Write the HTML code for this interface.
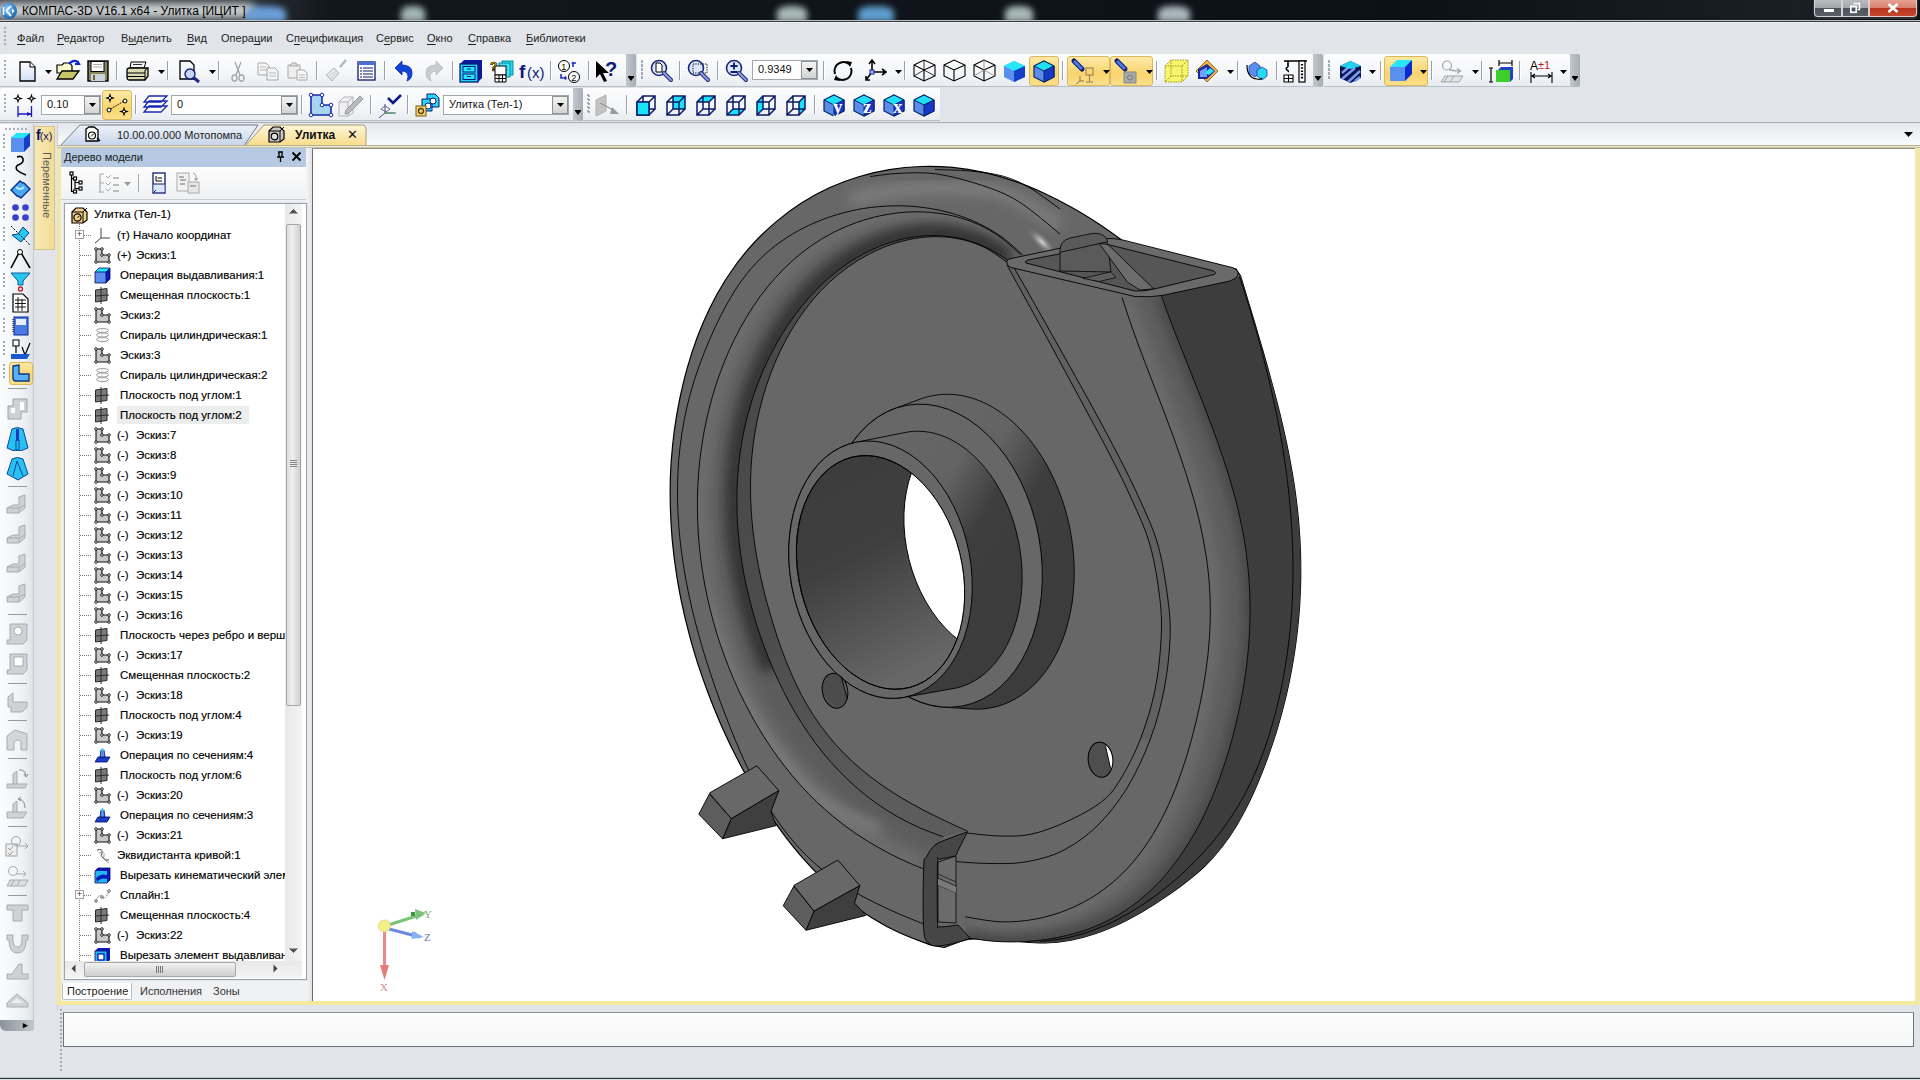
<!DOCTYPE html><html><head><meta charset="utf-8"><style>

*{box-sizing:border-box;margin:0;padding:0}
html,body{width:1920px;height:1080px;overflow:hidden;background:#e1e4e8;font-family:"Liberation Sans", sans-serif;font-size:11px;color:#000;position:relative}
.a{position:absolute}
.t{position:absolute;white-space:nowrap;line-height:1}
u{text-decoration:underline;text-underline-offset:2px;text-decoration-thickness:1px}
svg{position:absolute;overflow:visible}

</style></head><body>
<div class="a" style="left:0;top:0;width:1920px;height:22px;background:linear-gradient(90deg,#3a4046 0px,#2a3036 250px,#12171d 330px,#0c1117 1400px,#1a1f25 1800px,#0d1116 1920px)"></div>
<div class="a" style="left:0;top:0;width:330px;height:20px;overflow:hidden"><div class="a" style="left:-6px;top:3px;width:262px;height:15px;background:#cfd3d4;filter:blur(4px);border-radius:10px"></div></div>
<div class="a" style="left:0;top:0;width:1920px;height:20px;overflow:hidden">
<div class="a" style="left:246px;top:6px;width:40px;height:16px;background:#6a9fd8;filter:blur(3px);border-radius:40% 40% 0 0"></div>
<div class="a" style="left:401px;top:6px;width:24px;height:16px;background:#a2b4b2;filter:blur(3px);border-radius:40% 40% 0 0"></div>
<div class="a" style="left:777px;top:6px;width:30px;height:16px;background:#a8b8b6;filter:blur(3px);border-radius:40% 40% 0 0"></div>
<div class="a" style="left:858px;top:6px;width:36px;height:16px;background:#5f9ccc;filter:blur(3px);border-radius:40% 40% 0 0"></div>
<div class="a" style="left:1005px;top:6px;width:28px;height:16px;background:#a8b8b6;filter:blur(3px);border-radius:40% 40% 0 0"></div>
<div class="a" style="left:1158px;top:6px;width:32px;height:16px;background:#aab6bc;filter:blur(3px);border-radius:40% 40% 0 0"></div>
</div>
<div class="a" style="left:0;top:20px;width:1920px;height:1px;background:rgba(215,222,224,0.85)"></div>
<div class="a" style="left:0;top:21px;width:1920px;height:1px;background:#363b3f"></div><div class="a" style="left:0;top:22px;width:1920px;height:1px;background:#eef0f3"></div>
<svg style="left:0px;top:2px" width="18" height="18" viewBox="0 0 18 18"><defs><radialGradient id="kg" cx="0.4" cy="0.35" r="0.7"><stop offset="0" stop-color="#8cc8f0"/><stop offset="0.6" stop-color="#3a8ad0"/><stop offset="1" stop-color="#1d5a9a"/></radialGradient></defs><circle cx="9" cy="9" r="8" fill="url(#kg)"/><path d="M3.5 5v8" stroke="#fff" stroke-width="1.6"/><path d="M6 9 L11 4 M6.5 9 L11 14" stroke="#e8f4ff" stroke-width="2.2" fill="none"/><path d="M12 6.5 L14.5 9 L12 11.5 Z" fill="#fff"/></svg>
<div class="t" style="left:22px;top:5px;font-size:12px;color:#000">КОМПАС-3D V16.1 x64 - Улитка [ИЦИТ ]</div>
<div class="a" style="left:1813px;top:0;width:105px;height:19px;border:1px solid #2a2e33;border-top:none;border-radius:0 0 5px 5px;background:#2a2e33"></div>
<div class="a" style="left:1814px;top:0;width:28px;height:17px;border:1px solid #d0d4d8;border-top:none;border-radius:0 0 0 4px;background:linear-gradient(#b9bdbf,#a2a7aa 48%,#4d545c 50%,#5a6068)"></div>
<div class="a" style="left:1842px;top:0;width:27px;height:17px;border:1px solid #d0d4d8;border-top:none;background:linear-gradient(#b9bdbf,#a2a7aa 48%,#4d545c 50%,#5a6068)"></div>
<div class="a" style="left:1869px;top:0;width:48px;height:17px;border:1px solid #e8c8c0;border-top:none;border-radius:0 0 4px 0;background:linear-gradient(#e6a295,#d9806e 48%,#b8341c 50%,#c4482e)"></div>
<div class="a" style="left:1824px;top:9px;width:10px;height:3px;background:#fff"></div>
<svg style="left:1849px;top:2px" width="12" height="12"><path d="M4.5 1.5 H10.5 V7.5 H8.5" fill="none" stroke="#fff" stroke-width="1.3"/><rect x="1.8" y="4.3" width="5.4" height="6" fill="none" stroke="#fff" stroke-width="1.6"/></svg>
<svg style="left:1887px;top:3px" width="12" height="10"><path d="M1.5 1 L10.5 9 M10.5 1 L1.5 9" stroke="#fff" stroke-width="2.6"/></svg>
<div class="t" style="left:17px;top:33px;font-size:11px;color:#1e1e1e"><u>Ф</u>айл</div>
<div class="t" style="left:57px;top:33px;font-size:11px;color:#1e1e1e"><u>Р</u>едактор</div>
<div class="t" style="left:121px;top:33px;font-size:11px;color:#1e1e1e">В<u>ы</u>делить</div>
<div class="t" style="left:187px;top:33px;font-size:11px;color:#1e1e1e"><u>В</u>ид</div>
<div class="t" style="left:221px;top:33px;font-size:11px;color:#1e1e1e">Опера<u>ц</u>ии</div>
<div class="t" style="left:286px;top:33px;font-size:11px;color:#1e1e1e">С<u>п</u>ецификация</div>
<div class="t" style="left:376px;top:33px;font-size:11px;color:#1e1e1e">С<u>е</u>рвис</div>
<div class="t" style="left:427px;top:33px;font-size:11px;color:#1e1e1e"><u>О</u>кно</div>
<div class="t" style="left:468px;top:33px;font-size:11px;color:#1e1e1e"><u>С</u>правка</div>
<div class="t" style="left:526px;top:33px;font-size:11px;color:#1e1e1e"><u>Б</u>иблиотеки</div>
<svg style="left:4px;top:27px" width="2" height="21"><rect x="0" y="0" width="2" height="2" fill="#a3abb3"/><rect x="0" y="4" width="2" height="2" fill="#a3abb3"/><rect x="0" y="8" width="2" height="2" fill="#a3abb3"/><rect x="0" y="12" width="2" height="2" fill="#a3abb3"/><rect x="0" y="16" width="2" height="2" fill="#a3abb3"/></svg>
<div class="a" style="left:0px;top:54px;width:626px;height:33px;background:linear-gradient(#fdfdfe,#f4f6f8 60%,#e9ecf0);border-bottom:1px solid #b9bfc6;border-radius:2px 2px 0 0"></div>
<svg style="left:4px;top:60px" width="2" height="21"><rect x="0" y="0" width="2" height="2" fill="#a3abb3"/><rect x="0" y="4" width="2" height="2" fill="#a3abb3"/><rect x="0" y="8" width="2" height="2" fill="#a3abb3"/><rect x="0" y="12" width="2" height="2" fill="#a3abb3"/><rect x="0" y="16" width="2" height="2" fill="#a3abb3"/></svg>
<div class="a" style="left:626px;top:54px;width:10px;height:33px;background:linear-gradient(90deg,#c3c8ce,#a7adb4);border-radius:0 2px 2px 0"></div>
<div class="a" style="left:628px;top:76px;width:6px;height:1px;background:#000"></div>
<div class="t" style="left:628px;top:77px;width:0;height:0;border-left:3px solid transparent;border-right:3px solid transparent;border-top:4px solid #000"></div>
<div class="a" style="left:637px;top:54px;width:676px;height:33px;background:linear-gradient(#fdfdfe,#f4f6f8 60%,#e9ecf0);border-bottom:1px solid #b9bfc6;border-radius:2px 2px 0 0"></div>
<svg style="left:641px;top:60px" width="2" height="21"><rect x="0" y="0" width="2" height="2" fill="#a3abb3"/><rect x="0" y="4" width="2" height="2" fill="#a3abb3"/><rect x="0" y="8" width="2" height="2" fill="#a3abb3"/><rect x="0" y="12" width="2" height="2" fill="#a3abb3"/><rect x="0" y="16" width="2" height="2" fill="#a3abb3"/></svg>
<div class="a" style="left:1313px;top:54px;width:10px;height:33px;background:linear-gradient(90deg,#c3c8ce,#a7adb4);border-radius:0 2px 2px 0"></div>
<div class="a" style="left:1315px;top:76px;width:6px;height:1px;background:#000"></div>
<div class="t" style="left:1315px;top:77px;width:0;height:0;border-left:3px solid transparent;border-right:3px solid transparent;border-top:4px solid #000"></div>
<div class="a" style="left:1324px;top:54px;width:246px;height:33px;background:linear-gradient(#fdfdfe,#f4f6f8 60%,#e9ecf0);border-bottom:1px solid #b9bfc6;border-radius:2px 2px 0 0"></div>
<svg style="left:1328px;top:60px" width="2" height="21"><rect x="0" y="0" width="2" height="2" fill="#a3abb3"/><rect x="0" y="4" width="2" height="2" fill="#a3abb3"/><rect x="0" y="8" width="2" height="2" fill="#a3abb3"/><rect x="0" y="12" width="2" height="2" fill="#a3abb3"/><rect x="0" y="16" width="2" height="2" fill="#a3abb3"/></svg>
<div class="a" style="left:1570px;top:54px;width:10px;height:33px;background:linear-gradient(90deg,#c3c8ce,#a7adb4);border-radius:0 2px 2px 0"></div>
<div class="a" style="left:1572px;top:76px;width:6px;height:1px;background:#000"></div>
<div class="t" style="left:1572px;top:77px;width:0;height:0;border-left:3px solid transparent;border-right:3px solid transparent;border-top:4px solid #000"></div>
<div class="a" style="left:0px;top:88px;width:573px;height:33px;background:linear-gradient(#fdfdfe,#f4f6f8 60%,#e9ecf0);border-bottom:1px solid #b9bfc6;border-radius:2px 2px 0 0"></div>
<svg style="left:4px;top:94px" width="2" height="21"><rect x="0" y="0" width="2" height="2" fill="#a3abb3"/><rect x="0" y="4" width="2" height="2" fill="#a3abb3"/><rect x="0" y="8" width="2" height="2" fill="#a3abb3"/><rect x="0" y="12" width="2" height="2" fill="#a3abb3"/><rect x="0" y="16" width="2" height="2" fill="#a3abb3"/></svg>
<div class="a" style="left:573px;top:88px;width:10px;height:33px;background:linear-gradient(90deg,#c3c8ce,#a7adb4);border-radius:0 2px 2px 0"></div>
<div class="a" style="left:575px;top:110px;width:6px;height:1px;background:#000"></div>
<div class="t" style="left:575px;top:111px;width:0;height:0;border-left:3px solid transparent;border-right:3px solid transparent;border-top:4px solid #000"></div>
<div class="a" style="left:583px;top:88px;width:357px;height:33px;background:linear-gradient(#fdfdfe,#f4f6f8 60%,#e9ecf0);border-bottom:1px solid #b9bfc6;border-radius:2px 2px 0 0"></div>
<svg style="left:587px;top:94px" width="2" height="21"><rect x="0" y="0" width="2" height="2" fill="#a3abb3"/><rect x="0" y="4" width="2" height="2" fill="#a3abb3"/><rect x="0" y="8" width="2" height="2" fill="#a3abb3"/><rect x="0" y="12" width="2" height="2" fill="#a3abb3"/><rect x="0" y="16" width="2" height="2" fill="#a3abb3"/></svg>
<div class="a" style="left:0;top:122px;width:1920px;height:1px;background:#a8adb3"></div>
<svg style="left:19px;top:61px" width="17" height="21" viewBox="0 0 17 21"><path d="M1 1 H11 L16 6 V20 H1 Z" fill="url(#gdoc)" stroke="#000" stroke-width="1.3"/><path d="M11 1 V6 H16" fill="#fff" stroke="#000" stroke-width="1"/><defs><linearGradient id="gdoc" x1="0" y1="0" x2="0" y2="1"><stop offset="0" stop-color="#fff"/><stop offset="1" stop-color="#cfe0f4"/></linearGradient></defs></svg>
<svg style="left:45px;top:70px" width="7" height="4" viewBox="0 0 7 4"><path d="M0 0h7l-3.5 4z" fill="#000"/></svg>
<svg style="left:56px;top:59px" width="24" height="22" viewBox="0 0 24 22"><path d="M1 6 H6 L8 4 H14 L16 7 V14 H1 Z" fill="#fbf7c8" stroke="#000" stroke-width="1.2"/><path d="M1 20 L6 12 H23 L17 20 Z" fill="#c8c468" stroke="#000" stroke-width="1.3"/><path d="M13 5 Q17 0 22 3 L23 5 L19 5" fill="none" stroke="#0a2ad0" stroke-width="2.2"/></svg>
<svg style="left:87px;top:60px" width="22" height="23" viewBox="0 0 22 23"><rect x="1" y="1" width="20" height="20" fill="#8b8460" stroke="#000" stroke-width="1.4"/><rect x="4" y="1.5" width="13" height="10" fill="#fff" stroke="#000" stroke-width="1"/><path d="M6 4.5h9M6 7h9" stroke="#999" stroke-width="0.8"/><rect x="4" y="14" width="14" height="7" fill="#c9d3dc"/><rect x="6" y="15" width="2" height="5" fill="#6d6240"/></svg>
<div class="a" style="left:116px;top:61px;width:1px;height:19px;background:#9aa1a8;box-shadow:1px 0 0 #fff"></div>
<svg style="left:126px;top:61px" width="24" height="20" viewBox="0 0 24 20"><path d="M5 1 H20 L18 7 H4 Z" fill="#f3f3f3" stroke="#000" stroke-width="1"/><path d="M7 3.5h9" stroke="#333"/><path d="M1 9 Q1 7 4 7 H22 V15 L19 19 H3 Q1 19 1 16 Z" fill="#ddd8b0" stroke="#000" stroke-width="1.3"/><path d="M1 12 H19 M1 15.5 H19 M19 9 L22 7 M19 19 V9" stroke="#000" stroke-width="1"/></svg>
<svg style="left:158px;top:70px" width="7" height="4" viewBox="0 0 7 4"><path d="M0 0h7l-3.5 4z" fill="#000"/></svg>
<div class="a" style="left:167px;top:61px;width:1px;height:19px;background:#9aa1a8;box-shadow:1px 0 0 #fff"></div>
<svg style="left:179px;top:60px" width="22" height="23" viewBox="0 0 22 23"><path d="M1 1 H11 L15 5 V19 H1 Z" fill="#f4f6fb" stroke="#000" stroke-width="1.3"/><circle cx="11" cy="14" r="5" fill="#c7d4f2" stroke="#14207a" stroke-width="1.4"/><path d="M14.5 17.5 L20 22" stroke="#1d2a7a" stroke-width="3"/></svg>
<svg style="left:209px;top:70px" width="7" height="4" viewBox="0 0 7 4"><path d="M0 0h7l-3.5 4z" fill="#000"/></svg>
<div class="a" style="left:218px;top:61px;width:1px;height:19px;background:#9aa1a8;box-shadow:1px 0 0 #fff"></div>
<svg style="left:231px;top:61px" width="14" height="21" viewBox="0 0 14 21"><path d="M4 1 L9 14 M10 1 L5 14" stroke="#9aa0a5" stroke-width="1.2" fill="none"/><ellipse cx="3.5" cy="17" rx="2.5" ry="3.2" fill="none" stroke="#9aa0a5" stroke-width="1.2"/><ellipse cx="10.5" cy="17" rx="2.5" ry="3.2" fill="none" stroke="#9aa0a5" stroke-width="1.2"/></svg>
<svg style="left:257px;top:62px" width="22" height="19" viewBox="0 0 22 19"><path d="M1 1 H9 L12 4 V13 H1 Z" fill="#f4f4f4" stroke="#a5a9ad"/><path d="M10 6 H18 L21 9 V18 H10 Z" fill="#f4f4f4" stroke="#a5a9ad"/><path d="M3 5h6M3 8h6M12 11h7M12 14h7" stroke="#b5b9bd"/></svg>
<svg style="left:287px;top:62px" width="22" height="19" viewBox="0 0 22 19"><path d="M1 3 H13 V16 H1 Z" fill="#eeeeee" stroke="#a5a9ad"/><path d="M5 1 H9 L11 4 H3 Z" fill="#ddd" stroke="#a5a9ad"/><path d="M10 8 H17 L20 11 V18 H10 Z" fill="#f6f6f6" stroke="#a5a9ad"/><path d="M12 13h6M12 15.5h6" stroke="#b5b9bd"/></svg>
<div class="a" style="left:316px;top:61px;width:1px;height:19px;background:#9aa1a8;box-shadow:1px 0 0 #fff"></div>
<svg style="left:324px;top:59px" width="24" height="23" viewBox="0 0 24 23"><path d="M16 8 L22 1" stroke="#b2b6ba" stroke-width="2.5"/><path d="M10 9 L15 14 L8 22 L2 16 Z" fill="#e8e8e8" stroke="#b2b6ba"/><path d="M4 18 L12 12 M6 20 L13 14" stroke="#c6c9cc"/></svg>
<svg style="left:357px;top:61px" width="19" height="20" viewBox="0 0 19 20"><rect x="1" y="1" width="17" height="18" fill="#fff" stroke="#0b1a6a" stroke-width="1.3"/><rect x="1" y="1" width="17" height="3" fill="#4c6fd6"/><path d="M3 7h2M6 7h10M3 10h2M6 10h10M3 13h2M6 13h10M3 16h2M6 16h10" stroke="#0b1a6a" stroke-width="1.2"/></svg>
<div class="a" style="left:384px;top:61px;width:1px;height:19px;background:#9aa1a8;box-shadow:1px 0 0 #fff"></div>
<svg style="left:394px;top:60px" width="21" height="22" viewBox="0 0 21 22"><path d="M1 8 L8 1 V5 Q18 5 18 13 Q18 19 13 21 Q15 16 13 13 Q11 11 8 11 V15 Z" fill="#1046d8" stroke="#0a2a9a" stroke-width="0.8"/></svg>
<svg style="left:423px;top:60px" width="21" height="21" viewBox="0 0 21 21"><path d="M20 8 L13 1 V5 Q3 5 3 13 Q3 19 8 21 Q6 16 8 13 Q10 11 13 11 V15 Z" fill="#c9ccd0" stroke="#b8bbbf" stroke-width="0.8"/></svg>
<div class="a" style="left:452px;top:61px;width:1px;height:19px;background:#9aa1a8;box-shadow:1px 0 0 #fff"></div>
<svg style="left:459px;top:59px" width="25" height="24" viewBox="0 0 25 24"><path d="M1 5 L5 1 H23 V19 L19 23 H1 Z" fill="#0b1a9a"/><rect x="1" y="5" width="18" height="18" fill="#22d4f0" stroke="#0b1a7a" stroke-width="1.3"/><rect x="4" y="7.5" width="12" height="5.5" fill="#27e6ff" stroke="#0b1a7a"/><rect x="4" y="15" width="12" height="5.5" fill="#27e6ff" stroke="#0b1a7a"/><path d="M8 10h4M8 17.5h4" stroke="#0b1a7a"/></svg>
<svg style="left:490px;top:60px" width="25" height="23" viewBox="0 0 25 23"><rect x="12" y="1" width="11" height="14" fill="#27d8f0" stroke="#0a8c9a"/><rect x="9" y="3" width="11" height="14" fill="#3ee3f5" stroke="#0a8c9a"/><rect x="5" y="6" width="11" height="9" fill="#fff" stroke="#000"/><path d="M5 15 H16 V22 H5 Z M5 18.5 H16 M9 15 V22 M12.5 15 V22" fill="#fff" stroke="#000"/><text x="0" y="11" font-family="Liberation Sans" font-weight="bold" font-size="12" fill="#f5e900" stroke="#000" stroke-width="0.7">?</text></svg>
<svg style="left:519px;top:61px" width="26" height="20" viewBox="0 0 26 20"><text x="0" y="17" font-family="Liberation Sans" font-weight="bold" font-size="19" fill="#101a7a">f</text><text x="8" y="17" font-family="Liberation Sans" font-size="15" fill="#101a7a">(x)</text></svg>
<div class="a" style="left:550px;top:61px;width:1px;height:19px;background:#9aa1a8;box-shadow:1px 0 0 #fff"></div>
<svg style="left:557px;top:59px" width="26" height="25" viewBox="0 0 26 25"><circle cx="7" cy="7" r="5.5" fill="#fff" stroke="#000"/><text x="4.3" y="10.5" font-size="9" font-family="Liberation Sans">1</text><circle cx="17" cy="18" r="5.5" fill="#fff" stroke="#000"/><text x="14.3" y="21.5" font-size="9" font-family="Liberation Sans">2</text><path d="M16 8 V4 H19 M15 5 L16.5 3" stroke="#1a30c0" stroke-width="1.6" fill="none"/><path d="M4 15 V19 H9 M8 17.5 L9 19 L8 20.5" stroke="#1a30c0" stroke-width="1.6" fill="none"/></svg>
<div class="a" style="left:588px;top:61px;width:1px;height:19px;background:#9aa1a8;box-shadow:1px 0 0 #fff"></div>
<svg style="left:595px;top:60px" width="25" height="23" viewBox="0 0 25 23"><path d="M1 1 L1 18 L5 14 L9 22 L12 21 L8 13 L14 13 Z" fill="#000"/><text x="10" y="16" font-family="Liberation Sans" font-weight="bold" font-size="20" fill="#101a7a">?</text></svg>
<svg style="left:641px;top:61px" width="2" height="21"><rect x="0" y="0" width="2" height="2" fill="#a3abb3"/><rect x="0" y="4" width="2" height="2" fill="#a3abb3"/><rect x="0" y="8" width="2" height="2" fill="#a3abb3"/><rect x="0" y="12" width="2" height="2" fill="#a3abb3"/><rect x="0" y="16" width="2" height="2" fill="#a3abb3"/></svg>
<svg style="left:650px;top:59px" width="23" height="23" viewBox="0 0 23 23"><circle cx="9" cy="9" r="7.5" fill="#dce8fb" stroke="#1c2a7a" stroke-width="1.6"/><path d="M6 4 H10 L12 6 V13 H6 Z" fill="#fff" stroke="#000" stroke-width="1"/><path d="M14 14 L21 21" stroke="#1c2a7a" stroke-width="4" stroke-linecap="round"/><path d="M14 14 L21 21" stroke="#8fa0e0" stroke-width="2" stroke-linecap="round"/></svg>
<div class="a" style="left:679px;top:61px;width:1px;height:19px;background:#9aa1a8;box-shadow:1px 0 0 #fff"></div>
<svg style="left:687px;top:59px" width="23" height="23" viewBox="0 0 23 23"><circle cx="9" cy="9" r="7.5" fill="#dce8fb" stroke="#1c2a7a" stroke-width="1.6"/><rect x="6" y="5" width="14" height="9" fill="none" stroke="#000" stroke-dasharray="1.2 1.2" stroke-width="1"/><path d="M14 14 L21 21" stroke="#1c2a7a" stroke-width="4" stroke-linecap="round"/><path d="M14 14 L21 21" stroke="#8fa0e0" stroke-width="2" stroke-linecap="round"/></svg>
<div class="a" style="left:717px;top:61px;width:1px;height:19px;background:#9aa1a8;box-shadow:1px 0 0 #fff"></div>
<svg style="left:725px;top:59px" width="23" height="23" viewBox="0 0 23 23"><circle cx="9" cy="9" r="7.5" fill="#dce8fb" stroke="#1c2a7a" stroke-width="1.6"/><path d="M5.5 7 H12.5 M9 3.5 V10.5 M5.5 13 H12.5" stroke="#0b1a6a" stroke-width="1.8"/><path d="M14 14 L21 21" stroke="#1c2a7a" stroke-width="4" stroke-linecap="round"/><path d="M14 14 L21 21" stroke="#8fa0e0" stroke-width="2" stroke-linecap="round"/></svg>
<div class="a" style="left:752px;top:60px;width:66px;height:20px;background:#fff;border:1px solid #a2a7ad"></div><div class="t" style="left:758px;top:64px;font-size:11px;color:#111">0.9349</div><div class="a" style="left:801px;top:61px;width:16px;height:18px;background:linear-gradient(#f3f3f3,#d4d4d4);border:1px solid #8d9297"></div><svg style="left:806px;top:68px" width="7" height="4" viewBox="0 0 7 4"><path d="M0 0h7l-3.5 4z" fill="#000"/></svg>
<div class="a" style="left:823px;top:61px;width:1px;height:19px;background:#9aa1a8;box-shadow:1px 0 0 #fff"></div>
<svg style="left:832px;top:60px" width="22" height="22" viewBox="0 0 22 22"><path d="M17 4 A9 9 0 0 0 3 8" fill="none" stroke="#000" stroke-width="2"/><path d="M5 18 A9 9 0 0 0 19 14" fill="none" stroke="#000" stroke-width="2"/><path d="M3 14 A9 9 0 0 1 3 8" fill="none" stroke="#000" stroke-width="2"/><path d="M19 8 A9 9 0 0 1 19 14" fill="none" stroke="#000" stroke-width="2"/><path d="M14 1 L20 2 L18 7 Z M8 21 L2 20 L4 15 Z" fill="#000"/></svg>
<svg style="left:864px;top:59px" width="23" height="24" viewBox="0 0 23 24"><path d="M8 13 V2 M5 5 L8 1 L11 5 M8 13 H21 M18 10 L22 13 L18 16 M8 13 L2 21 M2 17 V21 H6" fill="none" stroke="#000" stroke-width="1.6"/><rect x="6" y="11" width="4" height="4" fill="#9db1f0" stroke="#1a2a9a"/></svg>
<svg style="left:895px;top:70px" width="7" height="4" viewBox="0 0 7 4"><path d="M0 0h7l-3.5 4z" fill="#000"/></svg>
<div class="a" style="left:904px;top:61px;width:1px;height:19px;background:#9aa1a8;box-shadow:1px 0 0 #fff"></div>
<svg style="left:913px;top:59px" width="23" height="23" viewBox="0 0 23 23"><path d="M1 6 L11 1 L22 6 V17 L11 22 L1 17 Z M1 6 L11 11 L22 6 M11 11 V22" fill="none" stroke="#000" stroke-width="1.1"/><path d="M11 1 V11 L1 17 M11 11 L22 17" fill="none" stroke="#000" stroke-width="0.8"/></svg>
<svg style="left:943px;top:59px" width="23" height="23" viewBox="0 0 23 23"><path d="M1 6 L11 1 L22 6 V17 L11 22 L1 17 Z M1 6 L11 11 L22 6 M11 11 V22" fill="none" stroke="#000" stroke-width="1.1"/></svg>
<svg style="left:973px;top:59px" width="23" height="23" viewBox="0 0 23 23"><path d="M1 6 L11 1 L22 6 V17 L11 22 L1 17 Z M1 6 L11 11 L22 6 M11 11 V22" fill="none" stroke="#000" stroke-width="1.1"/><path d="M11 1 V11 L1 17 M11 11 L22 17" fill="none" stroke="#888" stroke-width="0.8"/></svg>
<svg style="left:1003px;top:60px" width="23" height="23" viewBox="0 0 23 23"><path d="M1 6 L11 1 L22 6 V17 L11 22 L1 17 Z" fill="#5a8ff0"/><path d="M1 6 L11 1 L22 6 L11 11 Z" fill="#25e6fa"/><path d="M11 11 L22 6 V17 L11 22 Z" fill="#1440c8"/></svg>
<div class="a" style="left:1029px;top:56px;width:30px;height:30px;background:linear-gradient(#fde9a6,#f9d46e 60%,#fbe08d);border:1px solid #d9b95c;border-radius:3px"></div>
<svg style="left:1033px;top:60px" width="23" height="23" viewBox="0 0 23 23"><path d="M11 1 L21 6 L21 17 L11 22 L1 17 L1 6 Z" fill="#5b8de8" stroke="#08246e" stroke-width="1.2"/><path d="M1 6 L11 1 L21 6 L11 11 Z" fill="#1fe0f5" stroke="#08246e" stroke-width="1"/><path d="M11 11 L21 6 L21 17 L11 22 Z" fill="#1637c4" stroke="#08246e" stroke-width="1"/></svg>
<div class="a" style="left:1062px;top:61px;width:1px;height:19px;background:#9aa1a8;box-shadow:1px 0 0 #fff"></div>
<div class="a" style="left:1067px;top:56px;width:43px;height:30px;background:linear-gradient(#fde9a6,#f9d46e 60%,#fbe08d);border:1px solid #d9b95c;border-radius:3px"></div>
<div class="a" style="left:1110px;top:56px;width:43px;height:30px;background:linear-gradient(#fde9a6,#f9d46e 60%,#fbe08d);border:1px solid #d9b95c;border-radius:3px"></div>
<svg style="left:1071px;top:58px" width="30" height="26" viewBox="0 0 30 26"><path d="M3 3 L11 11" stroke="#0b1a6a" stroke-width="5" stroke-linecap="round"/><path d="M3 3 L11 11" stroke="#4a7ae8" stroke-width="3"/><rect x="15" y="10" width="7" height="7" fill="none" stroke="#8a7a50"/><path d="M18.5 17 V23 M15 24 H22 M9 18 V23 L5 26 M9 23 H13" stroke="#8a7a50" fill="none"/></svg>
<svg style="left:1103px;top:70px" width="7" height="4" viewBox="0 0 7 4"><path d="M0 0h7l-3.5 4z" fill="#000"/></svg>
<svg style="left:1114px;top:58px" width="30" height="26" viewBox="0 0 30 26"><path d="M3 3 L11 11" stroke="#0b1a6a" stroke-width="5" stroke-linecap="round"/><path d="M3 3 L11 11" stroke="#4a7ae8" stroke-width="3"/><path d="M10 14 H22 V25 H10 Z" fill="#a8a8a8" stroke="#888"/><circle cx="16" cy="19.5" r="2.5" fill="none" stroke="#777"/></svg>
<svg style="left:1146px;top:70px" width="7" height="4" viewBox="0 0 7 4"><path d="M0 0h7l-3.5 4z" fill="#000"/></svg>
<div class="a" style="left:1156px;top:61px;width:1px;height:19px;background:#9aa1a8;box-shadow:1px 0 0 #fff"></div>
<svg style="left:1164px;top:59px" width="25" height="24" viewBox="0 0 25 24"><path d="M1 7 L7 1 H24 V17 L18 23 H1 Z" fill="#f8f56a" stroke="#9a9a20" stroke-dasharray="1.5 1" stroke-width="1"/><path d="M1 7 H18 V23 M18 7 L24 1 M7 1 V17 H24 M7 17 L1 23" fill="none" stroke="#9a9a20" stroke-dasharray="1.5 1"/></svg>
<svg style="left:1195px;top:59px" width="25" height="24" viewBox="0 0 25 24"><path d="M12 1 L23 12 L12 23 L1 12 Z" fill="#f2b04a" stroke="#9a6a20"/><path d="M3 10 L12 5 L20 12 L12 20 H3 Z" fill="#1b2a9a"/><path d="M5 12 L12 8 V18 H5 Z" fill="#6fa0ff"/><path d="M10 14 L15 9 L19 12 L14 16 Z" fill="#25e6fa"/></svg>
<svg style="left:1227px;top:70px" width="7" height="4" viewBox="0 0 7 4"><path d="M0 0h7l-3.5 4z" fill="#000"/></svg>
<div class="a" style="left:1237px;top:61px;width:1px;height:19px;background:#9aa1a8;box-shadow:1px 0 0 #fff"></div>
<svg style="left:1245px;top:60px" width="24" height="22" viewBox="0 0 24 22"><path d="M4 6 L10 2 L15 6 V13 L10 17 L4 13 Z" fill="#5a8ff0" stroke="#22409a" stroke-width="0.8"/><path d="M12 10 L17 7 L22 10 V16 L17 20 L12 16 Z" fill="#27d8f5" stroke="#22409a" stroke-width="0.8"/><path d="M2 5 Q2 18 12 19 Q16 20 17 18" fill="none" stroke="#000" stroke-width="1.2"/></svg>
<div class="a" style="left:1276px;top:61px;width:1px;height:19px;background:#9aa1a8;box-shadow:1px 0 0 #fff"></div>
<svg style="left:1282px;top:59px" width="26" height="24" viewBox="0 0 26 24"><path d="M2 2 H25 M6 2 V8 M6 8 Q3 9 5 11 Q7 12 6 13" fill="none" stroke="#000" stroke-width="1.6"/><rect x="17" y="2" width="6" height="21" fill="#fff" stroke="#000" stroke-width="1.2"/><path d="M20 5 V21" stroke="#000" stroke-dasharray="1.6 1.6" stroke-width="2.2"/><path d="M2 16 H11 V23 H2 Z M2 19.5 H11 M6.5 16 V23" fill="#fff" stroke="#000" stroke-width="1.1"/></svg>
<svg style="left:1328px;top:61px" width="2" height="21"><rect x="0" y="0" width="2" height="2" fill="#a3abb3"/><rect x="0" y="4" width="2" height="2" fill="#a3abb3"/><rect x="0" y="8" width="2" height="2" fill="#a3abb3"/><rect x="0" y="12" width="2" height="2" fill="#a3abb3"/><rect x="0" y="16" width="2" height="2" fill="#a3abb3"/></svg>
<svg style="left:1339px;top:60px" width="23" height="24" viewBox="0 0 23 24"><path d="M11.5 1 L22 6 V18 L11.5 23 L1 18 V6 Z" fill="#0b1450"/><path d="M3 13 L11 6 M3 19 L16 8 M9 22 L21 11 M16 21 L21 17" stroke="#7b9cf0" stroke-width="2.5"/><path d="M1 6 L11.5 1 L22 6 L11.5 9 Z" fill="#25e6fa" opacity="0.9"/></svg>
<svg style="left:1369px;top:70px" width="7" height="4" viewBox="0 0 7 4"><path d="M0 0h7l-3.5 4z" fill="#000"/></svg>
<div class="a" style="left:1380px;top:61px;width:1px;height:19px;background:#9aa1a8;box-shadow:1px 0 0 #fff"></div>
<div class="a" style="left:1384px;top:56px;width:44px;height:30px;background:linear-gradient(#fde9a6,#f9d46e 60%,#fbe08d);border:1px solid #d9b95c;border-radius:3px"></div>
<svg style="left:1389px;top:59px" width="24" height="23" viewBox="0 0 24 23"><path d="M1 8 L8 1 H23 L16 8 Z" fill="#25e6fa"/><path d="M16 8 L23 1 V15 L16 22 Z" fill="#0b2ad0"/><rect x="1" y="8" width="15" height="14" fill="#5a8ff0"/></svg>
<svg style="left:1420px;top:70px" width="7" height="4" viewBox="0 0 7 4"><path d="M0 0h7l-3.5 4z" fill="#000"/></svg>
<div class="a" style="left:1431px;top:61px;width:1px;height:19px;background:#9aa1a8;box-shadow:1px 0 0 #fff"></div>
<svg style="left:1440px;top:60px" width="25" height="23" viewBox="0 0 25 23"><circle cx="7" cy="5.5" r="4.5" fill="none" stroke="#a0a4a8" stroke-width="1.2"/><path d="M9 9 Q11 11 20 11 M17 8.5 L20.5 11 L17 13.5" fill="none" stroke="#a0a4a8" stroke-width="1.2"/><path d="M5 16 H23 L19 22 H1 Z M8 16 L4 22 M14 16 L10 22" fill="#e4e4e4" stroke="#a0a4a8"/></svg>
<svg style="left:1472px;top:70px" width="7" height="4" viewBox="0 0 7 4"><path d="M0 0h7l-3.5 4z" fill="#000"/></svg>
<div class="a" style="left:1481px;top:61px;width:1px;height:19px;background:#9aa1a8;box-shadow:1px 0 0 #fff"></div>
<svg style="left:1489px;top:59px" width="26" height="24" viewBox="0 0 26 24"><path d="M10 4 H23 M10 1 V7 M23 1 V7 M2 9 V23 M0 9 H4 M0 23 H4" stroke="#000" stroke-width="1.2" fill="none"/><path d="M9 11 L12 8 H24 V20 L21 23 H9 Z" fill="#2040c8"/><rect x="7" y="11" width="14" height="12" fill="#3ccf2a"/></svg>
<div class="a" style="left:1519px;top:61px;width:1px;height:19px;background:#9aa1a8;box-shadow:1px 0 0 #fff"></div>
<svg style="left:1530px;top:59px" width="24" height="24" viewBox="0 0 24 24"><text x="0" y="11" font-family="Liberation Sans" font-size="12" fill="#000">A</text><text x="8" y="10" font-family="Liberation Sans" font-size="11" fill="#b02020">±1</text><path d="M1 13 V24 M22 13 V24 M2 17 H21 M5 15 L2 17 L5 19 M18 15 L21 17 L18 19" fill="none" stroke="#000" stroke-width="1.1"/></svg>
<svg style="left:1560px;top:70px" width="7" height="4" viewBox="0 0 7 4"><path d="M0 0h7l-3.5 4z" fill="#000"/></svg>
<svg style="left:12px;top:92px" width="26" height="26" viewBox="0 0 26 26"><path d="M6 1.5 L7.2 5.3 L11 6.5 L7.2 7.7 L6 11.5 L4.8 7.7 L1 6.5 L4.8 5.3 Z" fill="#000"/><circle cx="6" cy="6.5" r="1" fill="#fff"/><path d="M19.5 1.5 L20.7 5.3 L24.5 6.5 L20.7 7.7 L19.5 11.5 L18.3 7.7 L14.5 6.5 L18.3 5.3 Z" fill="#000"/><circle cx="19.5" cy="6.5" r="1" fill="#fff"/><path d="M6 14 V25 M19.5 14 V25 M6 22 H19" stroke="#1a1ac0" stroke-width="1.3"/><path d="M15 20 L19.5 22 L15 24 Z" fill="#1a1ac0"/></svg>
<div class="a" style="left:41px;top:95px;width:60px;height:20px;background:#fff;border:1px solid #a2a7ad"></div><div class="t" style="left:47px;top:99px;font-size:11px;color:#111">0.10</div><div class="a" style="left:84px;top:96px;width:16px;height:18px;background:linear-gradient(#f3f3f3,#d4d4d4);border:1px solid #8d9297"></div><svg style="left:89px;top:103px" width="7" height="4" viewBox="0 0 7 4"><path d="M0 0h7l-3.5 4z" fill="#000"/></svg>
<div class="a" style="left:102px;top:90px;width:30px;height:30px;background:linear-gradient(#fde9a6,#f9d46e 60%,#fbe08d);border:1px solid #d9b95c;border-radius:3px"></div>
<svg style="left:104px;top:92px" width="26" height="26" viewBox="0 0 26 26"><path d="M6 1 L7.2 4.8 L11 6 L7.2 7.2 L6 11 L4.8 7.2 L1 6 L4.8 4.8 Z" fill="#000"/><circle cx="6" cy="6" r="1" fill="#fff"/><path d="M20 14.5 L21.2 18.3 L25 19.5 L21.2 20.7 L20 24.5 L18.8 20.7 L15 19.5 L18.8 18.3 Z" fill="#000"/><circle cx="20" cy="19.5" r="1" fill="#fff"/><path d="M5 18 L20 9" stroke="#000" stroke-width="1" stroke-dasharray="1.5 1"/><circle cx="5" cy="18" r="2" fill="#fff" stroke="#000"/><circle cx="21" cy="9" r="2" fill="#fff" stroke="#000"/></svg>
<div class="a" style="left:135px;top:95px;width:1px;height:19px;background:#9aa1a8;box-shadow:1px 0 0 #fff"></div>
<svg style="left:143px;top:95px" width="25" height="20" viewBox="0 0 25 20"><path d="M6 1 H24 L18 7 H1 Z M6 6 H24 L18 12 H1 Z M6 11 H24 L18 17 H1 Z" fill="#fff" stroke="#1a2ab0" stroke-width="1.3"/></svg>
<div class="a" style="left:171px;top:95px;width:127px;height:20px;background:#fff;border:1px solid #a2a7ad"></div><div class="t" style="left:177px;top:99px;font-size:11px;color:#111">0</div><div class="a" style="left:281px;top:96px;width:16px;height:18px;background:linear-gradient(#f3f3f3,#d4d4d4);border:1px solid #8d9297"></div><svg style="left:286px;top:103px" width="7" height="4" viewBox="0 0 7 4"><path d="M0 0h7l-3.5 4z" fill="#000"/></svg>
<div class="a" style="left:301px;top:95px;width:1px;height:19px;background:#9aa1a8;box-shadow:1px 0 0 #fff"></div>
<svg style="left:309px;top:93px" width="25" height="24" viewBox="0 0 25 24"><path d="M2 2 H13 V12 H22 V22 H2 Z" fill="#a8d4f0" stroke="#1a2ab0" stroke-width="1.6" stroke-linejoin="round"/><circle cx="2" cy="2" r="1.8" fill="#fff" stroke="#1a2ab0"/><circle cx="13" cy="2" r="1.8" fill="#fff" stroke="#1a2ab0"/><circle cx="13" cy="12" r="1.8" fill="#fff" stroke="#1a2ab0"/><circle cx="22" cy="12" r="1.8" fill="#fff" stroke="#1a2ab0"/><circle cx="22" cy="22" r="1.8" fill="#fff" stroke="#1a2ab0"/><circle cx="2" cy="22" r="1.8" fill="#fff" stroke="#1a2ab0"/></svg>
<svg style="left:338px;top:93px" width="26" height="24" viewBox="0 0 26 24"><path d="M1 9 L6 4 H15 V20 L10 23 H1 Z" fill="#f0f0f0" stroke="#b0b3b6"/><path d="M1 9 H10 V23 M10 9 L15 4" fill="none" stroke="#b0b3b6"/><path d="M8 17 L22 3 L25 6 L11 20 L7 21 Z" fill="#b8bbbe" stroke="#999"/></svg>
<div class="a" style="left:370px;top:95px;width:1px;height:19px;background:#9aa1a8;box-shadow:1px 0 0 #fff"></div>
<svg style="left:378px;top:94px" width="24" height="24" viewBox="0 0 24 24"><path d="M10 4 L15 9 L23 1" fill="none" stroke="#0b1a8a" stroke-width="2.6"/><path d="M7 10 V19 H18 M7 19 L1 24" fill="none" stroke="#4a4a8a" stroke-width="1"/><path d="M3 15 L7 12 L12 15 L8 18 Z" fill="none" stroke="#4a4a8a" stroke-width="0.8"/><path d="M7 19 H16" stroke="#3aa83a"/></svg>
<div class="a" style="left:407px;top:95px;width:1px;height:19px;background:#9aa1a8;box-shadow:1px 0 0 #fff"></div>
<svg style="left:415px;top:93px" width="25" height="24" viewBox="0 0 25 24"><path d="M12 1 H20 L24 5 V14 H12 Z" fill="#27d8f5" stroke="#0a1a7a"/><path d="M7 6 H17 V18 H7 Z" fill="#27d8f5" stroke="#0a1a7a"/><circle cx="18" cy="8" r="3" fill="#fff" stroke="#0a1a7a"/><circle cx="13" cy="13" r="3" fill="#fff" stroke="#0a1a7a"/><rect x="1" y="13" width="10" height="10" fill="#f2d27a" stroke="#7a5a10"/><circle cx="6" cy="18" r="2.5" fill="none" stroke="#5a3a00" stroke-width="1.3"/></svg>
<div class="a" style="left:443px;top:95px;width:126px;height:20px;background:#fff;border:1px solid #a2a7ad"></div><div class="t" style="left:449px;top:99px;font-size:11px;color:#111">Улитка (Тел-1)</div><div class="a" style="left:552px;top:96px;width:16px;height:18px;background:linear-gradient(#f3f3f3,#d4d4d4);border:1px solid #8d9297"></div><svg style="left:557px;top:103px" width="7" height="4" viewBox="0 0 7 4"><path d="M0 0h7l-3.5 4z" fill="#000"/></svg>
<svg style="left:588px;top:95px" width="2" height="21"><rect x="0" y="0" width="2" height="2" fill="#a3abb3"/><rect x="0" y="4" width="2" height="2" fill="#a3abb3"/><rect x="0" y="8" width="2" height="2" fill="#a3abb3"/><rect x="0" y="12" width="2" height="2" fill="#a3abb3"/><rect x="0" y="16" width="2" height="2" fill="#a3abb3"/></svg>
<svg style="left:595px;top:94px" width="26" height="23" viewBox="0 0 26 23"><path d="M1 6 L11 1 V17 L1 22 Z" fill="#c4c4c4" stroke="#b0b0b0"/><path d="M5 9 L20 17" stroke="#999" stroke-width="1.3"/><path d="M17 13 L24 20 L15 20 Z" fill="#9a9a9a"/></svg>
<div class="a" style="left:626px;top:95px;width:1px;height:19px;background:#9aa1a8;box-shadow:1px 0 0 #fff"></div>
<svg style="left:634px;top:94px" width="23" height="23" viewBox="0 0 23 23"><path d="M3 8 L15 8 L15 21 L3 21 Z M9 2 L21 2 L21 15 L9 15 Z M3 8 L9 2 M15 8 L21 2 M15 21 L21 15 M3 21 L9 15" fill="none" stroke="#0b1a6a" stroke-width="1.5"/><path d="M3 8 L15 8 L15 21 L3 21 Z" fill="#19e3f7" stroke="#0b1a6a" stroke-width="1.5"/></svg>
<svg style="left:664px;top:94px" width="23" height="23" viewBox="0 0 23 23"><path d="M9 2 L21 2 L21 15 L9 15 Z" fill="#19e3f7"/><path d="M3 8 L15 8 L15 21 L3 21 Z M9 2 L21 2 L21 15 L9 15 Z M3 8 L9 2 M15 8 L21 2 M15 21 L21 15 M3 21 L9 15" fill="none" stroke="#0b1a6a" stroke-width="1.5"/></svg>
<svg style="left:694px;top:94px" width="23" height="23" viewBox="0 0 23 23"><path d="M3 8 L9 2 L21 2 L15 8 Z" fill="#19e3f7"/><path d="M3 8 L15 8 L15 21 L3 21 Z M9 2 L21 2 L21 15 L9 15 Z M3 8 L9 2 M15 8 L21 2 M15 21 L21 15 M3 21 L9 15" fill="none" stroke="#0b1a6a" stroke-width="1.5"/></svg>
<svg style="left:724px;top:94px" width="23" height="23" viewBox="0 0 23 23"><path d="M3 21 L9 15 L21 15 L15 21 Z" fill="#19e3f7"/><path d="M3 8 L15 8 L15 21 L3 21 Z M9 2 L21 2 L21 15 L9 15 Z M3 8 L9 2 M15 8 L21 2 M15 21 L21 15 M3 21 L9 15" fill="none" stroke="#0b1a6a" stroke-width="1.5"/></svg>
<svg style="left:754px;top:94px" width="23" height="23" viewBox="0 0 23 23"><path d="M3 8 L9 2 L9 15 L3 21 Z" fill="#19e3f7"/><path d="M3 8 L15 8 L15 21 L3 21 Z M9 2 L21 2 L21 15 L9 15 Z M3 8 L9 2 M15 8 L21 2 M15 21 L21 15 M3 21 L9 15" fill="none" stroke="#0b1a6a" stroke-width="1.5"/></svg>
<svg style="left:784px;top:94px" width="23" height="23" viewBox="0 0 23 23"><path d="M15 8 L21 2 L21 15 L15 21 Z" fill="#19e3f7"/><path d="M3 8 L15 8 L15 21 L3 21 Z M9 2 L21 2 L21 15 L9 15 Z M3 8 L9 2 M15 8 L21 2 M15 21 L21 15 M3 21 L9 15" fill="none" stroke="#0b1a6a" stroke-width="1.5"/></svg>
<div class="a" style="left:814px;top:95px;width:1px;height:19px;background:#9aa1a8;box-shadow:1px 0 0 #fff"></div>
<svg style="left:823px;top:94px" width="23" height="23" viewBox="0 0 23 23"><path d="M11 1 L21 6 L21 17 L11 22 L1 17 L1 6 Z" fill="#5b8de8" stroke="#08246e" stroke-width="1.2"/><path d="M1 6 L11 1 L21 6 L11 11 Z" fill="#1fe0f5" stroke="#08246e" stroke-width="1"/><path d="M11 11 L21 6 L21 17 L11 22 Z" fill="#1637c4" stroke="#08246e" stroke-width="1"/><text x="10" y="19" font-family="Liberation Serif" font-weight="bold" font-size="19" fill="#fff">y</text></svg>
<svg style="left:853px;top:94px" width="23" height="23" viewBox="0 0 23 23"><path d="M11 1 L21 6 L21 17 L11 22 L1 17 L1 6 Z" fill="#5b8de8" stroke="#08246e" stroke-width="1.2"/><path d="M1 6 L11 1 L21 6 L11 11 Z" fill="#1fe0f5" stroke="#08246e" stroke-width="1"/><path d="M11 11 L21 6 L21 17 L11 22 Z" fill="#1637c4" stroke="#08246e" stroke-width="1"/><text x="10" y="19" font-family="Liberation Serif" font-weight="bold" font-size="19" fill="#fff">z</text></svg>
<svg style="left:883px;top:94px" width="23" height="23" viewBox="0 0 23 23"><path d="M11 1 L21 6 L21 17 L11 22 L1 17 L1 6 Z" fill="#5b8de8" stroke="#08246e" stroke-width="1.2"/><path d="M1 6 L11 1 L21 6 L11 11 Z" fill="#1fe0f5" stroke="#08246e" stroke-width="1"/><path d="M11 11 L21 6 L21 17 L11 22 Z" fill="#1637c4" stroke="#08246e" stroke-width="1"/><text x="10" y="19" font-family="Liberation Serif" font-weight="bold" font-size="19" fill="#fff">x</text></svg>
<svg style="left:913px;top:94px" width="23" height="23" viewBox="0 0 23 23"><path d="M11 1 L21 6 L21 17 L11 22 L1 17 L1 6 Z" fill="#5b8de8" stroke="#08246e" stroke-width="1.2"/><path d="M1 6 L11 1 L21 6 L11 11 Z" fill="#1fe0f5" stroke="#08246e" stroke-width="1"/><path d="M11 11 L21 6 L21 17 L11 22 Z" fill="#1637c4" stroke="#08246e" stroke-width="1"/></svg>
<div class="a" style="left:0;top:124px;width:34px;height:897px;background:linear-gradient(90deg,#fbfcfd,#eef1f4 70%,#dfe3e8);border-right:1px solid #c4c9cf"></div>
<div class="a" style="left:0;top:1020px;width:34px;height:11px;background:linear-gradient(90deg,#8c939a,#c1c6cc);border-radius:0 0 3px 6px"></div>
<div class="t" style="left:23px;top:1021px;font-size:9px;font-weight:bold">▸</div>
<div class="a" style="left:5px;top:128px;width:22px;height:2px;background:repeating-linear-gradient(90deg,#a9b1b9 0 2px,transparent 2px 4px)"></div>
<svg style="left:3px;top:134px" width="2" height="17"><rect x="0" y="0" width="2" height="2" fill="#a3abb3"/><rect x="0" y="4" width="2" height="2" fill="#a3abb3"/><rect x="0" y="8" width="2" height="2" fill="#a3abb3"/><rect x="0" y="12" width="2" height="2" fill="#a3abb3"/></svg>
<svg style="left:3px;top:157px" width="2" height="17"><rect x="0" y="0" width="2" height="2" fill="#a3abb3"/><rect x="0" y="4" width="2" height="2" fill="#a3abb3"/><rect x="0" y="8" width="2" height="2" fill="#a3abb3"/><rect x="0" y="12" width="2" height="2" fill="#a3abb3"/></svg>
<svg style="left:3px;top:180px" width="2" height="17"><rect x="0" y="0" width="2" height="2" fill="#a3abb3"/><rect x="0" y="4" width="2" height="2" fill="#a3abb3"/><rect x="0" y="8" width="2" height="2" fill="#a3abb3"/><rect x="0" y="12" width="2" height="2" fill="#a3abb3"/></svg>
<svg style="left:3px;top:204px" width="2" height="17"><rect x="0" y="0" width="2" height="2" fill="#a3abb3"/><rect x="0" y="4" width="2" height="2" fill="#a3abb3"/><rect x="0" y="8" width="2" height="2" fill="#a3abb3"/><rect x="0" y="12" width="2" height="2" fill="#a3abb3"/></svg>
<svg style="left:3px;top:227px" width="2" height="17"><rect x="0" y="0" width="2" height="2" fill="#a3abb3"/><rect x="0" y="4" width="2" height="2" fill="#a3abb3"/><rect x="0" y="8" width="2" height="2" fill="#a3abb3"/><rect x="0" y="12" width="2" height="2" fill="#a3abb3"/></svg>
<svg style="left:3px;top:250px" width="2" height="17"><rect x="0" y="0" width="2" height="2" fill="#a3abb3"/><rect x="0" y="4" width="2" height="2" fill="#a3abb3"/><rect x="0" y="8" width="2" height="2" fill="#a3abb3"/><rect x="0" y="12" width="2" height="2" fill="#a3abb3"/></svg>
<svg style="left:3px;top:273px" width="2" height="17"><rect x="0" y="0" width="2" height="2" fill="#a3abb3"/><rect x="0" y="4" width="2" height="2" fill="#a3abb3"/><rect x="0" y="8" width="2" height="2" fill="#a3abb3"/><rect x="0" y="12" width="2" height="2" fill="#a3abb3"/></svg>
<svg style="left:3px;top:295px" width="2" height="17"><rect x="0" y="0" width="2" height="2" fill="#a3abb3"/><rect x="0" y="4" width="2" height="2" fill="#a3abb3"/><rect x="0" y="8" width="2" height="2" fill="#a3abb3"/><rect x="0" y="12" width="2" height="2" fill="#a3abb3"/></svg>
<svg style="left:3px;top:318px" width="2" height="17"><rect x="0" y="0" width="2" height="2" fill="#a3abb3"/><rect x="0" y="4" width="2" height="2" fill="#a3abb3"/><rect x="0" y="8" width="2" height="2" fill="#a3abb3"/><rect x="0" y="12" width="2" height="2" fill="#a3abb3"/></svg>
<svg style="left:3px;top:341px" width="2" height="17"><rect x="0" y="0" width="2" height="2" fill="#a3abb3"/><rect x="0" y="4" width="2" height="2" fill="#a3abb3"/><rect x="0" y="8" width="2" height="2" fill="#a3abb3"/><rect x="0" y="12" width="2" height="2" fill="#a3abb3"/></svg>
<svg style="left:3px;top:364px" width="2" height="17"><rect x="0" y="0" width="2" height="2" fill="#a3abb3"/><rect x="0" y="4" width="2" height="2" fill="#a3abb3"/><rect x="0" y="8" width="2" height="2" fill="#a3abb3"/><rect x="0" y="12" width="2" height="2" fill="#a3abb3"/></svg>
<div class="a" style="left:34px;top:126px;width:21px;height:124px;background:linear-gradient(90deg,#f6e9b8,#f3dc93);border:1px solid #d7c68c"></div>
<div class="t" style="left:36px;top:128px;font-size:14px;font-weight:bold;color:#10105a;font-family:Liberation Sans;letter-spacing:-1px">f<span style="font-size:11px;font-weight:normal;letter-spacing:0">(x)</span></div>
<div class="t" style="left:38px;top:152px;font-size:11px;color:#5a5a5a;transform:rotate(90deg);transform-origin:0 0;left:52px">Переменные</div>
<div class="a" style="left:57px;top:124px;width:1px;height:886px;background:#c9ced4"></div>
<div class="a" style="left:58px;top:123px;width:1862px;height:23px;background:linear-gradient(#e3e7ec,#f2f4f6 60%,#fcfcfd)"></div>
<svg style="left:0;top:0" width="1920" height="160"><path d="M60 146 L80 125 L258 125 L244 146 Z" fill="url(#tg1)" stroke="#6e7a86" stroke-width="1"/><defs><linearGradient id="tg1" x1="0" y1="0" x2="0" y2="1"><stop offset="0" stop-color="#eef2f8"/><stop offset="1" stop-color="#c6d5ea"/></linearGradient><linearGradient id="tg2" x1="0" y1="0" x2="0" y2="1"><stop offset="0" stop-color="#fdf6da"/><stop offset="1" stop-color="#f8da84"/></linearGradient></defs><path d="M244 147 L264 125 L364 125 L366 128 L366 147 Z" fill="url(#tg2)" stroke="#a49a72" stroke-width="1"/><path d="M1904 132 h9 l-4.5 5 z" fill="#000"/></svg>
<div class="t" style="left:117px;top:130px;font-size:11px;color:#222">10.00.00.000 Мотопомпа</div>
<svg style="left:84px;top:126px" width="17" height="17" viewBox="0 0 17 17"><path d="M2 3 L5 1 H10 L14 4 V15 H2 Z" fill="#fff" stroke="#000" stroke-width="1.3"/><circle cx="8" cy="9.5" r="3.5" fill="none" stroke="#000" stroke-width="1.2"/><path d="M7 10.5 L10 7.5" stroke="#000"/><path d="M13 12 L16 15" stroke="#000" stroke-width="1.5"/></svg>
<svg style="left:268px;top:126px" width="17" height="17" viewBox="0 0 17 17"><path d="M1 5 L5 1 H12 L16 5 V13 L12 16 H1 Z" fill="#c8c8c8" stroke="#000" stroke-width="1.2"/><path d="M1 5 H12 L16 1 M12 5 V16" fill="none" stroke="#000"/><circle cx="6.5" cy="10.5" r="3.3" fill="#ddd" stroke="#000" stroke-width="1.2"/></svg>
<div class="t" style="left:295px;top:129px;font-size:12px;font-weight:bold;color:#111">Улитка</div>
<div class="t" style="left:347px;top:128px;font-size:13px;color:#111">✕</div>
<div class="a" style="left:57px;top:145px;width:1863px;height:4px;background:linear-gradient(#9b9679,#f4efd2 40%,#7d7a66)"></div>
<div class="a" style="left:57px;top:148px;width:4px;height:857px;background:#f1e7a8"></div>
<div class="a" style="left:57px;top:1001px;width:1863px;height:4px;background:#f3ea9f"></div>
<div class="a" style="left:1915px;top:148px;width:5px;height:857px;background:#f1e9a9"></div>
<div class="a" style="left:61px;top:148px;width:251px;height:853px;background:#f0f1f3"></div>
<div class="a" style="left:61px;top:148px;width:245px;height:19px;background:#b5c9e2"></div>
<div class="t" style="left:64px;top:152px;font-size:11px;color:#1a1a1a">Дерево модели</div>
<div class="a" style="left:61px;top:167px;width:245px;height:35px;background:linear-gradient(#fdfdfd,#eef0f3)"></div>
<div class="a" style="left:306px;top:148px;width:6px;height:853px;background:linear-gradient(90deg,#f5f6f7,#dfe2e6)"></div>
<div class="a" style="left:64px;top:203px;width:243px;height:777px;background:#fff;border:1px solid #9ca3aa;outline:1px solid #e0e3e7"></div>
<div class="a" style="left:312px;top:149px;width:1603px;height:852px;background:#fff;border-left:1px solid #6d6d6d"></div>
<div class="a" style="left:62px;top:983px;width:70px;height:17px;background:#fff;border:1px solid #b8bec5;border-top:none;border-radius:0 0 2px 2px"></div>
<div class="t" style="left:67px;top:986px;font-size:11px;color:#222">Построение</div>
<div class="t" style="left:140px;top:986px;font-size:11px;color:#333">Исполнения</div>
<div class="t" style="left:213px;top:986px;font-size:11px;color:#333">Зоны</div>
<svg style="left:60px;top:1009px" width="2" height="66"><rect x="0" y="0" width="2" height="2" fill="#a3abb3"/><rect x="0" y="4" width="2" height="2" fill="#a3abb3"/><rect x="0" y="8" width="2" height="2" fill="#a3abb3"/><rect x="0" y="12" width="2" height="2" fill="#a3abb3"/><rect x="0" y="16" width="2" height="2" fill="#a3abb3"/><rect x="0" y="20" width="2" height="2" fill="#a3abb3"/><rect x="0" y="24" width="2" height="2" fill="#a3abb3"/><rect x="0" y="28" width="2" height="2" fill="#a3abb3"/><rect x="0" y="32" width="2" height="2" fill="#a3abb3"/><rect x="0" y="36" width="2" height="2" fill="#a3abb3"/><rect x="0" y="40" width="2" height="2" fill="#a3abb3"/><rect x="0" y="44" width="2" height="2" fill="#a3abb3"/><rect x="0" y="48" width="2" height="2" fill="#a3abb3"/><rect x="0" y="52" width="2" height="2" fill="#a3abb3"/><rect x="0" y="56" width="2" height="2" fill="#a3abb3"/><rect x="0" y="60" width="2" height="2" fill="#a3abb3"/></svg>
<div class="a" style="left:63px;top:1012px;width:1851px;height:35px;background:linear-gradient(#fdfdfd,#f6f7f8);border:1px solid #6f747a;border-top-color:#8a9096"></div>
<div class="a" style="left:0;top:1077px;width:1920px;height:1px;background:#b9c0c6"></div><div class="a" style="left:0;top:1078px;width:1920px;height:1px;background:#2f3b47"></div><div class="a" style="left:0;top:1079px;width:1920px;height:1px;background:#d9dde1"></div>
<svg style="left:10px;top:132px" width="21" height="22" viewBox="0 0 21 22"><path d="M1 6 L7 1 H20 V14 L14 20 H1 Z" fill="#1440c8"/><path d="M1 6 L7 1 H20 L14 6 Z" fill="#25e6fa"/><rect x="1" y="6" width="13" height="14" fill="#5a8ff0"/></svg>
<svg style="left:14px;top:155px" width="14" height="21" viewBox="0 0 14 21"><path d="M3 2 Q8 0 9 4 Q10 8 4 10 Q1 12 3 15 Q6 18 12 20" fill="none" stroke="#000" stroke-width="1.6"/></svg>
<svg style="left:10px;top:179px" width="21" height="21" viewBox="0 0 21 21"><path d="M1 11 L10 2 Q12 4 14 4 L20 10 L11 19 Q9 17 7 17 Z" fill="#4aa8ef" stroke="#0b2a8a" stroke-width="1.3"/><path d="M6 8 Q10 12 14 8" fill="none" stroke="#b8ecff" stroke-width="2"/></svg>
<svg style="left:11px;top:203px" width="19" height="19" viewBox="0 0 19 19"><circle cx="4.5" cy="4.5" r="3.3" fill="#3a40c8"/><circle cx="14.5" cy="4.5" r="3.3" fill="#3a40c8"/><circle cx="4.5" cy="14.5" r="3.3" fill="#3a40c8"/><circle cx="14.5" cy="14.5" r="3.3" fill="#3a40c8"/></svg>
<svg style="left:10px;top:225px" width="21" height="21" viewBox="0 0 21 21"><path d="M2 10 L11 17 L19 8 L13 2 L8 9 Z" fill="#27c8f0" stroke="#0a3a8a"/><path d="M1 1 L20 20" stroke="#000" stroke-dasharray="2 1.5"/></svg>
<svg style="left:10px;top:248px" width="21" height="21" viewBox="0 0 21 21"><path d="M1 20 L10 3 L20 20" fill="none" stroke="#000" stroke-width="1.6"/><circle cx="10" cy="4" r="2.5" fill="#fff" stroke="#000"/></svg>
<svg style="left:10px;top:271px" width="21" height="21" viewBox="0 0 21 21"><path d="M1 2 H20 L13 10 V14 H8 V10 Z" fill="#27c8f0" stroke="#0a5a9a"/><circle cx="10.5" cy="18" r="2" fill="none" stroke="#c02020" stroke-width="1.3"/></svg>
<svg style="left:12px;top:293px" width="17" height="20" viewBox="0 0 17 20"><path d="M1 1 H11 L16 6 V19 H1 Z" fill="#fff" stroke="#000" stroke-width="1.2"/><path d="M3 7 H14 M3 10.5 H14 M3 14 H14 M6 4 V18 M10 6 V18" stroke="#000" stroke-width="0.9"/></svg>
<svg style="left:12px;top:316px" width="17" height="20" viewBox="0 0 17 20"><rect x="2" y="1" width="14" height="18" fill="#4a7ae0" stroke="#0a2a8a"/><rect x="4" y="3" width="10" height="6" fill="#e8f0ff"/><path d="M1 3v14" stroke="#000" stroke-dasharray="1 1"/></svg>
<svg style="left:10px;top:339px" width="21" height="21" viewBox="0 0 21 21"><rect x="3" y="1" width="6" height="6" fill="#fff" stroke="#000"/><path d="M6 7 V14 M12 8 L15 16 L20 4" fill="none" stroke="#000" stroke-width="1.2"/><path d="M1 15 H20 L17 20 H1 Z" fill="#1a5ad0"/></svg>
<div class="a" style="left:9px;top:362px;width:24px;height:23px;background:linear-gradient(#fde9a6,#f9d46e 60%,#fbe08d);border:1px solid #d9b95c;border-radius:3px"></div>
<svg style="left:11px;top:364px" width="20" height="19" viewBox="0 0 20 19"><path d="M2 2 L8 1 V10 L18 10 L18 17 L5 17 Q2 17 2 14 Z" fill="#5ab0f5" stroke="#0a3a8a" stroke-width="1.4"/></svg>
<div class="a" style="left:8px;top:388px;width:19px;height:1px;background:#999"></div>
<svg style="left:5px;top:396px" width="25" height="24" viewBox="0 0 25 24"><path d="M8 3 H22 V16 H16 V23 H3 V10 H8 Z" fill="#cfd1d3" stroke="#a0a3a6"/><rect x="6" y="12" width="4" height="5" fill="#fff"/><rect x="15" y="6" width="4" height="8" fill="#fff"/></svg>
<svg style="left:5px;top:426px" width="25" height="26" viewBox="0 0 25 26"><path d="M7 3 Q12 0 18 3 L23 22 Q16 26 11 24 L11 14 L14 14 L14 24 Q8 26 2 22 Z" fill="#27c0f0" stroke="#0a4a9a"/><rect x="11" y="3" width="3" height="12" fill="#1a3ab8"/></svg>
<svg style="left:5px;top:456px" width="25" height="25" viewBox="0 0 25 25"><path d="M7 3 Q12 0 18 3 L23 18 L13 24 L2 18 Z" fill="#27c0f0" stroke="#0a4a9a"/><path d="M12 5 L8 20 M12 5 L18 20" stroke="#0a4a9a"/></svg>
<div class="a" style="left:8px;top:486px;width:19px;height:1px;background:#999"></div>
<svg style="left:5px;top:494px" width="25" height="23" viewBox="0 0 25 23"><path d="M2 14 L8 11 H14 V3 L20 1 V14 L14 19 H2 Z" fill="#cfd1d3" stroke="#a9acaf"/><path d="M2 14 H14 V19 M14 14 L20 11" fill="none" stroke="#a9acaf"/></svg>
<svg style="left:5px;top:524px" width="25" height="23" viewBox="0 0 25 23"><path d="M2 14 L8 11 H14 V3 L20 1 V14 L14 19 H2 Z" fill="#cfd1d3" stroke="#a9acaf"/><path d="M2 14 H14 V19 M14 14 L20 11" fill="none" stroke="#a9acaf"/></svg>
<svg style="left:5px;top:553px" width="25" height="23" viewBox="0 0 25 23"><path d="M2 14 L8 11 H14 V3 L20 1 V14 L14 19 H2 Z" fill="#cfd1d3" stroke="#a9acaf"/><path d="M2 14 H14 V19 M14 14 L20 11" fill="none" stroke="#a9acaf"/></svg>
<svg style="left:5px;top:583px" width="25" height="23" viewBox="0 0 25 23"><path d="M2 14 L8 11 H14 V3 L20 1 V14 L14 19 H2 Z" fill="#cfd1d3" stroke="#a9acaf"/><path d="M2 14 H14 V19 M14 14 L20 11" fill="none" stroke="#a9acaf"/></svg>
<div class="a" style="left:8px;top:614px;width:19px;height:1px;background:#999"></div>
<svg style="left:5px;top:622px" width="25" height="24" viewBox="0 0 25 24"><path d="M5 2 H22 V18 L18 22 H2 V18 H5 Z" fill="#cfd1d3" stroke="#a9acaf"/><circle cx="13" cy="9" r="4" fill="#fff" stroke="#a9acaf"/></svg>
<svg style="left:5px;top:652px" width="25" height="24" viewBox="0 0 25 24"><path d="M5 2 H22 V18 L18 22 H2 V18 H5 Z" fill="#cfd1d3" stroke="#a9acaf"/><rect x="9" y="5" width="9" height="9" fill="#fff" stroke="#a9acaf"/></svg>
<div class="a" style="left:8px;top:683px;width:19px;height:1px;background:#999"></div>
<svg style="left:5px;top:690px" width="25" height="24" viewBox="0 0 25 24"><path d="M3 7 L8 3 V12 H22 V17 L17 22 H6 V17 H3 Z" fill="#cfd1d3" stroke="#a9acaf"/></svg>
<div class="a" style="left:8px;top:720px;width:19px;height:1px;background:#999"></div>
<svg style="left:5px;top:728px" width="25" height="25" viewBox="0 0 25 25"><path d="M2 8 L10 2 L22 6 V22 H16 V14 Q13 10 9 14 V22 H2 Z" fill="#d4d6d8" stroke="#a9acaf"/></svg>
<div class="a" style="left:8px;top:758px;width:19px;height:1px;background:#999"></div>
<svg style="left:5px;top:766px" width="25" height="25" viewBox="0 0 25 25"><path d="M2 18 H22 L20 22 H2 Z M8 18 V8 L12 5 V18" fill="#cfd1d3" stroke="#a9acaf"/><path d="M14 4 Q20 3 21 10 M19 8 L21 11 L23 8" fill="none" stroke="#888"/></svg>
<svg style="left:5px;top:796px" width="25" height="25" viewBox="0 0 25 25"><path d="M2 16 H22 L18 22 H2 Z M8 16 V8 L12 5 V16" fill="#cfd1d3" stroke="#a9acaf"/><path d="M20 12 Q20 4 14 3 M16 1 L13 3 L16 5" fill="none" stroke="#888"/></svg>
<div class="a" style="left:8px;top:826px;width:19px;height:1px;background:#999"></div>
<svg style="left:5px;top:834px" width="25" height="24" viewBox="0 0 25 24"><rect x="1" y="10" width="11" height="12" fill="#eee" stroke="#a0a3a6"/><path d="M3 14 L5 16 L8 12 M3 19 L5 21 L8 17" fill="none" stroke="#a0a3a6"/><circle cx="11" cy="7" r="4.5" fill="none" stroke="#a0a3a6"/><path d="M12 12 H23 M20 9 L23 12 L20 15" fill="none" stroke="#a0a3a6"/></svg>
<svg style="left:5px;top:865px" width="25" height="24" viewBox="0 0 25 24"><circle cx="8" cy="6" r="4.5" fill="none" stroke="#a9acaf"/><path d="M11 9 H21 M18 6 L21 9 L18 12" fill="none" stroke="#a9acaf"/><path d="M5 15 H23 L20 21 H2 Z M9 15 L6 21 M15 15 L12 21" fill="#ddd" stroke="#a9acaf"/></svg>
<div class="a" style="left:8px;top:895px;width:19px;height:1px;background:#999"></div>
<svg style="left:5px;top:903px" width="25" height="20" viewBox="0 0 25 20"><path d="M2 2 H23 V7 H17 V18 H8 V7 H2 Z" fill="#cfd1d3" stroke="#a9acaf"/></svg>
<svg style="left:5px;top:933px" width="25" height="21" viewBox="0 0 25 21"><path d="M2 2 H8 V7 Q8 14 12.5 14 Q17 14 17 7 V2 H23 V7 H21 Q21 20 12.5 20 Q4 20 4 7 H2 Z" fill="#cfd1d3" stroke="#a9acaf"/></svg>
<svg style="left:5px;top:962px" width="25" height="19" viewBox="0 0 25 19"><path d="M2 12 H7 L14 2 H17 V12 H23 V17 H2 Z" fill="#cfd1d3" stroke="#a9acaf"/></svg>
<svg style="left:5px;top:992px" width="25" height="17" viewBox="0 0 25 17"><path d="M2 11 L12 2 L23 11 V15 H2 Z" fill="#cfd1d3" stroke="#a9acaf"/><path d="M6 11 L12 6 L19 11 Z" fill="#eee"/></svg>
<svg style="left:69px;top:171px" width="16" height="23" viewBox="0 0 16 23"><g fill="#fff" stroke="#000" stroke-width="1.2"><rect x="1" y="1" width="3" height="3"/><rect x="4.5" y="6" width="3" height="3"/><rect x="10" y="10" width="3" height="3"/><rect x="10" y="16" width="3" height="3"/><rect x="4.5" y="19" width="3" height="3"/></g><path d="M2.5 4 V20.5 H4.5 M2.5 7.5 H4.5 M6 9 V17.5 H10 M6 11.5 H10" fill="none" stroke="#000" stroke-width="1.2"/></svg>
<svg style="left:99px;top:173px" width="21" height="21" viewBox="0 0 21 21"><path d="M1 1 V20 M1 1 H5 M1 10 H5 M1 19 H5" fill="none" stroke="#aaa" stroke-width="1.2"/><path d="M7 3 L9 5 L12 2 M7 10 L9 12 L12 9 M7 16 L9 18 L12 15" fill="none" stroke="#aaa"/><path d="M14 5 H20 M14 12 H20 M14 18 H20" stroke="#aaa" stroke-width="1.6"/></svg>
<svg style="left:124px;top:182px" width="7" height="4" viewBox="0 0 7 4"><path d="M0 0h7l-3.5 4z" fill="#9a9a9a"/></svg>
<div class="a" style="left:138px;top:174px;width:1px;height:18px;background:#aaa"></div>
<svg style="left:152px;top:172px" width="14" height="23" viewBox="0 0 14 23"><rect x="1" y="1" width="12" height="20" fill="#fff" stroke="#0b1a6a" stroke-width="1.3"/><rect x="1.5" y="12" width="11" height="8" fill="#dce4ff"/><path d="M1 12 H13" stroke="#0b1a6a"/><path d="M4 4 V9 H10 M5.5 6 H10" fill="none" stroke="#000"/><path d="M1 21 L4 18" stroke="#0b1a6a"/></svg>
<svg style="left:176px;top:172px" width="24" height="22" viewBox="0 0 24 22"><rect x="1" y="1" width="12" height="18" fill="#f2f2f2" stroke="#aaa"/><rect x="12" y="10" width="11" height="11" fill="#e6e6e6" stroke="#aaa"/><path d="M3 5 H8 M4 8 H10 M4 12 H9 M14 14 H20" stroke="#999" stroke-width="1.5"/><path d="M17 1 Q21 2 20 8 M18.5 6 L20 8.5 L22 6" fill="none" stroke="#999"/></svg>
<svg style="left:276px;top:151px" width="9" height="12" viewBox="0 0 9 12"><path d="M2 1 H7 M3 1 V6 H6 V1 M1 6 H8 M4.5 6 V11" fill="none" stroke="#000" stroke-width="1.3"/></svg>
<svg style="left:291px;top:151px" width="11" height="11" viewBox="0 0 11 11"><path d="M1.5 1.5 L9.5 9.5 M9.5 1.5 L1.5 9.5" stroke="#000" stroke-width="1.8"/></svg>
<div class="a" style="left:61px;top:199px;width:245px;height:1px;background:#c9cdd2"></div>
<div class="a" style="left:65px;top:204px;width:220px;height:757px;overflow:hidden">
<svg style="left:6px;top:3px" width="17" height="17" viewBox="0 0 17 17"><path d="M1 5 L5 1 H12 L16 5 V13 L12 16 H1 Z" fill="#f5cf8a" stroke="#000" stroke-width="1.2"/><path d="M1 5 H12 L16 1" fill="none" stroke="#000"/><path d="M12 5 V16" stroke="#000"/><circle cx="6.5" cy="10.5" r="3.6" fill="#f5cf8a" stroke="#000" stroke-width="1.2"/><path d="M6.5 10.5 L8.5 9" stroke="#000"/></svg>
<div class="t" style="left:29px;top:5px;font-size:11.5px;color:#000;-webkit-text-stroke:0.15px #000">Улитка (Тел-1)</div>
<div class="a" style="left:14px;top:20px;width:1px;height:740px;background:repeating-linear-gradient(#808080 0 1px,transparent 1px 2px)"></div>
<div class="a" style="left:15px;top:31px;width:12px;height:1px;background:repeating-linear-gradient(90deg,#808080 0 1px,transparent 1px 2px)"></div>
<div class="a" style="left:10px;top:26px;width:9px;height:9px;background:#fff;border:1px solid #a0a0a0;font-size:9px;line-height:7px;text-align:center;color:#333">+</div>
<svg style="left:29px;top:23px" width="17" height="17" viewBox="0 0 17 17"><path d="M7 1 V11 H16 M7 11 L1 16" fill="none" stroke="#444" stroke-width="1"/></svg>
<div class="t" style="left:52px;top:26px;font-size:11.5px;color:#000;-webkit-text-stroke:0.15px #000">(т) Начало координат</div>
<div class="a" style="left:15px;top:51px;width:12px;height:1px;background:repeating-linear-gradient(90deg,#808080 0 1px,transparent 1px 2px)"></div>
<svg style="left:29px;top:43px" width="17" height="17" viewBox="0 0 17 17"><path d="M2 2 H8 V8 H15 V15 H2 Z" fill="#c8c8c8" stroke="#111" stroke-width="1.1"/><circle cx="2" cy="2" r="1.3" fill="#fff" stroke="#111" stroke-width="0.9"/><circle cx="8" cy="2" r="1.3" fill="#fff" stroke="#111" stroke-width="0.9"/><circle cx="8" cy="8" r="1.3" fill="#fff" stroke="#111" stroke-width="0.9"/><circle cx="15" cy="8" r="1.3" fill="#fff" stroke="#111" stroke-width="0.9"/><circle cx="15" cy="15" r="1.3" fill="#fff" stroke="#111" stroke-width="0.9"/><circle cx="2" cy="15" r="1.3" fill="#fff" stroke="#111" stroke-width="0.9"/></svg>
<div class="t" style="left:52px;top:46px;font-size:11.5px;color:#000;-webkit-text-stroke:0.15px #000">(+)</div>
<div class="t" style="left:71px;top:46px;font-size:11.5px;color:#000;-webkit-text-stroke:0.15px #000">Эскиз:1</div>
<div class="a" style="left:15px;top:71px;width:12px;height:1px;background:repeating-linear-gradient(90deg,#808080 0 1px,transparent 1px 2px)"></div>
<svg style="left:29px;top:63px" width="17" height="17" viewBox="0 0 17 17"><path d="M1 5 L5 1 H16 V12 L12 16 H1 Z" fill="#0b1ab8"/><path d="M1 5 L5 1 H16 L12 5 Z" fill="#25e6fa"/><rect x="1" y="5" width="11" height="11" fill="#5a8ff0"/><path d="M1 5 L5 1 H16 V12 L12 16 H1 Z M1 5 H12 V16 M12 5 L16 1" fill="none" stroke="#000b6a" stroke-width="0.8"/></svg>
<div class="t" style="left:55px;top:66px;font-size:11.5px;color:#000;-webkit-text-stroke:0.15px #000">Операция выдавливания:1</div>
<div class="a" style="left:15px;top:91px;width:12px;height:1px;background:repeating-linear-gradient(90deg,#808080 0 1px,transparent 1px 2px)"></div>
<svg style="left:29px;top:83px" width="17" height="17" viewBox="0 0 17 17"><path d="M1.5 3 L13 1.5 V13.5 L1.5 15 Z" fill="#7a7a7a" stroke="#2a2a2a" stroke-width="1"/><path d="M7 0 V17 M1 9 L15 8" stroke="#2a2a2a" stroke-width="1"/></svg>
<div class="t" style="left:55px;top:86px;font-size:11.5px;color:#000;-webkit-text-stroke:0.15px #000">Смещенная плоскость:1</div>
<div class="a" style="left:15px;top:111px;width:12px;height:1px;background:repeating-linear-gradient(90deg,#808080 0 1px,transparent 1px 2px)"></div>
<svg style="left:29px;top:103px" width="17" height="17" viewBox="0 0 17 17"><path d="M2 2 H8 V8 H15 V15 H2 Z" fill="#c8c8c8" stroke="#111" stroke-width="1.1"/><circle cx="2" cy="2" r="1.3" fill="#fff" stroke="#111" stroke-width="0.9"/><circle cx="8" cy="2" r="1.3" fill="#fff" stroke="#111" stroke-width="0.9"/><circle cx="8" cy="8" r="1.3" fill="#fff" stroke="#111" stroke-width="0.9"/><circle cx="15" cy="8" r="1.3" fill="#fff" stroke="#111" stroke-width="0.9"/><circle cx="15" cy="15" r="1.3" fill="#fff" stroke="#111" stroke-width="0.9"/><circle cx="2" cy="15" r="1.3" fill="#fff" stroke="#111" stroke-width="0.9"/></svg>
<div class="t" style="left:55px;top:106px;font-size:11.5px;color:#000;-webkit-text-stroke:0.15px #000">Эскиз:2</div>
<div class="a" style="left:15px;top:131px;width:12px;height:1px;background:repeating-linear-gradient(90deg,#808080 0 1px,transparent 1px 2px)"></div>
<svg style="left:29px;top:123px" width="17" height="17" viewBox="0 0 17 17"><g fill="none" stroke="#9a9a9a" stroke-width="1"><ellipse cx="8.5" cy="3.5" rx="6" ry="2"/><ellipse cx="8.5" cy="8" rx="6" ry="2"/><ellipse cx="8.5" cy="12.5" rx="6" ry="2"/></g><path d="M8 1 V16" stroke="#bbb" stroke-width="0.7"/></svg>
<div class="t" style="left:55px;top:126px;font-size:11.5px;color:#000;-webkit-text-stroke:0.15px #000">Спираль цилиндрическая:1</div>
<div class="a" style="left:15px;top:151px;width:12px;height:1px;background:repeating-linear-gradient(90deg,#808080 0 1px,transparent 1px 2px)"></div>
<svg style="left:29px;top:143px" width="17" height="17" viewBox="0 0 17 17"><path d="M2 2 H8 V8 H15 V15 H2 Z" fill="#c8c8c8" stroke="#111" stroke-width="1.1"/><circle cx="2" cy="2" r="1.3" fill="#fff" stroke="#111" stroke-width="0.9"/><circle cx="8" cy="2" r="1.3" fill="#fff" stroke="#111" stroke-width="0.9"/><circle cx="8" cy="8" r="1.3" fill="#fff" stroke="#111" stroke-width="0.9"/><circle cx="15" cy="8" r="1.3" fill="#fff" stroke="#111" stroke-width="0.9"/><circle cx="15" cy="15" r="1.3" fill="#fff" stroke="#111" stroke-width="0.9"/><circle cx="2" cy="15" r="1.3" fill="#fff" stroke="#111" stroke-width="0.9"/></svg>
<div class="t" style="left:55px;top:146px;font-size:11.5px;color:#000;-webkit-text-stroke:0.15px #000">Эскиз:3</div>
<div class="a" style="left:15px;top:171px;width:12px;height:1px;background:repeating-linear-gradient(90deg,#808080 0 1px,transparent 1px 2px)"></div>
<svg style="left:29px;top:163px" width="17" height="17" viewBox="0 0 17 17"><g fill="none" stroke="#9a9a9a" stroke-width="1"><ellipse cx="8.5" cy="3.5" rx="6" ry="2"/><ellipse cx="8.5" cy="8" rx="6" ry="2"/><ellipse cx="8.5" cy="12.5" rx="6" ry="2"/></g><path d="M8 1 V16" stroke="#bbb" stroke-width="0.7"/></svg>
<div class="t" style="left:55px;top:166px;font-size:11.5px;color:#000;-webkit-text-stroke:0.15px #000">Спираль цилиндрическая:2</div>
<div class="a" style="left:15px;top:191px;width:12px;height:1px;background:repeating-linear-gradient(90deg,#808080 0 1px,transparent 1px 2px)"></div>
<svg style="left:29px;top:183px" width="17" height="17" viewBox="0 0 17 17"><path d="M1.5 3 L13 1.5 V13.5 L1.5 15 Z" fill="#7a7a7a" stroke="#2a2a2a" stroke-width="1"/><path d="M7 0 V17 M1 9 L15 8" stroke="#2a2a2a" stroke-width="1"/></svg>
<div class="t" style="left:55px;top:186px;font-size:11.5px;color:#000;-webkit-text-stroke:0.15px #000">Плоскость под углом:1</div>
<div class="a" style="left:15px;top:211px;width:12px;height:1px;background:repeating-linear-gradient(90deg,#808080 0 1px,transparent 1px 2px)"></div>
<div class="a" style="left:52px;top:202px;width:132px;height:18px;background:#eceded"></div>
<svg style="left:29px;top:203px" width="17" height="17" viewBox="0 0 17 17"><path d="M1.5 3 L13 1.5 V13.5 L1.5 15 Z" fill="#7a7a7a" stroke="#2a2a2a" stroke-width="1"/><path d="M7 0 V17 M1 9 L15 8" stroke="#2a2a2a" stroke-width="1"/></svg>
<div class="t" style="left:55px;top:206px;font-size:11.5px;color:#000;-webkit-text-stroke:0.15px #000">Плоскость под углом:2</div>
<div class="a" style="left:15px;top:231px;width:12px;height:1px;background:repeating-linear-gradient(90deg,#808080 0 1px,transparent 1px 2px)"></div>
<svg style="left:29px;top:223px" width="17" height="17" viewBox="0 0 17 17"><path d="M2 2 H8 V8 H15 V15 H2 Z" fill="#c8c8c8" stroke="#111" stroke-width="1.1"/><circle cx="2" cy="2" r="1.3" fill="#fff" stroke="#111" stroke-width="0.9"/><circle cx="8" cy="2" r="1.3" fill="#fff" stroke="#111" stroke-width="0.9"/><circle cx="8" cy="8" r="1.3" fill="#fff" stroke="#111" stroke-width="0.9"/><circle cx="15" cy="8" r="1.3" fill="#fff" stroke="#111" stroke-width="0.9"/><circle cx="15" cy="15" r="1.3" fill="#fff" stroke="#111" stroke-width="0.9"/><circle cx="2" cy="15" r="1.3" fill="#fff" stroke="#111" stroke-width="0.9"/></svg>
<div class="t" style="left:52px;top:226px;font-size:11.5px;color:#000;-webkit-text-stroke:0.15px #000">(-)</div>
<div class="t" style="left:71px;top:226px;font-size:11.5px;color:#000;-webkit-text-stroke:0.15px #000">Эскиз:7</div>
<div class="a" style="left:15px;top:251px;width:12px;height:1px;background:repeating-linear-gradient(90deg,#808080 0 1px,transparent 1px 2px)"></div>
<svg style="left:29px;top:243px" width="17" height="17" viewBox="0 0 17 17"><path d="M2 2 H8 V8 H15 V15 H2 Z" fill="#c8c8c8" stroke="#111" stroke-width="1.1"/><circle cx="2" cy="2" r="1.3" fill="#fff" stroke="#111" stroke-width="0.9"/><circle cx="8" cy="2" r="1.3" fill="#fff" stroke="#111" stroke-width="0.9"/><circle cx="8" cy="8" r="1.3" fill="#fff" stroke="#111" stroke-width="0.9"/><circle cx="15" cy="8" r="1.3" fill="#fff" stroke="#111" stroke-width="0.9"/><circle cx="15" cy="15" r="1.3" fill="#fff" stroke="#111" stroke-width="0.9"/><circle cx="2" cy="15" r="1.3" fill="#fff" stroke="#111" stroke-width="0.9"/></svg>
<div class="t" style="left:52px;top:246px;font-size:11.5px;color:#000;-webkit-text-stroke:0.15px #000">(-)</div>
<div class="t" style="left:71px;top:246px;font-size:11.5px;color:#000;-webkit-text-stroke:0.15px #000">Эскиз:8</div>
<div class="a" style="left:15px;top:271px;width:12px;height:1px;background:repeating-linear-gradient(90deg,#808080 0 1px,transparent 1px 2px)"></div>
<svg style="left:29px;top:263px" width="17" height="17" viewBox="0 0 17 17"><path d="M2 2 H8 V8 H15 V15 H2 Z" fill="#c8c8c8" stroke="#111" stroke-width="1.1"/><circle cx="2" cy="2" r="1.3" fill="#fff" stroke="#111" stroke-width="0.9"/><circle cx="8" cy="2" r="1.3" fill="#fff" stroke="#111" stroke-width="0.9"/><circle cx="8" cy="8" r="1.3" fill="#fff" stroke="#111" stroke-width="0.9"/><circle cx="15" cy="8" r="1.3" fill="#fff" stroke="#111" stroke-width="0.9"/><circle cx="15" cy="15" r="1.3" fill="#fff" stroke="#111" stroke-width="0.9"/><circle cx="2" cy="15" r="1.3" fill="#fff" stroke="#111" stroke-width="0.9"/></svg>
<div class="t" style="left:52px;top:266px;font-size:11.5px;color:#000;-webkit-text-stroke:0.15px #000">(-)</div>
<div class="t" style="left:71px;top:266px;font-size:11.5px;color:#000;-webkit-text-stroke:0.15px #000">Эскиз:9</div>
<div class="a" style="left:15px;top:291px;width:12px;height:1px;background:repeating-linear-gradient(90deg,#808080 0 1px,transparent 1px 2px)"></div>
<svg style="left:29px;top:283px" width="17" height="17" viewBox="0 0 17 17"><path d="M2 2 H8 V8 H15 V15 H2 Z" fill="#c8c8c8" stroke="#111" stroke-width="1.1"/><circle cx="2" cy="2" r="1.3" fill="#fff" stroke="#111" stroke-width="0.9"/><circle cx="8" cy="2" r="1.3" fill="#fff" stroke="#111" stroke-width="0.9"/><circle cx="8" cy="8" r="1.3" fill="#fff" stroke="#111" stroke-width="0.9"/><circle cx="15" cy="8" r="1.3" fill="#fff" stroke="#111" stroke-width="0.9"/><circle cx="15" cy="15" r="1.3" fill="#fff" stroke="#111" stroke-width="0.9"/><circle cx="2" cy="15" r="1.3" fill="#fff" stroke="#111" stroke-width="0.9"/></svg>
<div class="t" style="left:52px;top:286px;font-size:11.5px;color:#000;-webkit-text-stroke:0.15px #000">(-)</div>
<div class="t" style="left:71px;top:286px;font-size:11.5px;color:#000;-webkit-text-stroke:0.15px #000">Эскиз:10</div>
<div class="a" style="left:15px;top:311px;width:12px;height:1px;background:repeating-linear-gradient(90deg,#808080 0 1px,transparent 1px 2px)"></div>
<svg style="left:29px;top:303px" width="17" height="17" viewBox="0 0 17 17"><path d="M2 2 H8 V8 H15 V15 H2 Z" fill="#c8c8c8" stroke="#111" stroke-width="1.1"/><circle cx="2" cy="2" r="1.3" fill="#fff" stroke="#111" stroke-width="0.9"/><circle cx="8" cy="2" r="1.3" fill="#fff" stroke="#111" stroke-width="0.9"/><circle cx="8" cy="8" r="1.3" fill="#fff" stroke="#111" stroke-width="0.9"/><circle cx="15" cy="8" r="1.3" fill="#fff" stroke="#111" stroke-width="0.9"/><circle cx="15" cy="15" r="1.3" fill="#fff" stroke="#111" stroke-width="0.9"/><circle cx="2" cy="15" r="1.3" fill="#fff" stroke="#111" stroke-width="0.9"/></svg>
<div class="t" style="left:52px;top:306px;font-size:11.5px;color:#000;-webkit-text-stroke:0.15px #000">(-)</div>
<div class="t" style="left:71px;top:306px;font-size:11.5px;color:#000;-webkit-text-stroke:0.15px #000">Эскиз:11</div>
<div class="a" style="left:15px;top:331px;width:12px;height:1px;background:repeating-linear-gradient(90deg,#808080 0 1px,transparent 1px 2px)"></div>
<svg style="left:29px;top:323px" width="17" height="17" viewBox="0 0 17 17"><path d="M2 2 H8 V8 H15 V15 H2 Z" fill="#c8c8c8" stroke="#111" stroke-width="1.1"/><circle cx="2" cy="2" r="1.3" fill="#fff" stroke="#111" stroke-width="0.9"/><circle cx="8" cy="2" r="1.3" fill="#fff" stroke="#111" stroke-width="0.9"/><circle cx="8" cy="8" r="1.3" fill="#fff" stroke="#111" stroke-width="0.9"/><circle cx="15" cy="8" r="1.3" fill="#fff" stroke="#111" stroke-width="0.9"/><circle cx="15" cy="15" r="1.3" fill="#fff" stroke="#111" stroke-width="0.9"/><circle cx="2" cy="15" r="1.3" fill="#fff" stroke="#111" stroke-width="0.9"/></svg>
<div class="t" style="left:52px;top:326px;font-size:11.5px;color:#000;-webkit-text-stroke:0.15px #000">(-)</div>
<div class="t" style="left:71px;top:326px;font-size:11.5px;color:#000;-webkit-text-stroke:0.15px #000">Эскиз:12</div>
<div class="a" style="left:15px;top:351px;width:12px;height:1px;background:repeating-linear-gradient(90deg,#808080 0 1px,transparent 1px 2px)"></div>
<svg style="left:29px;top:343px" width="17" height="17" viewBox="0 0 17 17"><path d="M2 2 H8 V8 H15 V15 H2 Z" fill="#c8c8c8" stroke="#111" stroke-width="1.1"/><circle cx="2" cy="2" r="1.3" fill="#fff" stroke="#111" stroke-width="0.9"/><circle cx="8" cy="2" r="1.3" fill="#fff" stroke="#111" stroke-width="0.9"/><circle cx="8" cy="8" r="1.3" fill="#fff" stroke="#111" stroke-width="0.9"/><circle cx="15" cy="8" r="1.3" fill="#fff" stroke="#111" stroke-width="0.9"/><circle cx="15" cy="15" r="1.3" fill="#fff" stroke="#111" stroke-width="0.9"/><circle cx="2" cy="15" r="1.3" fill="#fff" stroke="#111" stroke-width="0.9"/></svg>
<div class="t" style="left:52px;top:346px;font-size:11.5px;color:#000;-webkit-text-stroke:0.15px #000">(-)</div>
<div class="t" style="left:71px;top:346px;font-size:11.5px;color:#000;-webkit-text-stroke:0.15px #000">Эскиз:13</div>
<div class="a" style="left:15px;top:371px;width:12px;height:1px;background:repeating-linear-gradient(90deg,#808080 0 1px,transparent 1px 2px)"></div>
<svg style="left:29px;top:363px" width="17" height="17" viewBox="0 0 17 17"><path d="M2 2 H8 V8 H15 V15 H2 Z" fill="#c8c8c8" stroke="#111" stroke-width="1.1"/><circle cx="2" cy="2" r="1.3" fill="#fff" stroke="#111" stroke-width="0.9"/><circle cx="8" cy="2" r="1.3" fill="#fff" stroke="#111" stroke-width="0.9"/><circle cx="8" cy="8" r="1.3" fill="#fff" stroke="#111" stroke-width="0.9"/><circle cx="15" cy="8" r="1.3" fill="#fff" stroke="#111" stroke-width="0.9"/><circle cx="15" cy="15" r="1.3" fill="#fff" stroke="#111" stroke-width="0.9"/><circle cx="2" cy="15" r="1.3" fill="#fff" stroke="#111" stroke-width="0.9"/></svg>
<div class="t" style="left:52px;top:366px;font-size:11.5px;color:#000;-webkit-text-stroke:0.15px #000">(-)</div>
<div class="t" style="left:71px;top:366px;font-size:11.5px;color:#000;-webkit-text-stroke:0.15px #000">Эскиз:14</div>
<div class="a" style="left:15px;top:391px;width:12px;height:1px;background:repeating-linear-gradient(90deg,#808080 0 1px,transparent 1px 2px)"></div>
<svg style="left:29px;top:383px" width="17" height="17" viewBox="0 0 17 17"><path d="M2 2 H8 V8 H15 V15 H2 Z" fill="#c8c8c8" stroke="#111" stroke-width="1.1"/><circle cx="2" cy="2" r="1.3" fill="#fff" stroke="#111" stroke-width="0.9"/><circle cx="8" cy="2" r="1.3" fill="#fff" stroke="#111" stroke-width="0.9"/><circle cx="8" cy="8" r="1.3" fill="#fff" stroke="#111" stroke-width="0.9"/><circle cx="15" cy="8" r="1.3" fill="#fff" stroke="#111" stroke-width="0.9"/><circle cx="15" cy="15" r="1.3" fill="#fff" stroke="#111" stroke-width="0.9"/><circle cx="2" cy="15" r="1.3" fill="#fff" stroke="#111" stroke-width="0.9"/></svg>
<div class="t" style="left:52px;top:386px;font-size:11.5px;color:#000;-webkit-text-stroke:0.15px #000">(-)</div>
<div class="t" style="left:71px;top:386px;font-size:11.5px;color:#000;-webkit-text-stroke:0.15px #000">Эскиз:15</div>
<div class="a" style="left:15px;top:411px;width:12px;height:1px;background:repeating-linear-gradient(90deg,#808080 0 1px,transparent 1px 2px)"></div>
<svg style="left:29px;top:403px" width="17" height="17" viewBox="0 0 17 17"><path d="M2 2 H8 V8 H15 V15 H2 Z" fill="#c8c8c8" stroke="#111" stroke-width="1.1"/><circle cx="2" cy="2" r="1.3" fill="#fff" stroke="#111" stroke-width="0.9"/><circle cx="8" cy="2" r="1.3" fill="#fff" stroke="#111" stroke-width="0.9"/><circle cx="8" cy="8" r="1.3" fill="#fff" stroke="#111" stroke-width="0.9"/><circle cx="15" cy="8" r="1.3" fill="#fff" stroke="#111" stroke-width="0.9"/><circle cx="15" cy="15" r="1.3" fill="#fff" stroke="#111" stroke-width="0.9"/><circle cx="2" cy="15" r="1.3" fill="#fff" stroke="#111" stroke-width="0.9"/></svg>
<div class="t" style="left:52px;top:406px;font-size:11.5px;color:#000;-webkit-text-stroke:0.15px #000">(-)</div>
<div class="t" style="left:71px;top:406px;font-size:11.5px;color:#000;-webkit-text-stroke:0.15px #000">Эскиз:16</div>
<div class="a" style="left:15px;top:431px;width:12px;height:1px;background:repeating-linear-gradient(90deg,#808080 0 1px,transparent 1px 2px)"></div>
<svg style="left:29px;top:423px" width="17" height="17" viewBox="0 0 17 17"><path d="M1.5 3 L13 1.5 V13.5 L1.5 15 Z" fill="#7a7a7a" stroke="#2a2a2a" stroke-width="1"/><path d="M7 0 V17 M1 9 L15 8" stroke="#2a2a2a" stroke-width="1"/></svg>
<div class="t" style="left:55px;top:426px;font-size:11.5px;color:#000;-webkit-text-stroke:0.15px #000">Плоскость через ребро и вершину</div>
<div class="a" style="left:15px;top:451px;width:12px;height:1px;background:repeating-linear-gradient(90deg,#808080 0 1px,transparent 1px 2px)"></div>
<svg style="left:29px;top:443px" width="17" height="17" viewBox="0 0 17 17"><path d="M2 2 H8 V8 H15 V15 H2 Z" fill="#c8c8c8" stroke="#111" stroke-width="1.1"/><circle cx="2" cy="2" r="1.3" fill="#fff" stroke="#111" stroke-width="0.9"/><circle cx="8" cy="2" r="1.3" fill="#fff" stroke="#111" stroke-width="0.9"/><circle cx="8" cy="8" r="1.3" fill="#fff" stroke="#111" stroke-width="0.9"/><circle cx="15" cy="8" r="1.3" fill="#fff" stroke="#111" stroke-width="0.9"/><circle cx="15" cy="15" r="1.3" fill="#fff" stroke="#111" stroke-width="0.9"/><circle cx="2" cy="15" r="1.3" fill="#fff" stroke="#111" stroke-width="0.9"/></svg>
<div class="t" style="left:52px;top:446px;font-size:11.5px;color:#000;-webkit-text-stroke:0.15px #000">(-)</div>
<div class="t" style="left:71px;top:446px;font-size:11.5px;color:#000;-webkit-text-stroke:0.15px #000">Эскиз:17</div>
<div class="a" style="left:15px;top:471px;width:12px;height:1px;background:repeating-linear-gradient(90deg,#808080 0 1px,transparent 1px 2px)"></div>
<svg style="left:29px;top:463px" width="17" height="17" viewBox="0 0 17 17"><path d="M1.5 3 L13 1.5 V13.5 L1.5 15 Z" fill="#7a7a7a" stroke="#2a2a2a" stroke-width="1"/><path d="M7 0 V17 M1 9 L15 8" stroke="#2a2a2a" stroke-width="1"/></svg>
<div class="t" style="left:55px;top:466px;font-size:11.5px;color:#000;-webkit-text-stroke:0.15px #000">Смещенная плоскость:2</div>
<div class="a" style="left:15px;top:491px;width:12px;height:1px;background:repeating-linear-gradient(90deg,#808080 0 1px,transparent 1px 2px)"></div>
<svg style="left:29px;top:483px" width="17" height="17" viewBox="0 0 17 17"><path d="M2 2 H8 V8 H15 V15 H2 Z" fill="#c8c8c8" stroke="#111" stroke-width="1.1"/><circle cx="2" cy="2" r="1.3" fill="#fff" stroke="#111" stroke-width="0.9"/><circle cx="8" cy="2" r="1.3" fill="#fff" stroke="#111" stroke-width="0.9"/><circle cx="8" cy="8" r="1.3" fill="#fff" stroke="#111" stroke-width="0.9"/><circle cx="15" cy="8" r="1.3" fill="#fff" stroke="#111" stroke-width="0.9"/><circle cx="15" cy="15" r="1.3" fill="#fff" stroke="#111" stroke-width="0.9"/><circle cx="2" cy="15" r="1.3" fill="#fff" stroke="#111" stroke-width="0.9"/></svg>
<div class="t" style="left:52px;top:486px;font-size:11.5px;color:#000;-webkit-text-stroke:0.15px #000">(-)</div>
<div class="t" style="left:71px;top:486px;font-size:11.5px;color:#000;-webkit-text-stroke:0.15px #000">Эскиз:18</div>
<div class="a" style="left:15px;top:511px;width:12px;height:1px;background:repeating-linear-gradient(90deg,#808080 0 1px,transparent 1px 2px)"></div>
<svg style="left:29px;top:503px" width="17" height="17" viewBox="0 0 17 17"><path d="M1.5 3 L13 1.5 V13.5 L1.5 15 Z" fill="#7a7a7a" stroke="#2a2a2a" stroke-width="1"/><path d="M7 0 V17 M1 9 L15 8" stroke="#2a2a2a" stroke-width="1"/></svg>
<div class="t" style="left:55px;top:506px;font-size:11.5px;color:#000;-webkit-text-stroke:0.15px #000">Плоскость под углом:4</div>
<div class="a" style="left:15px;top:531px;width:12px;height:1px;background:repeating-linear-gradient(90deg,#808080 0 1px,transparent 1px 2px)"></div>
<svg style="left:29px;top:523px" width="17" height="17" viewBox="0 0 17 17"><path d="M2 2 H8 V8 H15 V15 H2 Z" fill="#c8c8c8" stroke="#111" stroke-width="1.1"/><circle cx="2" cy="2" r="1.3" fill="#fff" stroke="#111" stroke-width="0.9"/><circle cx="8" cy="2" r="1.3" fill="#fff" stroke="#111" stroke-width="0.9"/><circle cx="8" cy="8" r="1.3" fill="#fff" stroke="#111" stroke-width="0.9"/><circle cx="15" cy="8" r="1.3" fill="#fff" stroke="#111" stroke-width="0.9"/><circle cx="15" cy="15" r="1.3" fill="#fff" stroke="#111" stroke-width="0.9"/><circle cx="2" cy="15" r="1.3" fill="#fff" stroke="#111" stroke-width="0.9"/></svg>
<div class="t" style="left:52px;top:526px;font-size:11.5px;color:#000;-webkit-text-stroke:0.15px #000">(-)</div>
<div class="t" style="left:71px;top:526px;font-size:11.5px;color:#000;-webkit-text-stroke:0.15px #000">Эскиз:19</div>
<div class="a" style="left:15px;top:551px;width:12px;height:1px;background:repeating-linear-gradient(90deg,#808080 0 1px,transparent 1px 2px)"></div>
<svg style="left:29px;top:543px" width="17" height="17" viewBox="0 0 17 17"><path d="M1 15 L4 10 H16 L13 15 Z" fill="#1a40c8" stroke="#000a6a" stroke-width="0.8"/><path d="M6 10 L7 3 Q8.5 1 10 3 L11 10 Z" fill="#5a8ff0" stroke="#000a6a" stroke-width="0.8"/><ellipse cx="8.5" cy="3" rx="1.8" ry="1" fill="#25e6fa"/></svg>
<div class="t" style="left:55px;top:546px;font-size:11.5px;color:#000;-webkit-text-stroke:0.15px #000">Операция по сечениям:4</div>
<div class="a" style="left:15px;top:571px;width:12px;height:1px;background:repeating-linear-gradient(90deg,#808080 0 1px,transparent 1px 2px)"></div>
<svg style="left:29px;top:563px" width="17" height="17" viewBox="0 0 17 17"><path d="M1.5 3 L13 1.5 V13.5 L1.5 15 Z" fill="#7a7a7a" stroke="#2a2a2a" stroke-width="1"/><path d="M7 0 V17 M1 9 L15 8" stroke="#2a2a2a" stroke-width="1"/></svg>
<div class="t" style="left:55px;top:566px;font-size:11.5px;color:#000;-webkit-text-stroke:0.15px #000">Плоскость под углом:6</div>
<div class="a" style="left:15px;top:591px;width:12px;height:1px;background:repeating-linear-gradient(90deg,#808080 0 1px,transparent 1px 2px)"></div>
<svg style="left:29px;top:583px" width="17" height="17" viewBox="0 0 17 17"><path d="M2 2 H8 V8 H15 V15 H2 Z" fill="#c8c8c8" stroke="#111" stroke-width="1.1"/><circle cx="2" cy="2" r="1.3" fill="#fff" stroke="#111" stroke-width="0.9"/><circle cx="8" cy="2" r="1.3" fill="#fff" stroke="#111" stroke-width="0.9"/><circle cx="8" cy="8" r="1.3" fill="#fff" stroke="#111" stroke-width="0.9"/><circle cx="15" cy="8" r="1.3" fill="#fff" stroke="#111" stroke-width="0.9"/><circle cx="15" cy="15" r="1.3" fill="#fff" stroke="#111" stroke-width="0.9"/><circle cx="2" cy="15" r="1.3" fill="#fff" stroke="#111" stroke-width="0.9"/></svg>
<div class="t" style="left:52px;top:586px;font-size:11.5px;color:#000;-webkit-text-stroke:0.15px #000">(-)</div>
<div class="t" style="left:71px;top:586px;font-size:11.5px;color:#000;-webkit-text-stroke:0.15px #000">Эскиз:20</div>
<div class="a" style="left:15px;top:611px;width:12px;height:1px;background:repeating-linear-gradient(90deg,#808080 0 1px,transparent 1px 2px)"></div>
<svg style="left:29px;top:603px" width="17" height="17" viewBox="0 0 17 17"><path d="M1 15 L4 10 H16 L13 15 Z" fill="#1a40c8" stroke="#000a6a" stroke-width="0.8"/><path d="M6 10 L7 3 Q8.5 1 10 3 L11 10 Z" fill="#5a8ff0" stroke="#000a6a" stroke-width="0.8"/><ellipse cx="8.5" cy="3" rx="1.8" ry="1" fill="#25e6fa"/></svg>
<div class="t" style="left:55px;top:606px;font-size:11.5px;color:#000;-webkit-text-stroke:0.15px #000">Операция по сечениям:3</div>
<div class="a" style="left:15px;top:631px;width:12px;height:1px;background:repeating-linear-gradient(90deg,#808080 0 1px,transparent 1px 2px)"></div>
<svg style="left:29px;top:623px" width="17" height="17" viewBox="0 0 17 17"><path d="M2 2 H8 V8 H15 V15 H2 Z" fill="#c8c8c8" stroke="#111" stroke-width="1.1"/><circle cx="2" cy="2" r="1.3" fill="#fff" stroke="#111" stroke-width="0.9"/><circle cx="8" cy="2" r="1.3" fill="#fff" stroke="#111" stroke-width="0.9"/><circle cx="8" cy="8" r="1.3" fill="#fff" stroke="#111" stroke-width="0.9"/><circle cx="15" cy="8" r="1.3" fill="#fff" stroke="#111" stroke-width="0.9"/><circle cx="15" cy="15" r="1.3" fill="#fff" stroke="#111" stroke-width="0.9"/><circle cx="2" cy="15" r="1.3" fill="#fff" stroke="#111" stroke-width="0.9"/></svg>
<div class="t" style="left:52px;top:626px;font-size:11.5px;color:#000;-webkit-text-stroke:0.15px #000">(-)</div>
<div class="t" style="left:71px;top:626px;font-size:11.5px;color:#000;-webkit-text-stroke:0.15px #000">Эскиз:21</div>
<div class="a" style="left:15px;top:651px;width:12px;height:1px;background:repeating-linear-gradient(90deg,#808080 0 1px,transparent 1px 2px)"></div>
<svg style="left:29px;top:643px" width="17" height="17" viewBox="0 0 17 17"><path d="M3 3 Q9 1 8 6 Q6 9 9 11 Q12 14 15 13" fill="none" stroke="#444" stroke-width="1"/><path d="M5 6 Q11 4 10 8 Q9 11 11 13 Q13 15 15 16" fill="none" stroke="#999" stroke-width="1"/></svg>
<div class="t" style="left:52px;top:646px;font-size:11.5px;color:#000;-webkit-text-stroke:0.15px #000">Эквидистанта кривой:1</div>
<div class="a" style="left:15px;top:671px;width:12px;height:1px;background:repeating-linear-gradient(90deg,#808080 0 1px,transparent 1px 2px)"></div>
<svg style="left:29px;top:663px" width="17" height="17" viewBox="0 0 17 17"><path d="M1 4 L4 1 H16 V13 L13 16 H1 Z" fill="#0b1ab8"/><rect x="1" y="4" width="12" height="12" fill="#25b8f0"/><path d="M2 11 Q7 6 13 8 L13 12 Q7 10 3 15 Z" fill="#0b1ab8"/><path d="M1 4 L4 1 H16 V13 L13 16 H1 Z" fill="none" stroke="#000a6a" stroke-width="0.8"/></svg>
<div class="t" style="left:55px;top:666px;font-size:11.5px;color:#000;-webkit-text-stroke:0.15px #000">Вырезать кинематический элемент</div>
<div class="a" style="left:15px;top:691px;width:12px;height:1px;background:repeating-linear-gradient(90deg,#808080 0 1px,transparent 1px 2px)"></div>
<div class="a" style="left:10px;top:686px;width:9px;height:9px;background:#fff;border:1px solid #a0a0a0;font-size:9px;line-height:7px;text-align:center;color:#333">+</div>
<svg style="left:29px;top:683px" width="17" height="17" viewBox="0 0 17 17"><path d="M2 14 Q5 6 8 10 Q11 14 15 4" fill="none" stroke="#666" stroke-width="1" stroke-dasharray="1.5 1"/><circle cx="2" cy="14" r="1.3" fill="#fff" stroke="#444" stroke-width="0.8"/><circle cx="8" cy="10" r="1.3" fill="#fff" stroke="#444" stroke-width="0.8"/><circle cx="15" cy="4" r="1.3" fill="#fff" stroke="#444" stroke-width="0.8"/></svg>
<div class="t" style="left:55px;top:686px;font-size:11.5px;color:#000;-webkit-text-stroke:0.15px #000">Сплайн:1</div>
<div class="a" style="left:15px;top:711px;width:12px;height:1px;background:repeating-linear-gradient(90deg,#808080 0 1px,transparent 1px 2px)"></div>
<svg style="left:29px;top:703px" width="17" height="17" viewBox="0 0 17 17"><path d="M1.5 3 L13 1.5 V13.5 L1.5 15 Z" fill="#7a7a7a" stroke="#2a2a2a" stroke-width="1"/><path d="M7 0 V17 M1 9 L15 8" stroke="#2a2a2a" stroke-width="1"/></svg>
<div class="t" style="left:55px;top:706px;font-size:11.5px;color:#000;-webkit-text-stroke:0.15px #000">Смещенная плоскость:4</div>
<div class="a" style="left:15px;top:731px;width:12px;height:1px;background:repeating-linear-gradient(90deg,#808080 0 1px,transparent 1px 2px)"></div>
<svg style="left:29px;top:723px" width="17" height="17" viewBox="0 0 17 17"><path d="M2 2 H8 V8 H15 V15 H2 Z" fill="#c8c8c8" stroke="#111" stroke-width="1.1"/><circle cx="2" cy="2" r="1.3" fill="#fff" stroke="#111" stroke-width="0.9"/><circle cx="8" cy="2" r="1.3" fill="#fff" stroke="#111" stroke-width="0.9"/><circle cx="8" cy="8" r="1.3" fill="#fff" stroke="#111" stroke-width="0.9"/><circle cx="15" cy="8" r="1.3" fill="#fff" stroke="#111" stroke-width="0.9"/><circle cx="15" cy="15" r="1.3" fill="#fff" stroke="#111" stroke-width="0.9"/><circle cx="2" cy="15" r="1.3" fill="#fff" stroke="#111" stroke-width="0.9"/></svg>
<div class="t" style="left:52px;top:726px;font-size:11.5px;color:#000;-webkit-text-stroke:0.15px #000">(-)</div>
<div class="t" style="left:71px;top:726px;font-size:11.5px;color:#000;-webkit-text-stroke:0.15px #000">Эскиз:22</div>
<div class="a" style="left:15px;top:751px;width:12px;height:1px;background:repeating-linear-gradient(90deg,#808080 0 1px,transparent 1px 2px)"></div>
<svg style="left:29px;top:743px" width="17" height="17" viewBox="0 0 17 17"><path d="M1 4 L4 1 H16 V13 L13 16 H1 Z" fill="#0b1ab8"/><rect x="1" y="4" width="12" height="12" fill="#25b8f0" stroke="#000a6a" stroke-width="0.8"/><rect x="4" y="7" width="6" height="6" fill="#fff" stroke="#0b1ab8" stroke-width="1.3"/></svg>
<div class="t" style="left:55px;top:746px;font-size:11.5px;color:#000;-webkit-text-stroke:0.15px #000">Вырезать элемент выдавливания</div>
</div>
<div class="a" style="left:285px;top:204px;width:17px;height:757px;background:linear-gradient(90deg,#e8e8e8,#f4f4f4)"></div>
<svg style="left:289px;top:209px" width="9" height="5" viewBox="0 0 9 5"><path d="M0.5 4.5 L4.5 0.5 L8.5 4.5" fill="#555" stroke="#555"/></svg>
<div class="a" style="left:286px;top:224px;width:15px;height:482px;background:linear-gradient(90deg,#dcdcdc,#f0f0f0 40%,#cfcfcf);border:1px solid #a8a8a8;border-radius:2px"></div>
<div class="a" style="left:290px;top:460px;width:7px;height:7px;background:repeating-linear-gradient(#888 0 1px,transparent 1px 2px)"></div>
<svg style="left:289px;top:948px" width="9" height="5" viewBox="0 0 9 5"><path d="M0.5 0.5 L4.5 4.5 L8.5 0.5" fill="#555" stroke="#555"/></svg>
<div class="a" style="left:65px;top:961px;width:237px;height:17px;background:linear-gradient(#e8e8e8,#f4f4f4)"></div>
<svg style="left:71px;top:964px" width="5" height="9" viewBox="0 0 5 9"><path d="M4.5 0.5 L0.5 4.5 L4.5 8.5Z" fill="#444"/></svg>
<svg style="left:273px;top:964px" width="5" height="9" viewBox="0 0 5 9"><path d="M0.5 0.5 L4.5 4.5 L0.5 8.5Z" fill="#444"/></svg>
<div class="a" style="left:84px;top:962px;width:152px;height:15px;background:linear-gradient(#f2f2f2,#dcdcdc 60%,#cfcfcf);border:1px solid #a8a8a8;border-radius:2px"></div>
<div class="a" style="left:156px;top:966px;width:7px;height:7px;background:repeating-linear-gradient(90deg,#777 0 1px,transparent 1px 2px)"></div>
<svg style="left:0;top:0" width="1920" height="1080" viewBox="0 0 1920 1080">
<defs>
<linearGradient id="gBore" x1="0" y1="0" x2="0.15" y2="1"><stop offset="0" stop-color="#3c3c3c"/><stop offset="0.45" stop-color="#3f3f3f"/><stop offset="0.82" stop-color="#5a5a5a"/><stop offset="1" stop-color="#676767"/></linearGradient>
<linearGradient id="gCyl" x1="0.3" y1="0" x2="1" y2="0.5"><stop offset="0" stop-color="#686868"/><stop offset="0.48" stop-color="#636363"/><stop offset="0.72" stop-color="#3e3e3e"/><stop offset="1" stop-color="#3c3c3c"/></linearGradient>
<linearGradient id="gBand" x1="0" y1="0" x2="0.4" y2="1"><stop offset="0" stop-color="#474747"/><stop offset="0.6" stop-color="#4c4c4c"/><stop offset="1" stop-color="#5c5c5c"/></linearGradient>
<filter id="bl6" x="-20%" y="-20%" width="140%" height="140%"><feGaussianBlur stdDeviation="6"/></filter>
<filter id="bl9" x="-20%" y="-20%" width="140%" height="140%"><feGaussianBlur stdDeviation="9"/></filter>
<filter id="bl3" x="-20%" y="-20%" width="140%" height="140%"><feGaussianBlur stdDeviation="3"/></filter>
<radialGradient id="gHi" cx="0.5" cy="0.5" r="0.5"><stop offset="0" stop-color="#d8d8d8"/><stop offset="0.4" stop-color="#9a9a9a" stop-opacity="0.8"/><stop offset="1" stop-color="#6b6b6b" stop-opacity="0"/></radialGradient>

<clipPath id="cpGroove"><path d="M1020.6 254.8 C1017.3 251.9 1007.7 242.4 1000.7 237.4 C993.7 232.3 986.2 228.1 978.6 224.6 C971.0 221.2 963.1 218.5 955.1 216.4 C947.1 214.4 938.8 213.1 930.5 212.4 C922.3 211.7 913.8 211.7 905.5 212.2 C897.2 212.8 888.9 214.0 880.7 215.7 C872.5 217.4 864.4 219.7 856.5 222.5 C848.7 225.3 841.0 228.6 833.6 232.3 C826.3 236.1 819.2 240.3 812.5 244.9 C805.7 249.6 799.3 254.6 793.2 260.0 C787.1 265.4 781.3 271.2 775.8 277.3 C770.3 283.3 765.1 289.8 760.2 296.4 C755.3 303.0 750.7 310.0 746.5 317.1 C742.2 324.3 738.2 331.6 734.5 339.2 C730.7 346.7 727.3 354.4 724.2 362.2 C721.1 370.0 718.2 377.9 715.6 385.9 C713.1 393.9 710.8 402.0 708.8 410.1 C706.8 418.3 705.0 426.5 703.5 434.7 C702.1 443.0 700.9 451.3 699.9 459.6 C699.0 467.9 698.3 476.3 697.9 484.7 C697.5 493.1 697.3 501.5 697.4 509.8 C697.5 518.2 697.8 526.6 698.4 535.0 C699.0 543.4 699.8 551.8 700.9 560.1 C702.0 568.4 703.3 576.7 704.8 585.0 C706.4 593.2 708.2 601.4 710.2 609.6 C712.2 617.7 714.4 625.8 716.9 633.8 C719.4 641.8 722.0 649.7 725.0 657.5 C727.9 665.4 731.0 673.1 734.3 680.7 C737.7 688.4 741.2 695.9 745.0 703.3 C748.8 710.7 752.7 718.0 756.9 725.1 C761.1 732.2 765.4 739.2 770.0 746.0 C774.6 752.8 779.4 759.5 784.5 766.0 C789.5 772.5 794.7 778.8 800.2 784.9 C805.7 790.9 811.4 796.8 817.4 802.5 C823.3 808.2 829.5 813.6 836.0 818.8 C842.4 824.0 849.1 829.0 856.0 833.7 C863.0 838.4 870.1 842.8 877.5 847.0 C884.9 851.2 892.5 855.2 900.2 858.9 C908.0 862.6 920.2 867.5 924.1 869.2 L943.3 836.8 C939.3 835.3 927.0 831.0 919.2 827.6 C911.5 824.2 904.0 820.4 896.8 816.3 C889.6 812.2 882.7 807.8 876.1 803.1 C869.5 798.3 863.1 793.3 857.0 788.0 C850.8 782.7 845.0 777.1 839.4 771.3 C833.8 765.5 828.4 759.4 823.3 753.2 C818.2 746.9 813.3 740.4 808.7 733.7 C804.1 727.0 799.7 720.2 795.5 713.1 C791.3 706.1 787.4 698.9 783.7 691.6 C780.0 684.2 776.5 676.8 773.2 669.2 C769.9 661.6 766.9 653.9 764.0 646.2 C761.1 638.4 758.5 630.6 756.0 622.7 C753.6 614.8 751.4 606.8 749.4 598.8 C747.3 590.7 745.6 582.7 744.0 574.6 C742.5 566.5 741.2 558.3 740.1 550.2 C739.1 542.0 738.2 533.8 737.7 525.7 C737.2 517.5 736.9 509.3 736.9 501.1 C736.9 492.9 737.1 484.8 737.7 476.6 C738.2 468.5 739.1 460.3 740.2 452.3 C741.3 444.2 742.8 436.1 744.5 428.1 C746.3 420.1 748.3 412.2 750.7 404.3 C753.1 396.5 755.7 388.6 758.8 380.9 C761.8 373.2 765.2 365.5 768.9 358.0 C772.6 350.6 776.6 343.2 780.9 336.0 C785.2 328.9 789.9 321.9 794.8 315.2 C799.7 308.6 805.0 302.1 810.5 296.0 C816.0 290.0 821.8 284.2 827.9 278.8 C834.0 273.4 840.4 268.4 847.0 263.9 C853.7 259.4 860.6 255.2 867.7 251.7 C874.9 248.1 882.3 245.0 889.8 242.6 C897.4 240.2 905.2 238.2 913.0 237.1 C920.8 235.9 928.9 235.4 936.9 235.6 C944.9 235.9 953.0 236.9 961.0 238.7 C969.1 240.6 977.2 243.3 985.1 246.9 C993.1 250.5 1004.8 258.3 1008.8 260.5 Z"/></clipPath>
<clipPath id="cpRB"><path d="M1122.1 297.6 C1123.8 302.9 1129.0 318.6 1132.7 329.2 C1136.4 339.7 1140.4 350.3 1144.4 360.9 C1148.4 371.5 1152.6 382.1 1156.7 392.8 C1160.8 403.4 1165.0 414.1 1168.9 424.8 C1172.9 435.6 1176.9 446.3 1180.5 457.1 C1184.2 467.9 1187.8 478.7 1191.0 489.6 C1194.2 500.5 1197.2 511.4 1199.7 522.4 C1202.2 533.3 1204.4 544.3 1206.1 555.4 C1207.7 566.4 1209.0 577.5 1209.6 588.5 C1210.3 599.6 1210.4 610.8 1210.2 621.9 C1209.9 633.0 1209.1 644.2 1207.9 655.4 C1206.7 666.5 1205.0 677.7 1203.0 688.9 C1201.0 700.1 1198.6 711.2 1195.9 722.4 C1193.2 733.5 1190.2 744.8 1186.8 755.8 C1183.3 766.8 1179.6 777.9 1175.4 788.6 C1171.1 799.2 1166.5 809.8 1161.2 819.7 C1155.9 829.7 1150.2 839.4 1143.7 848.4 C1137.3 857.3 1130.2 865.9 1122.4 873.5 C1114.6 881.2 1106.0 888.2 1096.8 894.3 C1087.6 900.3 1077.6 905.6 1067.3 909.8 C1057.0 913.9 1046.0 917.2 1034.9 919.2 C1023.7 921.2 1012.1 922.2 1000.5 921.8 C988.9 921.4 971.1 917.6 965.2 916.8 L965.5 937.4 C970.2 938.1 984.5 940.6 994.2 941.3 C1003.9 942.0 1013.9 942.1 1023.7 941.6 C1033.5 941.1 1043.4 940.0 1053.0 938.3 C1062.6 936.6 1072.2 934.3 1081.3 931.4 C1090.5 928.5 1099.4 924.9 1107.7 920.7 C1116.1 916.5 1124.0 911.7 1131.5 906.3 C1139.0 900.9 1146.0 894.9 1152.7 888.5 C1159.3 882.2 1165.5 875.2 1171.3 867.9 C1177.2 860.6 1182.6 852.9 1187.6 844.8 C1192.7 836.8 1197.4 828.4 1201.8 819.8 C1206.1 811.2 1210.1 802.2 1213.9 793.2 C1217.6 784.2 1220.9 774.9 1224.0 765.6 C1227.2 756.3 1230.0 746.8 1232.5 737.3 C1235.0 727.9 1237.3 718.4 1239.3 708.9 C1241.3 699.4 1243.1 689.9 1244.6 680.4 C1246.0 670.9 1247.2 661.4 1248.1 651.9 C1249.0 642.4 1249.6 632.9 1249.8 623.4 C1250.1 613.9 1250.1 604.5 1249.8 595.0 C1249.5 585.6 1248.9 576.1 1247.9 566.8 C1247.0 557.4 1245.7 548.0 1244.1 538.7 C1242.5 529.4 1240.5 520.1 1238.4 510.8 C1236.2 501.6 1233.7 492.4 1231.0 483.2 C1228.3 474.0 1225.4 464.9 1222.3 455.8 C1219.3 446.6 1216.0 437.6 1212.7 428.5 C1209.3 419.5 1205.8 410.4 1202.3 401.4 C1198.8 392.4 1195.2 383.5 1191.7 374.5 C1188.1 365.6 1184.5 356.6 1181.0 347.7 C1177.5 338.8 1174.0 330.0 1170.6 321.1 C1167.3 312.2 1162.5 299.0 1160.9 294.6 Z"/></clipPath>
<clipPath id="cpOR"><path d="M1124.4 242.0 C1120.2 239.0 1107.6 229.7 1098.9 224.0 C1090.1 218.2 1081.1 212.6 1071.9 207.5 C1062.7 202.3 1053.2 197.4 1043.6 193.0 C1034.0 188.6 1024.2 184.5 1014.2 181.1 C1004.3 177.6 994.1 174.7 983.8 172.4 C973.5 170.1 963.1 168.4 952.6 167.4 C942.1 166.5 931.4 166.1 920.9 166.5 C910.4 166.9 899.8 167.9 889.4 169.6 C879.0 171.3 868.7 173.6 858.7 176.7 C848.7 179.7 838.8 183.4 829.3 187.8 C819.9 192.1 810.6 197.2 801.8 202.8 C793.1 208.4 784.6 214.7 776.6 221.4 C768.5 228.1 760.9 235.4 753.8 243.0 C746.7 250.7 740.0 258.9 733.9 267.5 C727.7 276.0 722.1 285.0 717.0 294.2 C711.9 303.4 707.3 313.0 703.1 322.8 C698.9 332.5 695.2 342.5 691.9 352.6 C688.6 362.7 685.7 373.0 683.2 383.3 C680.7 393.5 678.6 403.9 676.8 414.3 C675.0 424.6 673.6 435.1 672.6 445.5 C671.5 455.9 670.8 466.4 670.4 476.8 C670.1 487.3 670.1 497.8 670.4 508.3 C670.7 518.7 671.3 529.2 672.2 539.6 C673.2 550.1 674.4 560.5 676.0 570.9 C677.5 581.3 679.4 591.6 681.5 601.9 C683.6 612.2 686.1 622.5 688.8 632.7 C691.4 642.9 694.4 653.0 697.6 663.1 C700.9 673.1 704.4 683.1 708.1 693.0 C711.8 702.9 715.8 712.7 720.0 722.4 C724.2 732.0 728.7 741.6 733.3 751.1 C738.0 760.5 743.0 769.9 748.1 779.1 C753.3 788.2 758.7 797.3 764.3 806.1 C770.0 815.0 775.8 823.7 782.0 832.1 C788.2 840.5 794.7 848.8 801.5 856.6 C808.4 864.5 815.5 872.1 823.0 879.4 C830.4 886.6 838.3 893.5 846.4 899.9 C854.6 906.3 863.2 912.4 872.1 917.9 C881.0 923.4 890.3 928.5 900.0 933.0 C909.8 937.5 925.3 942.9 930.4 944.9 L924.1 869.2 C920.2 867.5 908.0 862.6 900.2 858.9 C892.5 855.2 884.9 851.2 877.5 847.0 C870.1 842.8 863.0 838.4 856.0 833.7 C849.1 829.0 842.4 824.0 836.0 818.8 C829.5 813.6 823.3 808.2 817.4 802.5 C811.4 796.8 805.7 790.9 800.2 784.9 C794.7 778.8 789.5 772.5 784.5 766.0 C779.4 759.5 774.6 752.8 770.0 746.0 C765.4 739.2 761.1 732.2 756.9 725.1 C752.7 718.0 748.8 710.7 745.0 703.3 C741.2 695.9 737.7 688.4 734.3 680.7 C731.0 673.1 727.9 665.4 725.0 657.5 C722.0 649.7 719.4 641.8 716.9 633.8 C714.4 625.8 712.2 617.7 710.2 609.6 C708.2 601.4 706.4 593.2 704.8 585.0 C703.3 576.7 702.0 568.4 700.9 560.1 C699.8 551.8 699.0 543.4 698.4 535.0 C697.8 526.6 697.5 518.2 697.4 509.8 C697.3 501.5 697.5 493.1 697.9 484.7 C698.3 476.3 699.0 467.9 699.9 459.6 C700.9 451.3 702.1 443.0 703.5 434.7 C705.0 426.5 706.8 418.3 708.8 410.1 C710.8 402.0 713.1 393.9 715.6 385.9 C718.2 377.9 721.1 370.0 724.2 362.2 C727.3 354.4 730.7 346.7 734.5 339.2 C738.2 331.6 742.2 324.3 746.5 317.1 C750.7 310.0 755.3 303.0 760.2 296.4 C765.1 289.8 770.3 283.3 775.8 277.3 C781.3 271.2 787.1 265.4 793.2 260.0 C799.3 254.6 805.7 249.6 812.5 244.9 C819.2 240.3 826.3 236.1 833.6 232.3 C841.0 228.6 848.7 225.3 856.5 222.5 C864.4 219.7 872.5 217.4 880.7 215.7 C888.9 214.0 897.2 212.8 905.5 212.2 C913.8 211.7 922.3 211.7 930.5 212.4 C938.8 213.1 947.1 214.4 955.1 216.4 C963.1 218.5 971.0 221.2 978.6 224.6 C986.2 228.1 993.7 232.3 1000.7 237.4 C1007.7 242.4 1017.3 251.9 1020.6 254.8 Z"/></clipPath>
<clipPath id="cpBore"><ellipse cx="880.5" cy="572.4" rx="81.5" ry="118.7" transform="rotate(-14 880.5 572.4)" /></clipPath>
</defs>
<path d="M1124.4 242.0 C1120.2 239.0 1107.6 229.7 1098.9 224.0 C1090.1 218.2 1081.1 212.6 1071.9 207.5 C1062.7 202.3 1053.2 197.4 1043.6 193.0 C1034.0 188.6 1024.2 184.5 1014.2 181.1 C1004.3 177.6 994.1 174.7 983.8 172.4 C973.5 170.1 963.1 168.4 952.6 167.4 C942.1 166.5 931.4 166.1 920.9 166.5 C910.4 166.9 899.8 167.9 889.4 169.6 C879.0 171.3 868.7 173.6 858.7 176.7 C848.7 179.7 838.8 183.4 829.3 187.8 C819.9 192.1 810.6 197.2 801.8 202.8 C793.1 208.4 784.6 214.7 776.6 221.4 C768.5 228.1 760.9 235.4 753.8 243.0 C746.7 250.7 740.0 258.9 733.9 267.5 C727.7 276.0 722.1 285.0 717.0 294.2 C711.9 303.4 707.3 313.0 703.1 322.8 C698.9 332.5 695.2 342.5 691.9 352.6 C688.6 362.7 685.7 373.0 683.2 383.3 C680.7 393.5 678.6 403.9 676.8 414.3 C675.0 424.6 673.6 435.1 672.6 445.5 C671.5 455.9 670.8 466.4 670.4 476.8 C670.1 487.3 670.1 497.8 670.4 508.3 C670.7 518.7 671.3 529.2 672.2 539.6 C673.2 550.1 674.4 560.5 676.0 570.9 C677.5 581.3 679.4 591.6 681.5 601.9 C683.6 612.2 686.1 622.5 688.8 632.7 C691.4 642.9 694.4 653.0 697.6 663.1 C700.9 673.1 704.4 683.1 708.1 693.0 C711.8 702.9 715.8 712.7 720.0 722.4 C724.2 732.0 728.7 741.6 733.3 751.1 C738.0 760.5 743.0 769.9 748.1 779.1 C753.3 788.2 758.7 797.3 764.3 806.1 C770.0 815.0 775.8 823.7 782.0 832.1 C788.2 840.5 794.7 848.8 801.5 856.6 C808.4 864.5 815.5 872.1 823.0 879.4 C830.4 886.6 838.3 893.5 846.4 899.9 C854.6 906.3 863.2 912.4 872.1 917.9 C881.0 923.4 890.3 928.5 900.0 933.0 C909.8 937.5 925.3 942.9 930.4 944.9 L944.0 947.5 C948.0 946.2 959.8 940.9 968.1 939.4 C976.3 938.0 984.8 938.6 993.4 938.9 C1001.9 939.2 1010.6 940.8 1019.3 941.5 C1028.0 942.2 1036.7 943.1 1045.3 942.9 C1053.9 942.7 1062.5 941.7 1070.9 940.2 C1079.4 938.6 1087.7 936.3 1095.9 933.5 C1104.0 930.8 1112.0 927.4 1119.8 923.8 C1127.7 920.1 1135.2 915.9 1142.7 911.6 C1150.1 907.2 1157.4 902.5 1164.5 897.6 C1171.6 892.8 1178.7 887.8 1185.5 882.5 C1192.2 877.2 1198.9 871.9 1205.0 866.0 C1211.0 860.0 1216.7 853.7 1221.9 847.0 C1227.1 840.3 1231.9 833.2 1236.3 825.9 C1240.8 818.5 1244.8 810.9 1248.7 803.1 C1252.5 795.4 1256.0 787.3 1259.3 779.3 C1262.6 771.3 1265.7 763.2 1268.6 755.0 C1271.5 746.8 1274.3 738.6 1276.8 730.4 C1279.3 722.1 1281.6 713.8 1283.7 705.4 C1285.9 697.1 1287.8 688.7 1289.5 680.3 C1291.3 671.9 1292.8 663.4 1294.1 655.0 C1295.4 646.5 1296.6 638.0 1297.5 629.5 C1298.4 620.9 1299.2 612.4 1299.7 603.9 C1300.2 595.3 1300.6 586.8 1300.7 578.2 C1300.8 569.6 1300.7 561.1 1300.5 552.5 C1300.2 544.0 1299.7 535.4 1299.0 526.8 C1298.4 518.3 1297.5 509.8 1296.4 501.2 C1295.4 492.7 1294.1 484.2 1292.7 475.7 C1291.3 467.2 1289.7 458.7 1288.0 450.2 C1286.3 441.8 1284.4 433.3 1282.5 424.9 C1280.6 416.5 1278.5 408.1 1276.3 399.7 C1274.2 391.3 1271.9 383.0 1269.6 374.6 C1267.4 366.3 1265.0 358.0 1262.6 349.7 C1260.2 341.4 1257.7 333.2 1255.3 324.9 C1252.8 316.7 1250.4 308.5 1247.9 300.4 C1245.5 292.2 1241.8 280.1 1240.6 276.0 L1236 269 Z" fill="#676767" stroke="#000" stroke-width="1.2"/>
<g clip-path="url(#cpOR)"><path d="M1060.0 225.0 C1051.7 220.2 1026.7 202.2 1010.0 196.0 C993.3 189.8 978.3 189.0 960.0 188.0 C941.7 187.0 918.3 188.0 900.0 190.0 C881.7 192.0 858.3 198.3 850.0 200.0" stroke="#7c7c7c" stroke-width="14" fill="none" filter="url(#bl6)"/></g>
<path d="M1160.9 294.6 C1162.5 299.0 1167.3 312.2 1170.6 321.1 C1174.0 330.0 1177.5 338.8 1181.0 347.7 C1184.5 356.6 1188.1 365.6 1191.7 374.5 C1195.2 383.5 1198.8 392.4 1202.3 401.4 C1205.8 410.4 1209.3 419.5 1212.7 428.5 C1216.0 437.6 1219.3 446.6 1222.3 455.8 C1225.4 464.9 1228.3 474.0 1231.0 483.2 C1233.7 492.4 1236.2 501.6 1238.4 510.8 C1240.5 520.1 1242.5 529.4 1244.1 538.7 C1245.7 548.0 1247.0 557.4 1247.9 566.8 C1248.9 576.1 1249.5 585.6 1249.8 595.0 C1250.1 604.5 1250.1 613.9 1249.8 623.4 C1249.6 632.9 1249.0 642.4 1248.1 651.9 C1247.2 661.4 1246.0 670.9 1244.6 680.4 C1243.1 689.9 1241.3 699.4 1239.3 708.9 C1237.3 718.4 1235.0 727.9 1232.5 737.3 C1230.0 746.8 1227.2 756.3 1224.0 765.6 C1220.9 774.9 1217.6 784.2 1213.9 793.2 C1210.1 802.2 1206.1 811.2 1201.8 819.8 C1197.4 828.4 1192.7 836.8 1187.6 844.8 C1182.6 852.9 1177.2 860.6 1171.3 867.9 C1165.5 875.2 1159.3 882.2 1152.7 888.5 C1146.0 894.9 1139.0 900.9 1131.5 906.3 C1124.0 911.7 1116.1 916.5 1107.7 920.7 C1099.4 924.9 1090.5 928.5 1081.3 931.4 C1072.2 934.3 1062.6 936.6 1053.0 938.3 C1043.4 940.0 1033.5 941.1 1023.7 941.6 C1013.9 942.1 1003.9 942.0 994.2 941.3 C984.5 940.6 970.2 938.1 965.5 937.4 L944.0 947.5 C948.0 946.2 959.8 940.9 968.1 939.4 C976.3 938.0 984.8 938.6 993.4 938.9 C1001.9 939.2 1010.6 940.8 1019.3 941.5 C1028.0 942.2 1036.7 943.1 1045.3 942.9 C1053.9 942.7 1062.5 941.7 1070.9 940.2 C1079.4 938.6 1087.7 936.3 1095.9 933.5 C1104.0 930.8 1112.0 927.4 1119.8 923.8 C1127.7 920.1 1135.2 915.9 1142.7 911.6 C1150.1 907.2 1157.4 902.5 1164.5 897.6 C1171.6 892.8 1178.7 887.8 1185.5 882.5 C1192.2 877.2 1198.9 871.9 1205.0 866.0 C1211.0 860.0 1216.7 853.7 1221.9 847.0 C1227.1 840.3 1231.9 833.2 1236.3 825.9 C1240.8 818.5 1244.8 810.9 1248.7 803.1 C1252.5 795.4 1256.0 787.3 1259.3 779.3 C1262.6 771.3 1265.7 763.2 1268.6 755.0 C1271.5 746.8 1274.3 738.6 1276.8 730.4 C1279.3 722.1 1281.6 713.8 1283.7 705.4 C1285.9 697.1 1287.8 688.7 1289.5 680.3 C1291.3 671.9 1292.8 663.4 1294.1 655.0 C1295.4 646.5 1296.6 638.0 1297.5 629.5 C1298.4 620.9 1299.2 612.4 1299.7 603.9 C1300.2 595.3 1300.6 586.8 1300.7 578.2 C1300.8 569.6 1300.7 561.1 1300.5 552.5 C1300.2 544.0 1299.7 535.4 1299.0 526.8 C1298.4 518.3 1297.5 509.8 1296.4 501.2 C1295.4 492.7 1294.1 484.2 1292.7 475.7 C1291.3 467.2 1289.7 458.7 1288.0 450.2 C1286.3 441.8 1284.4 433.3 1282.5 424.9 C1280.6 416.5 1278.5 408.1 1276.3 399.7 C1274.2 391.3 1271.9 383.0 1269.6 374.6 C1267.4 366.3 1265.0 358.0 1262.6 349.7 C1260.2 341.4 1257.7 333.2 1255.3 324.9 C1252.8 316.7 1250.4 308.5 1247.9 300.4 C1245.5 292.2 1241.8 280.1 1240.6 276.0 Z" fill="#3d3d3d"/>
<path d="M1122.1 297.6 C1123.8 302.9 1129.0 318.6 1132.7 329.2 C1136.4 339.7 1140.4 350.3 1144.4 360.9 C1148.4 371.5 1152.6 382.1 1156.7 392.8 C1160.8 403.4 1165.0 414.1 1168.9 424.8 C1172.9 435.6 1176.9 446.3 1180.5 457.1 C1184.2 467.9 1187.8 478.7 1191.0 489.6 C1194.2 500.5 1197.2 511.4 1199.7 522.4 C1202.2 533.3 1204.4 544.3 1206.1 555.4 C1207.7 566.4 1209.0 577.5 1209.6 588.5 C1210.3 599.6 1210.4 610.8 1210.2 621.9 C1209.9 633.0 1209.1 644.2 1207.9 655.4 C1206.7 666.5 1205.0 677.7 1203.0 688.9 C1201.0 700.1 1198.6 711.2 1195.9 722.4 C1193.2 733.5 1190.2 744.8 1186.8 755.8 C1183.3 766.8 1179.6 777.9 1175.4 788.6 C1171.1 799.2 1166.5 809.8 1161.2 819.7 C1155.9 829.7 1150.2 839.4 1143.7 848.4 C1137.3 857.3 1130.2 865.9 1122.4 873.5 C1114.6 881.2 1106.0 888.2 1096.8 894.3 C1087.6 900.3 1077.6 905.6 1067.3 909.8 C1057.0 913.9 1046.0 917.2 1034.9 919.2 C1023.7 921.2 1012.1 922.2 1000.5 921.8 C988.9 921.4 971.1 917.6 965.2 916.8 L965.5 937.4 C970.2 938.1 984.5 940.6 994.2 941.3 C1003.9 942.0 1013.9 942.1 1023.7 941.6 C1033.5 941.1 1043.4 940.0 1053.0 938.3 C1062.6 936.6 1072.2 934.3 1081.3 931.4 C1090.5 928.5 1099.4 924.9 1107.7 920.7 C1116.1 916.5 1124.0 911.7 1131.5 906.3 C1139.0 900.9 1146.0 894.9 1152.7 888.5 C1159.3 882.2 1165.5 875.2 1171.3 867.9 C1177.2 860.6 1182.6 852.9 1187.6 844.8 C1192.7 836.8 1197.4 828.4 1201.8 819.8 C1206.1 811.2 1210.1 802.2 1213.9 793.2 C1217.6 784.2 1220.9 774.9 1224.0 765.6 C1227.2 756.3 1230.0 746.8 1232.5 737.3 C1235.0 727.9 1237.3 718.4 1239.3 708.9 C1241.3 699.4 1243.1 689.9 1244.6 680.4 C1246.0 670.9 1247.2 661.4 1248.1 651.9 C1249.0 642.4 1249.6 632.9 1249.8 623.4 C1250.1 613.9 1250.1 604.5 1249.8 595.0 C1249.5 585.6 1248.9 576.1 1247.9 566.8 C1247.0 557.4 1245.7 548.0 1244.1 538.7 C1242.5 529.4 1240.5 520.1 1238.4 510.8 C1236.2 501.6 1233.7 492.4 1231.0 483.2 C1228.3 474.0 1225.4 464.9 1222.3 455.8 C1219.3 446.6 1216.0 437.6 1212.7 428.5 C1209.3 419.5 1205.8 410.4 1202.3 401.4 C1198.8 392.4 1195.2 383.5 1191.7 374.5 C1188.1 365.6 1184.5 356.6 1181.0 347.7 C1177.5 338.8 1174.0 330.0 1170.6 321.1 C1167.3 312.2 1162.5 299.0 1160.9 294.6 Z" fill="#5e5e5e"/>
<g clip-path="url(#cpRB)"><path d="M1122.1 297.6 C1123.8 302.9 1129.0 318.6 1132.7 329.2 C1136.4 339.7 1140.4 350.3 1144.4 360.9 C1148.4 371.5 1152.6 382.1 1156.7 392.8 C1160.8 403.4 1165.0 414.1 1168.9 424.8 C1172.9 435.6 1176.9 446.3 1180.5 457.1 C1184.2 467.9 1187.8 478.7 1191.0 489.6 C1194.2 500.5 1197.2 511.4 1199.7 522.4 C1202.2 533.3 1204.4 544.3 1206.1 555.4 C1207.7 566.4 1209.0 577.5 1209.6 588.5 C1210.3 599.6 1210.4 610.8 1210.2 621.9 C1209.9 633.0 1209.1 644.2 1207.9 655.4 C1206.7 666.5 1205.0 677.7 1203.0 688.9 C1201.0 700.1 1198.6 711.2 1195.9 722.4 C1193.2 733.5 1190.2 744.8 1186.8 755.8 C1183.3 766.8 1179.6 777.9 1175.4 788.6 C1171.1 799.2 1166.5 809.8 1161.2 819.7 C1155.9 829.7 1150.2 839.4 1143.7 848.4 C1137.3 857.3 1130.2 865.9 1122.4 873.5 C1114.6 881.2 1106.0 888.2 1096.8 894.3 C1087.6 900.3 1077.6 905.6 1067.3 909.8 C1057.0 913.9 1046.0 917.2 1034.9 919.2 C1023.7 921.2 1012.1 922.2 1000.5 921.8 C988.9 921.4 971.1 917.6 965.2 916.8" stroke="#6a6a6a" stroke-width="22" fill="none" filter="url(#bl6)"/><path d="M1160.9 294.6 C1162.5 299.0 1167.3 312.2 1170.6 321.1 C1174.0 330.0 1177.5 338.8 1181.0 347.7 C1184.5 356.6 1188.1 365.6 1191.7 374.5 C1195.2 383.5 1198.8 392.4 1202.3 401.4 C1205.8 410.4 1209.3 419.5 1212.7 428.5 C1216.0 437.6 1219.3 446.6 1222.3 455.8 C1225.4 464.9 1228.3 474.0 1231.0 483.2 C1233.7 492.4 1236.2 501.6 1238.4 510.8 C1240.5 520.1 1242.5 529.4 1244.1 538.7 C1245.7 548.0 1247.0 557.4 1247.9 566.8 C1248.9 576.1 1249.5 585.6 1249.8 595.0 C1250.1 604.5 1250.1 613.9 1249.8 623.4 C1249.6 632.9 1249.0 642.4 1248.1 651.9 C1247.2 661.4 1246.0 670.9 1244.6 680.4 C1243.1 689.9 1241.3 699.4 1239.3 708.9 C1237.3 718.4 1235.0 727.9 1232.5 737.3 C1230.0 746.8 1227.2 756.3 1224.0 765.6 C1220.9 774.9 1217.6 784.2 1213.9 793.2 C1210.1 802.2 1206.1 811.2 1201.8 819.8 C1197.4 828.4 1192.7 836.8 1187.6 844.8 C1182.6 852.9 1177.2 860.6 1171.3 867.9 C1165.5 875.2 1159.3 882.2 1152.7 888.5 C1146.0 894.9 1139.0 900.9 1131.5 906.3 C1124.0 911.7 1116.1 916.5 1107.7 920.7 C1099.4 924.9 1090.5 928.5 1081.3 931.4 C1072.2 934.3 1062.6 936.6 1053.0 938.3 C1043.4 940.0 1033.5 941.1 1023.7 941.6 C1013.9 942.1 1003.9 942.0 994.2 941.3 C984.5 940.6 970.2 938.1 965.5 937.4" stroke="#474747" stroke-width="14" fill="none" filter="url(#bl6)"/></g>
<path d="M1020.6 254.8 C1017.3 251.9 1007.7 242.4 1000.7 237.4 C993.7 232.3 986.2 228.1 978.6 224.6 C971.0 221.2 963.1 218.5 955.1 216.4 C947.1 214.4 938.8 213.1 930.5 212.4 C922.3 211.7 913.8 211.7 905.5 212.2 C897.2 212.8 888.9 214.0 880.7 215.7 C872.5 217.4 864.4 219.7 856.5 222.5 C848.7 225.3 841.0 228.6 833.6 232.3 C826.3 236.1 819.2 240.3 812.5 244.9 C805.7 249.6 799.3 254.6 793.2 260.0 C787.1 265.4 781.3 271.2 775.8 277.3 C770.3 283.3 765.1 289.8 760.2 296.4 C755.3 303.0 750.7 310.0 746.5 317.1 C742.2 324.3 738.2 331.6 734.5 339.2 C730.7 346.7 727.3 354.4 724.2 362.2 C721.1 370.0 718.2 377.9 715.6 385.9 C713.1 393.9 710.8 402.0 708.8 410.1 C706.8 418.3 705.0 426.5 703.5 434.7 C702.1 443.0 700.9 451.3 699.9 459.6 C699.0 467.9 698.3 476.3 697.9 484.7 C697.5 493.1 697.3 501.5 697.4 509.8 C697.5 518.2 697.8 526.6 698.4 535.0 C699.0 543.4 699.8 551.8 700.9 560.1 C702.0 568.4 703.3 576.7 704.8 585.0 C706.4 593.2 708.2 601.4 710.2 609.6 C712.2 617.7 714.4 625.8 716.9 633.8 C719.4 641.8 722.0 649.7 725.0 657.5 C727.9 665.4 731.0 673.1 734.3 680.7 C737.7 688.4 741.2 695.9 745.0 703.3 C748.8 710.7 752.7 718.0 756.9 725.1 C761.1 732.2 765.4 739.2 770.0 746.0 C774.6 752.8 779.4 759.5 784.5 766.0 C789.5 772.5 794.7 778.8 800.2 784.9 C805.7 790.9 811.4 796.8 817.4 802.5 C823.3 808.2 829.5 813.6 836.0 818.8 C842.4 824.0 849.1 829.0 856.0 833.7 C863.0 838.4 870.1 842.8 877.5 847.0 C884.9 851.2 892.5 855.2 900.2 858.9 C908.0 862.6 920.2 867.5 924.1 869.2 L943.3 836.8 C939.3 835.3 927.0 831.0 919.2 827.6 C911.5 824.2 904.0 820.4 896.8 816.3 C889.6 812.2 882.7 807.8 876.1 803.1 C869.5 798.3 863.1 793.3 857.0 788.0 C850.8 782.7 845.0 777.1 839.4 771.3 C833.8 765.5 828.4 759.4 823.3 753.2 C818.2 746.9 813.3 740.4 808.7 733.7 C804.1 727.0 799.7 720.2 795.5 713.1 C791.3 706.1 787.4 698.9 783.7 691.6 C780.0 684.2 776.5 676.8 773.2 669.2 C769.9 661.6 766.9 653.9 764.0 646.2 C761.1 638.4 758.5 630.6 756.0 622.7 C753.6 614.8 751.4 606.8 749.4 598.8 C747.3 590.7 745.6 582.7 744.0 574.6 C742.5 566.5 741.2 558.3 740.1 550.2 C739.1 542.0 738.2 533.8 737.7 525.7 C737.2 517.5 736.9 509.3 736.9 501.1 C736.9 492.9 737.1 484.8 737.7 476.6 C738.2 468.5 739.1 460.3 740.2 452.3 C741.3 444.2 742.8 436.1 744.5 428.1 C746.3 420.1 748.3 412.2 750.7 404.3 C753.1 396.5 755.7 388.6 758.8 380.9 C761.8 373.2 765.2 365.5 768.9 358.0 C772.6 350.6 776.6 343.2 780.9 336.0 C785.2 328.9 789.9 321.9 794.8 315.2 C799.7 308.6 805.0 302.1 810.5 296.0 C816.0 290.0 821.8 284.2 827.9 278.8 C834.0 273.4 840.4 268.4 847.0 263.9 C853.7 259.4 860.6 255.2 867.7 251.7 C874.9 248.1 882.3 245.0 889.8 242.6 C897.4 240.2 905.2 238.2 913.0 237.1 C920.8 235.9 928.9 235.4 936.9 235.6 C944.9 235.9 953.0 236.9 961.0 238.7 C969.1 240.6 977.2 243.3 985.1 246.9 C993.1 250.5 1004.8 258.3 1008.8 260.5 Z" fill="#5c5c5c"/>
<g clip-path="url(#cpGroove)"><path d="M1020.6 254.8 C1017.3 251.9 1007.7 242.4 1000.7 237.4 C993.7 232.3 986.2 228.1 978.6 224.6 C971.0 221.2 963.1 218.5 955.1 216.4 C947.1 214.4 938.8 213.1 930.5 212.4 C922.3 211.7 913.8 211.7 905.5 212.2 C897.2 212.8 888.9 214.0 880.7 215.7 C872.5 217.4 864.4 219.7 856.5 222.5 C848.7 225.3 841.0 228.6 833.6 232.3 C826.3 236.1 819.2 240.3 812.5 244.9 C805.7 249.6 799.3 254.6 793.2 260.0 C787.1 265.4 781.3 271.2 775.8 277.3 C770.3 283.3 765.1 289.8 760.2 296.4 C755.3 303.0 750.7 310.0 746.5 317.1 C742.2 324.3 738.2 331.6 734.5 339.2 C730.7 346.7 727.3 354.4 724.2 362.2 C721.1 370.0 718.2 377.9 715.6 385.9 C713.1 393.9 710.8 402.0 708.8 410.1 C706.8 418.3 705.0 426.5 703.5 434.7 C702.1 443.0 700.9 451.3 699.9 459.6 C699.0 467.9 698.3 476.3 697.9 484.7 C697.5 493.1 697.3 501.5 697.4 509.8 C697.5 518.2 697.8 526.6 698.4 535.0 C699.0 543.4 699.8 551.8 700.9 560.1 C702.0 568.4 703.3 576.7 704.8 585.0 C706.4 593.2 708.2 601.4 710.2 609.6 C712.2 617.7 714.4 625.8 716.9 633.8 C719.4 641.8 722.0 649.7 725.0 657.5 C727.9 665.4 731.0 673.1 734.3 680.7 C737.7 688.4 741.2 695.9 745.0 703.3 C748.8 710.7 752.7 718.0 756.9 725.1 C761.1 732.2 765.4 739.2 770.0 746.0 C774.6 752.8 779.4 759.5 784.5 766.0 C789.5 772.5 794.7 778.8 800.2 784.9 C805.7 790.9 811.4 796.8 817.4 802.5 C823.3 808.2 829.5 813.6 836.0 818.8 C842.4 824.0 849.1 829.0 856.0 833.7 C863.0 838.4 870.1 842.8 877.5 847.0 C884.9 851.2 892.5 855.2 900.2 858.9 C908.0 862.6 920.2 867.5 924.1 869.2" stroke="#6e6e6e" stroke-width="26" fill="none" filter="url(#bl9)"/><path d="M1008.8 260.5 C1004.8 258.3 993.1 250.5 985.1 246.9 C977.2 243.3 969.1 240.6 961.0 238.7 C953.0 236.9 944.9 235.9 936.9 235.6 C928.9 235.4 920.8 235.9 913.0 237.1 C905.2 238.2 897.4 240.2 889.8 242.6 C882.3 245.0 874.9 248.1 867.7 251.7 C860.6 255.2 853.7 259.4 847.0 263.9 C840.4 268.4 834.0 273.4 827.9 278.8 C821.8 284.2 816.0 290.0 810.5 296.0 C805.0 302.1 799.7 308.6 794.8 315.2 C789.9 321.9 785.2 328.9 780.9 336.0 C776.6 343.2 772.6 350.6 768.9 358.0 C765.2 365.5 761.8 373.2 758.8 380.9 C755.7 388.6 753.1 396.5 750.7 404.3 C748.3 412.2 746.3 420.1 744.5 428.1 C742.8 436.1 741.3 444.2 740.2 452.3 C739.1 460.3 738.2 468.5 737.7 476.6 C737.1 484.8 736.9 492.9 736.9 501.1 C736.9 509.3 737.2 517.5 737.7 525.7 C738.2 533.8 739.1 542.0 740.1 550.2 C741.2 558.3 742.5 566.5 744.0 574.6 C745.6 582.7 747.3 590.7 749.4 598.8 C751.4 606.8 753.6 614.8 756.0 622.7 C758.5 630.6 761.1 638.4 764.0 646.2 C766.9 653.9 771.7 665.4 773.2 669.2" stroke="#353535" stroke-width="24" fill="none" filter="url(#bl6)"/><path d="M700.0 600.0 C705.0 613.3 718.3 655.8 730.0 680.0 C741.7 704.2 755.0 725.0 770.0 745.0 C785.0 765.0 801.7 785.8 820.0 800.0 C838.3 814.2 870.0 825.0 880.0 830.0" stroke="#7e7e7e" stroke-width="10" fill="none" filter="url(#bl6)"/></g>
<path d="M1008.8 260.5 C1004.8 258.3 993.1 250.5 985.1 246.9 C977.2 243.3 969.1 240.6 961.0 238.7 C953.0 236.9 944.9 235.9 936.9 235.6 C928.9 235.4 920.8 235.9 913.0 237.1 C905.2 238.2 897.4 240.2 889.8 242.6 C882.3 245.0 874.9 248.1 867.7 251.7 C860.6 255.2 853.7 259.4 847.0 263.9 C840.4 268.4 834.0 273.4 827.9 278.8 C821.8 284.2 816.0 290.0 810.5 296.0 C805.0 302.1 799.7 308.6 794.8 315.2 C789.9 321.9 785.2 328.9 780.9 336.0 C776.6 343.2 772.6 350.6 768.9 358.0 C765.2 365.5 761.8 373.2 758.8 380.9 C755.7 388.6 753.1 396.5 750.7 404.3 C748.3 412.2 746.3 420.1 744.5 428.1 C742.8 436.1 741.3 444.2 740.2 452.3 C739.1 460.3 738.2 468.5 737.7 476.6 C737.1 484.8 736.9 492.9 736.9 501.1 C736.9 509.3 737.2 517.5 737.7 525.7 C738.2 533.8 739.1 542.0 740.1 550.2 C741.2 558.3 742.5 566.5 744.0 574.6 C745.6 582.7 747.3 590.7 749.4 598.8 C751.4 606.8 753.6 614.8 756.0 622.7 C758.5 630.6 761.1 638.4 764.0 646.2 C766.9 653.9 769.9 661.6 773.2 669.2 C776.5 676.8 780.0 684.2 783.7 691.6 C787.4 698.9 791.3 706.1 795.5 713.1 C799.7 720.2 804.1 727.0 808.7 733.7 C813.3 740.4 818.2 746.9 823.3 753.2 C828.4 759.4 833.8 765.5 839.4 771.3 C845.0 777.1 850.8 782.7 857.0 788.0 C863.1 793.3 869.5 798.3 876.1 803.1 C882.7 807.8 889.6 812.2 896.8 816.3 C904.0 820.4 911.5 824.2 919.2 827.6 C927.0 831.0 939.3 835.3 943.3 836.8 L967.3 831.0 C963.6 829.3 952.3 824.3 944.8 820.7 C937.4 817.2 929.9 813.5 922.6 809.7 C915.3 805.8 908.1 801.8 901.0 797.6 C894.0 793.3 887.1 788.9 880.5 784.2 C873.9 779.6 867.5 774.6 861.3 769.4 C855.2 764.2 849.3 758.8 843.7 753.1 C838.1 747.4 832.8 741.4 827.8 735.2 C822.8 729.0 818.1 722.5 813.7 715.7 C809.3 709.0 805.2 702.0 801.4 694.8 C797.6 687.6 794.1 680.2 790.9 672.7 C787.6 665.2 784.6 657.4 781.7 649.7 C778.9 642.0 776.3 634.1 773.8 626.2 C771.4 618.4 769.1 610.5 766.9 602.5 C764.8 594.6 762.8 586.7 761.1 578.8 C759.3 570.8 757.7 562.8 756.4 554.9 C755.0 546.9 753.9 538.9 753.0 530.9 C752.1 522.9 751.4 514.8 751.0 506.8 C750.6 498.8 750.4 490.7 750.5 482.6 C750.6 474.6 751.0 466.5 751.7 458.4 C752.4 450.3 753.4 442.2 754.7 434.1 C756.0 426.0 757.6 417.9 759.6 409.8 C761.5 401.8 763.8 393.7 766.3 385.9 C768.9 378.0 771.8 370.2 775.0 362.6 C778.3 355.0 781.8 347.5 785.7 340.3 C789.5 333.0 793.7 326.0 798.3 319.2 C802.8 312.5 807.6 306.0 812.8 299.8 C818.0 293.6 823.5 287.8 829.4 282.3 C835.3 276.8 841.5 271.7 848.0 267.0 C854.5 262.4 861.4 258.1 868.6 254.3 C875.7 250.6 883.3 247.2 890.9 244.6 C898.6 242.0 906.5 239.9 914.5 238.5 C922.4 237.2 930.5 236.5 938.5 236.7 C946.5 236.8 954.6 237.7 962.4 239.6 C970.3 241.5 978.1 244.2 985.6 248.0 C993.1 251.8 1003.7 260.1 1007.4 262.5 Z" fill="url(#gBand)"/>
<path d="M1007.4 262.5 C1003.7 260.1 993.1 251.8 985.6 248.0 C978.1 244.2 970.3 241.5 962.4 239.6 C954.6 237.7 946.5 236.8 938.5 236.7 C930.5 236.5 922.4 237.2 914.5 238.5 C906.5 239.9 898.6 242.0 890.9 244.6 C883.3 247.2 875.7 250.6 868.6 254.3 C861.4 258.1 854.5 262.4 848.0 267.0 C841.5 271.7 835.3 276.8 829.4 282.3 C823.5 287.8 818.0 293.6 812.8 299.8 C807.6 306.0 802.8 312.5 798.3 319.2 C793.7 326.0 789.5 333.0 785.7 340.3 C781.8 347.5 778.3 355.0 775.0 362.6 C771.8 370.2 768.9 378.0 766.3 385.9 C763.8 393.7 761.5 401.8 759.6 409.8 C757.6 417.9 756.0 426.0 754.7 434.1 C753.4 442.2 752.4 450.3 751.7 458.4 C751.0 466.5 750.6 474.6 750.5 482.6 C750.4 490.7 750.6 498.8 751.0 506.8 C751.4 514.8 752.1 522.9 753.0 530.9 C753.9 538.9 755.0 546.9 756.4 554.9 C757.7 562.8 759.3 570.8 761.1 578.8 C762.8 586.7 764.8 594.6 766.9 602.5 C769.1 610.5 771.4 618.4 773.8 626.2 C776.3 634.1 778.9 642.0 781.7 649.7 C784.6 657.4 787.6 665.2 790.9 672.7 C794.1 680.2 797.6 687.6 801.4 694.8 C805.2 702.0 809.3 709.0 813.7 715.7 C818.1 722.5 822.8 729.0 827.8 735.2 C832.8 741.4 838.1 747.4 843.7 753.1 C849.3 758.8 855.2 764.2 861.3 769.4 C867.5 774.6 873.9 779.6 880.5 784.2 C887.1 788.9 894.0 793.3 901.0 797.6 C908.1 801.8 915.3 805.8 922.6 809.7 C929.9 813.5 937.4 817.2 944.8 820.7 C952.3 824.3 963.6 829.3 967.3 831.0 L966.7 833.0 C972.2 833.5 989.1 835.8 1000.0 836.0 C1010.9 836.2 1020.7 836.5 1032.0 834.0 C1043.3 831.5 1056.4 826.4 1068.0 821.0 C1079.6 815.6 1093.0 808.5 1101.7 801.7 C1110.4 794.9 1113.5 790.5 1120.0 780.0 C1126.5 769.5 1134.8 753.6 1140.6 738.6 C1146.4 723.6 1151.6 706.4 1155.0 690.0 C1158.4 673.6 1160.2 655.0 1161.0 640.0 C1161.8 625.0 1161.8 615.8 1160.0 600.0 C1158.2 584.2 1154.7 561.7 1150.0 545.0 C1145.3 528.3 1138.7 515.0 1132.0 500.0 C1125.3 485.0 1117.7 470.0 1110.0 455.0 C1102.3 440.0 1096.5 429.5 1086.0 410.0 C1075.5 390.5 1060.2 362.2 1047.0 338.0 C1033.8 313.8 1013.7 277.2 1007.0 265.0 Z" fill="#676767"/>
<path d="M1007.0 265.0 C1013.7 277.2 1033.8 313.8 1047.0 338.0 C1060.2 362.2 1075.5 390.5 1086.0 410.0 C1096.5 429.5 1102.3 440.0 1110.0 455.0 C1117.7 470.0 1125.3 485.0 1132.0 500.0 C1138.7 515.0 1145.3 528.3 1150.0 545.0 C1154.7 561.7 1158.2 584.2 1160.0 600.0 C1161.8 615.8 1161.8 625.0 1161.0 640.0 C1160.2 655.0 1158.4 673.6 1155.0 690.0 C1151.6 706.4 1143.0 730.5 1140.6 738.6 L1150.0 740.0 C1152.3 731.7 1160.7 706.7 1164.0 690.0 C1167.3 673.3 1169.3 655.0 1170.0 640.0 C1170.7 625.0 1170.0 615.8 1168.0 600.0 C1166.0 584.2 1162.7 561.7 1158.0 545.0 C1153.3 528.3 1146.7 515.0 1140.0 500.0 C1133.3 485.0 1125.7 470.0 1118.0 455.0 C1110.3 440.0 1104.5 429.2 1094.0 410.0 C1083.5 390.8 1068.2 363.5 1055.0 340.0 C1041.8 316.5 1021.5 280.8 1014.8 269.0 Z" fill="#606060"/>
<ellipse cx="1042" cy="242" rx="20" ry="7" fill="url(#gHi)" transform="rotate(44 1042 242)"/>
<path d="M1060.0 209.0 C1055.0 205.5 1039.4 193.4 1030.0 188.0 C1020.6 182.6 1013.7 179.1 1003.7 176.3 C993.7 173.5 981.5 172.1 970.0 171.0 C958.5 169.9 940.8 169.8 935.0 169.5" fill="none" stroke="#000" stroke-width="0.9"/>
<path d="M1060.0 234.0 C1053.1 228.6 1031.6 209.6 1018.5 201.5 C1005.4 193.4 995.1 189.8 981.5 185.2 C967.9 180.6 950.6 176.0 937.0 174.0 C923.4 172.0 911.2 172.9 900.0 173.3 C888.8 173.7 875.0 176.0 870.0 176.5" fill="none" stroke="#000" stroke-width="0.9"/>
<path d="M1022.8 254.9 C1019.3 251.9 1009.2 242.3 1001.8 237.0 C994.3 231.7 986.4 227.2 978.2 223.3 C970.0 219.3 961.3 216.1 952.6 213.5 C943.9 211.0 934.8 209.0 925.7 207.8 C916.6 206.5 907.3 205.8 898.1 205.8 C888.8 205.8 879.5 206.4 870.3 207.5 C861.1 208.7 852.0 210.5 843.1 212.9 C834.2 215.3 825.3 218.2 816.9 221.8 C808.5 225.3 800.3 229.4 792.5 234.0 C784.7 238.7 777.3 243.9 770.4 249.6 C763.5 255.4 757.1 261.7 751.2 268.5 C745.3 275.3 740.0 282.7 735.0 290.4 C730.0 298.0 725.6 306.2 721.3 314.4 C717.1 322.7 713.2 331.3 709.5 339.9 C705.8 348.5 702.2 357.3 699.1 366.1 C695.9 374.9 693.0 383.8 690.6 392.7 C688.1 401.6 686.0 410.5 684.3 419.5 C682.5 428.4 681.2 437.4 680.1 446.4 C679.0 455.3 678.3 464.3 677.9 473.3 C677.5 482.3 677.4 491.3 677.5 500.3 C677.7 509.4 678.2 518.4 678.9 527.4 C679.6 536.4 680.6 545.4 681.8 554.4 C683.0 563.4 684.5 572.4 686.2 581.4 C687.9 590.4 689.8 599.4 691.9 608.3 C694.0 617.3 696.3 626.2 698.8 635.1 C701.2 644.1 703.9 653.0 706.7 661.8 C709.5 670.7 712.5 679.5 715.5 688.3 C718.6 697.1 721.8 705.9 725.2 714.6 C728.5 723.3 731.9 732.0 735.5 740.6 C739.1 749.2 742.7 757.7 746.7 766.1 C750.6 774.4 754.7 782.7 759.1 790.7 C763.4 798.7 768.0 806.6 773.0 814.1 C777.9 821.7 783.1 829.0 788.8 836.0 C794.4 842.9 800.3 849.6 806.7 855.9 C813.1 862.2 820.0 868.1 827.2 873.7 C834.4 879.2 842.1 884.3 849.9 889.1 C857.8 893.9 866.1 898.3 874.4 902.5 C882.7 906.7 891.3 910.6 899.8 914.2 C908.3 917.9 921.1 922.9 925.3 924.6" fill="none" stroke="#000" stroke-width="0.9"/>
<path d="M1020.6 254.8 C1017.3 251.9 1007.7 242.4 1000.7 237.4 C993.7 232.3 986.2 228.1 978.6 224.6 C971.0 221.2 963.1 218.5 955.1 216.4 C947.1 214.4 938.8 213.1 930.5 212.4 C922.3 211.7 913.8 211.7 905.5 212.2 C897.2 212.8 888.9 214.0 880.7 215.7 C872.5 217.4 864.4 219.7 856.5 222.5 C848.7 225.3 841.0 228.6 833.6 232.3 C826.3 236.1 819.2 240.3 812.5 244.9 C805.7 249.6 799.3 254.6 793.2 260.0 C787.1 265.4 781.3 271.2 775.8 277.3 C770.3 283.3 765.1 289.8 760.2 296.4 C755.3 303.0 750.7 310.0 746.5 317.1 C742.2 324.3 738.2 331.6 734.5 339.2 C730.7 346.7 727.3 354.4 724.2 362.2 C721.1 370.0 718.2 377.9 715.6 385.9 C713.1 393.9 710.8 402.0 708.8 410.1 C706.8 418.3 705.0 426.5 703.5 434.7 C702.1 443.0 700.9 451.3 699.9 459.6 C699.0 467.9 698.3 476.3 697.9 484.7 C697.5 493.1 697.3 501.5 697.4 509.8 C697.5 518.2 697.8 526.6 698.4 535.0 C699.0 543.4 699.8 551.8 700.9 560.1 C702.0 568.4 703.3 576.7 704.8 585.0 C706.4 593.2 708.2 601.4 710.2 609.6 C712.2 617.7 714.4 625.8 716.9 633.8 C719.4 641.8 722.0 649.7 725.0 657.5 C727.9 665.4 731.0 673.1 734.3 680.7 C737.7 688.4 741.2 695.9 745.0 703.3 C748.8 710.7 752.7 718.0 756.9 725.1 C761.1 732.2 765.4 739.2 770.0 746.0 C774.6 752.8 779.4 759.5 784.5 766.0 C789.5 772.5 794.7 778.8 800.2 784.9 C805.7 790.9 811.4 796.8 817.4 802.5 C823.3 808.2 829.5 813.6 836.0 818.8 C842.4 824.0 849.1 829.0 856.0 833.7 C863.0 838.4 870.1 842.8 877.5 847.0 C884.9 851.2 892.5 855.2 900.2 858.9 C908.0 862.6 920.2 867.5 924.1 869.2" fill="none" stroke="#000" stroke-width="0.9"/>
<path d="M1008.8 260.5 C1004.8 258.3 993.1 250.5 985.1 246.9 C977.2 243.3 969.1 240.6 961.0 238.7 C953.0 236.9 944.9 235.9 936.9 235.6 C928.9 235.4 920.8 235.9 913.0 237.1 C905.2 238.2 897.4 240.2 889.8 242.6 C882.3 245.0 874.9 248.1 867.7 251.7 C860.6 255.2 853.7 259.4 847.0 263.9 C840.4 268.4 834.0 273.4 827.9 278.8 C821.8 284.2 816.0 290.0 810.5 296.0 C805.0 302.1 799.7 308.6 794.8 315.2 C789.9 321.9 785.2 328.9 780.9 336.0 C776.6 343.2 772.6 350.6 768.9 358.0 C765.2 365.5 761.8 373.2 758.8 380.9 C755.7 388.6 753.1 396.5 750.7 404.3 C748.3 412.2 746.3 420.1 744.5 428.1 C742.8 436.1 741.3 444.2 740.2 452.3 C739.1 460.3 738.2 468.5 737.7 476.6 C737.1 484.8 736.9 492.9 736.9 501.1 C736.9 509.3 737.2 517.5 737.7 525.7 C738.2 533.8 739.1 542.0 740.1 550.2 C741.2 558.3 742.5 566.5 744.0 574.6 C745.6 582.7 747.3 590.7 749.4 598.8 C751.4 606.8 753.6 614.8 756.0 622.7 C758.5 630.6 761.1 638.4 764.0 646.2 C766.9 653.9 769.9 661.6 773.2 669.2 C776.5 676.8 780.0 684.2 783.7 691.6 C787.4 698.9 791.3 706.1 795.5 713.1 C799.7 720.2 804.1 727.0 808.7 733.7 C813.3 740.4 818.2 746.9 823.3 753.2 C828.4 759.4 833.8 765.5 839.4 771.3 C845.0 777.1 850.8 782.7 857.0 788.0 C863.1 793.3 869.5 798.3 876.1 803.1 C882.7 807.8 889.6 812.2 896.8 816.3 C904.0 820.4 911.5 824.2 919.2 827.6 C927.0 831.0 939.3 835.3 943.3 836.8" fill="none" stroke="#000" stroke-width="0.9"/>
<path d="M1007.4 262.5 C1003.7 260.1 993.1 251.8 985.6 248.0 C978.1 244.2 970.3 241.5 962.4 239.6 C954.6 237.7 946.5 236.8 938.5 236.7 C930.5 236.5 922.4 237.2 914.5 238.5 C906.5 239.9 898.6 242.0 890.9 244.6 C883.3 247.2 875.7 250.6 868.6 254.3 C861.4 258.1 854.5 262.4 848.0 267.0 C841.5 271.7 835.3 276.8 829.4 282.3 C823.5 287.8 818.0 293.6 812.8 299.8 C807.6 306.0 802.8 312.5 798.3 319.2 C793.7 326.0 789.5 333.0 785.7 340.3 C781.8 347.5 778.3 355.0 775.0 362.6 C771.8 370.2 768.9 378.0 766.3 385.9 C763.8 393.7 761.5 401.8 759.6 409.8 C757.6 417.9 756.0 426.0 754.7 434.1 C753.4 442.2 752.4 450.3 751.7 458.4 C751.0 466.5 750.6 474.6 750.5 482.6 C750.4 490.7 750.6 498.8 751.0 506.8 C751.4 514.8 752.1 522.9 753.0 530.9 C753.9 538.9 755.0 546.9 756.4 554.9 C757.7 562.8 759.3 570.8 761.1 578.8 C762.8 586.7 764.8 594.6 766.9 602.5 C769.1 610.5 771.4 618.4 773.8 626.2 C776.3 634.1 778.9 642.0 781.7 649.7 C784.6 657.4 787.6 665.2 790.9 672.7 C794.1 680.2 797.6 687.6 801.4 694.8 C805.2 702.0 809.3 709.0 813.7 715.7 C818.1 722.5 822.8 729.0 827.8 735.2 C832.8 741.4 838.1 747.4 843.7 753.1 C849.3 758.8 855.2 764.2 861.3 769.4 C867.5 774.6 873.9 779.6 880.5 784.2 C887.1 788.9 894.0 793.3 901.0 797.6 C908.1 801.8 915.3 805.8 922.6 809.7 C929.9 813.5 937.4 817.2 944.8 820.7 C952.3 824.3 963.6 829.3 967.3 831.0" fill="none" stroke="#000" stroke-width="0.9"/>
<path d="M1122.1 297.6 C1123.8 302.9 1129.0 318.6 1132.7 329.2 C1136.4 339.7 1140.4 350.3 1144.4 360.9 C1148.4 371.5 1152.6 382.1 1156.7 392.8 C1160.8 403.4 1165.0 414.1 1168.9 424.8 C1172.9 435.6 1176.9 446.3 1180.5 457.1 C1184.2 467.9 1187.8 478.7 1191.0 489.6 C1194.2 500.5 1197.2 511.4 1199.7 522.4 C1202.2 533.3 1204.4 544.3 1206.1 555.4 C1207.7 566.4 1209.0 577.5 1209.6 588.5 C1210.3 599.6 1210.4 610.8 1210.2 621.9 C1209.9 633.0 1209.1 644.2 1207.9 655.4 C1206.7 666.5 1205.0 677.7 1203.0 688.9 C1201.0 700.1 1198.6 711.2 1195.9 722.4 C1193.2 733.5 1190.2 744.8 1186.8 755.8 C1183.3 766.8 1179.6 777.9 1175.4 788.6 C1171.1 799.2 1166.5 809.8 1161.2 819.7 C1155.9 829.7 1150.2 839.4 1143.7 848.4 C1137.3 857.3 1130.2 865.9 1122.4 873.5 C1114.6 881.2 1106.0 888.2 1096.8 894.3 C1087.6 900.3 1077.6 905.6 1067.3 909.8 C1057.0 913.9 1046.0 917.2 1034.9 919.2 C1023.7 921.2 1012.1 922.2 1000.5 921.8 C988.9 921.4 971.1 917.6 965.2 916.8" fill="none" stroke="#000" stroke-width="0.9"/>
<path d="M1160.9 294.6 C1162.5 299.0 1167.3 312.2 1170.6 321.1 C1174.0 330.0 1177.5 338.8 1181.0 347.7 C1184.5 356.6 1188.1 365.6 1191.7 374.5 C1195.2 383.5 1198.8 392.4 1202.3 401.4 C1205.8 410.4 1209.3 419.5 1212.7 428.5 C1216.0 437.6 1219.3 446.6 1222.3 455.8 C1225.4 464.9 1228.3 474.0 1231.0 483.2 C1233.7 492.4 1236.2 501.6 1238.4 510.8 C1240.5 520.1 1242.5 529.4 1244.1 538.7 C1245.7 548.0 1247.0 557.4 1247.9 566.8 C1248.9 576.1 1249.5 585.6 1249.8 595.0 C1250.1 604.5 1250.1 613.9 1249.8 623.4 C1249.6 632.9 1249.0 642.4 1248.1 651.9 C1247.2 661.4 1246.0 670.9 1244.6 680.4 C1243.1 689.9 1241.3 699.4 1239.3 708.9 C1237.3 718.4 1235.0 727.9 1232.5 737.3 C1230.0 746.8 1227.2 756.3 1224.0 765.6 C1220.9 774.9 1217.6 784.2 1213.9 793.2 C1210.1 802.2 1206.1 811.2 1201.8 819.8 C1197.4 828.4 1192.7 836.8 1187.6 844.8 C1182.6 852.9 1177.2 860.6 1171.3 867.9 C1165.5 875.2 1159.3 882.2 1152.7 888.5 C1146.0 894.9 1139.0 900.9 1131.5 906.3 C1124.0 911.7 1116.1 916.5 1107.7 920.7 C1099.4 924.9 1090.5 928.5 1081.3 931.4 C1072.2 934.3 1062.6 936.6 1053.0 938.3 C1043.4 940.0 1033.5 941.1 1023.7 941.6 C1013.9 942.1 1003.9 942.0 994.2 941.3 C984.5 940.6 970.2 938.1 965.5 937.4" fill="none" stroke="#000" stroke-width="0.9"/>
<path d="M1239.4 276.3 C1240.8 280.6 1245.0 293.5 1247.7 302.1 C1250.4 310.8 1253.0 319.5 1255.5 328.3 C1258.0 337.0 1260.4 345.8 1262.7 354.6 C1265.0 363.5 1267.2 372.4 1269.3 381.3 C1271.4 390.2 1273.4 399.1 1275.3 408.1 C1277.1 417.0 1278.9 426.0 1280.5 435.0 C1282.1 444.1 1283.5 453.1 1284.9 462.1 C1286.2 471.2 1287.4 480.3 1288.4 489.3 C1289.4 498.4 1290.3 507.5 1290.9 516.6 C1291.6 525.7 1292.2 534.8 1292.5 543.9 C1292.9 553.0 1293.0 562.1 1293.0 571.2 C1293.0 580.3 1292.8 589.4 1292.4 598.4 C1292.0 607.5 1291.4 616.6 1290.5 625.6 C1289.7 634.7 1288.7 643.7 1287.4 652.7 C1286.2 661.7 1284.7 670.7 1283.0 679.7 C1281.3 688.6 1279.3 697.6 1277.1 706.4 C1274.9 715.3 1272.5 724.2 1269.8 733.0 C1267.1 741.8 1264.1 750.5 1260.8 759.0 C1257.5 767.6 1253.9 776.0 1249.9 784.2 C1246.0 792.4 1241.6 800.4 1236.9 808.1 C1232.2 815.8 1227.1 823.3 1221.7 830.5 C1216.2 837.8 1210.4 844.7 1204.3 851.5 C1198.2 858.2 1191.7 864.7 1185.1 871.0 C1178.4 877.2 1171.4 883.3 1164.2 889.0 C1157.0 894.7 1149.5 900.2 1141.8 905.3 C1134.1 910.3 1126.2 915.0 1118.1 919.2 C1109.9 923.3 1101.6 927.1 1093.1 930.2 C1084.6 933.3 1075.9 935.9 1067.1 937.8 C1058.3 939.7 1044.7 940.9 1040.2 941.5" fill="none" stroke="#000" stroke-width="0.9"/>
<path d="M1014.8 269.0 C1021.5 280.8 1041.8 316.5 1055.0 340.0 C1068.2 363.5 1083.5 390.8 1094.0 410.0 C1104.5 429.2 1110.3 440.0 1118.0 455.0 C1125.7 470.0 1133.3 485.0 1140.0 500.0 C1146.7 515.0 1153.3 528.3 1158.0 545.0 C1162.7 561.7 1166.0 584.2 1168.0 600.0 C1170.0 615.8 1170.7 625.0 1170.0 640.0 C1169.3 655.0 1167.3 673.3 1164.0 690.0 C1160.7 706.7 1156.2 723.7 1150.0 740.0 C1143.8 756.3 1135.8 773.7 1127.0 788.0 C1118.2 802.3 1107.8 815.5 1097.0 826.0 C1086.2 836.5 1074.0 845.0 1062.0 851.0 C1050.0 857.0 1037.0 859.9 1025.0 862.0 C1013.0 864.1 1001.4 863.5 990.0 863.5 C978.6 863.5 962.2 862.0 956.7 861.7" fill="none" stroke="#000" stroke-width="0.9"/>
<path d="M966.7 833.0 C972.2 833.5 989.1 835.8 1000.0 836.0 C1010.9 836.2 1020.7 836.5 1032.0 834.0 C1043.3 831.5 1056.4 826.4 1068.0 821.0 C1079.6 815.6 1093.0 808.5 1101.7 801.7 C1110.4 794.9 1113.5 790.5 1120.0 780.0 C1126.5 769.5 1134.8 753.6 1140.6 738.6 C1146.4 723.6 1151.6 706.4 1155.0 690.0 C1158.4 673.6 1160.2 655.0 1161.0 640.0 C1161.8 625.0 1161.8 615.8 1160.0 600.0 C1158.2 584.2 1154.7 561.7 1150.0 545.0 C1145.3 528.3 1138.7 515.0 1132.0 500.0 C1125.3 485.0 1117.7 470.0 1110.0 455.0 C1102.3 440.0 1096.5 429.5 1086.0 410.0 C1075.5 390.5 1060.2 362.2 1047.0 338.0 C1033.8 313.8 1013.7 277.2 1007.0 265.0" fill="none" stroke="#000" stroke-width="0.9"/>
<path d="M975.6 709.1 L971.7 709.0 L943.6 707.1 L939.8 706.8 L936.1 706.3 L932.3 705.6 L928.5 704.7 L924.8 703.6 L921.0 702.3 L917.3 700.9 L913.6 699.3 L909.9 697.5 L906.2 695.6 L902.6 693.5 L899.0 691.2 L895.5 688.7 L892.0 686.1 L888.5 683.3 L885.1 680.4 L881.8 677.3 L878.5 674.1 L875.3 670.7 L872.2 667.2 L869.2 663.5 L866.2 659.7 L863.3 655.8 L860.5 651.8 L857.8 647.6 L855.2 643.4 L852.7 639.0 L850.2 634.5 L847.9 630.0 L845.7 625.3 L843.6 620.6 L841.6 615.7 L839.7 610.8 L838.0 605.9 L836.3 600.9 L834.8 595.8 L833.4 590.7 L832.1 585.5 L830.9 580.3 L829.9 575.1 L829.0 569.8 L828.2 564.5 L827.5 559.2 L827.0 553.9 L826.6 548.7 L826.4 543.4 L826.2 538.1 L826.2 532.9 L826.4 527.6 L826.6 522.5 L827.0 517.3 L827.6 512.2 L828.2 507.2 L829.0 502.2 L829.9 497.3 L831.0 492.4 L832.1 487.7 L833.4 483.0 L834.9 478.4 L836.4 473.9 L838.1 469.5 L839.8 465.2 L841.7 461.0 L843.7 456.9 L845.8 453.0 L848.1 449.1 L850.4 445.4 L852.8 441.9 L855.3 438.5 L858.0 435.2 L860.7 432.0 L863.5 429.1 L866.4 426.2 L869.3 423.6 L872.4 421.0 L875.5 418.7 L878.7 416.5 L882.0 414.5 L885.3 412.7 L888.7 411.0 L892.2 409.5 L895.7 408.2 L921.9 398.5 L925.6 397.3 L929.3 396.4 L933.1 395.6 L936.9 395.0 L940.7 394.5 L944.6 394.3 L948.4 394.3 L952.3 394.4 L956.2 394.8 L960.2 395.3 L964.1 396.1 L968.0 397.0 L971.9 398.1 L975.8 399.4 L979.7 400.9 L983.5 402.5 L987.4 404.4 L991.2 406.4 L994.9 408.6 L998.7 411.0 L1002.3 413.6 L1006.0 416.3 L1009.5 419.2 L1013.1 422.2 L1016.5 425.4 L1019.9 428.8 L1023.2 432.3 L1026.5 435.9 L1029.6 439.7 L1032.7 443.7 L1035.7 447.7 L1038.6 451.9 L1041.5 456.2 L1044.2 460.6 L1046.8 465.2 L1049.3 469.8 L1051.7 474.6 L1054.0 479.4 L1056.2 484.3 L1058.3 489.3 L1060.2 494.4 L1062.1 499.6 L1063.8 504.8 L1065.4 510.1 L1066.8 515.4 L1068.2 520.8 L1069.4 526.2 L1070.5 531.6 L1071.4 537.1 L1072.2 542.5 L1072.9 548.0 L1073.4 553.5 L1073.8 559.0 L1074.1 564.5 L1074.2 570.0 L1074.2 575.4 L1074.1 580.8 L1073.8 586.2 L1073.4 591.6 L1072.8 596.8 L1072.2 602.1 L1071.3 607.3 L1070.4 612.4 L1069.3 617.4 L1068.1 622.3 L1066.8 627.2 L1065.3 632.0 L1063.7 636.7 L1062.0 641.2 L1060.1 645.7 L1058.2 650.1 L1056.1 654.3 L1053.9 658.4 L1051.6 662.4 L1049.2 666.2 L1046.6 669.9 L1044.0 673.5 L1041.3 676.9 L1038.5 680.1 L1035.6 683.2 L1032.5 686.2 L1029.5 688.9 L1026.3 691.5 L1023.0 694.0 L1019.7 696.3 L1016.3 698.3 L1012.9 700.2 L1009.3 702.0 L1005.8 703.5 L1002.1 704.9 L998.4 706.1 L994.7 707.0 L990.9 707.8 L987.1 708.4 L983.3 708.9 L979.4 709.1 Z" fill="url(#gCyl)" stroke="#000" stroke-width="0.9"/>
<ellipse cx="934.3" cy="555.7" rx="106.2" ry="152.9" transform="rotate(-10.5 934.3 555.7)" fill="#676767" stroke="#000" stroke-width="0.9"/>
<path d="M856.8 442.1 L906.3 432.3 L909.4 431.8 L912.5 431.4 L915.7 431.3 L918.9 431.2 L922.1 431.4 L925.3 431.7 L928.5 432.1 L931.7 432.7 L934.9 433.5 L938.1 434.4 L941.3 435.4 L944.5 436.7 L947.7 438.0 L950.8 439.5 L953.9 441.2 L957.0 443.0 L960.1 445.0 L963.1 447.1 L966.1 449.3 L969.0 451.7 L971.9 454.2 L974.7 456.8 L977.5 459.5 L980.2 462.4 L982.9 465.4 L985.5 468.5 L988.0 471.8 L990.5 475.1 L992.9 478.5 L995.2 482.1 L997.4 485.7 L999.6 489.4 L1001.6 493.2 L1003.6 497.1 L1005.5 501.1 L1007.3 505.1 L1009.0 509.2 L1010.6 513.4 L1012.1 517.6 L1013.5 521.9 L1014.8 526.2 L1016.0 530.6 L1017.1 535.0 L1018.1 539.4 L1019.0 543.9 L1019.8 548.4 L1020.4 552.9 L1021.0 557.4 L1021.4 561.9 L1021.8 566.4 L1022.0 570.9 L1022.1 575.4 L1022.1 579.9 L1022.0 584.3 L1021.7 588.7 L1021.4 593.1 L1020.9 597.4 L1020.4 601.7 L1019.7 606.0 L1018.9 610.2 L1018.0 614.3 L1017.0 618.4 L1015.9 622.4 L1014.7 626.3 L1013.4 630.1 L1012.0 633.9 L1010.5 637.5 L1008.9 641.1 L1007.2 644.6 L1005.4 647.9 L1003.5 651.2 L1001.5 654.4 L999.4 657.4 L997.3 660.3 L995.1 663.1 L992.7 665.8 L990.4 668.3 L987.9 670.7 L985.4 673.0 L982.7 675.2 L980.1 677.2 L977.4 679.0 L974.6 680.7 L971.7 682.3 L968.8 683.7 L965.9 685.0 L962.9 686.1 L959.9 687.1 L956.8 687.9 L953.7 688.5 L904.2 697.3 L901.0 697.8 L897.9 698.2 L894.8 698.3 L891.6 698.4 L888.4 698.2 L885.2 698.0 L882.0 697.5 L878.8 696.9 L875.6 696.2 L872.4 695.3 L869.2 694.2 L866.0 693.0 L862.9 691.6 L859.7 690.1 L856.6 688.4 L853.6 686.6 L850.5 684.7 L847.5 682.6 L844.5 680.4 L841.6 678.0 L838.7 675.5 L835.9 672.9 L833.1 670.2 L830.4 667.3 L827.8 664.3 L825.2 661.2 L822.7 658.0 L820.2 654.7 L817.8 651.3 L815.5 647.7 L813.3 644.1 L811.2 640.4 L809.1 636.6 L807.1 632.8 L805.2 628.8 L803.5 624.8 L801.8 620.7 L800.2 616.5 L798.7 612.3 L797.3 608.1 L796.0 603.7 L794.8 599.4 L793.7 595.0 L792.7 590.6 L791.8 586.1 L791.0 581.7 L790.4 577.2 L789.8 572.7 L789.4 568.2 L789.1 563.7 L788.8 559.2 L788.7 554.8 L788.7 550.3 L788.8 545.9 L789.1 541.5 L789.4 537.1 L789.9 532.8 L790.4 528.5 L791.1 524.3 L791.9 520.1 L792.8 516.0 L793.7 512.0 L794.8 508.0 L796.0 504.1 L797.4 500.3 L798.8 496.5 L800.3 492.9 L801.9 489.3 L803.6 485.9 L805.4 482.5 L807.3 479.2 L809.2 476.1 L811.3 473.1 L813.4 470.2 L815.7 467.4 L818.0 464.7 L820.4 462.2 L822.8 459.8 L825.3 457.5 L827.9 455.4 L830.6 453.4 L833.3 451.5 L836.1 449.8 L838.9 448.3 L841.8 446.9 L844.7 445.6 L847.7 444.5 L850.7 443.5 L853.8 442.7 Z" fill="url(#gCyl)" stroke="#000" stroke-width="0.9"/>
<ellipse cx="880.5" cy="569.7" rx="90.2" ry="129.8" transform="rotate(-10.5 880.5 569.7)" fill="#676767" stroke="#000" stroke-width="0.9"/>
<ellipse cx="880.5" cy="572.4" rx="81.5" ry="118.7" transform="rotate(-14 880.5 572.4)" fill="url(#gBore)" stroke="#000" stroke-width="0.9"/>
<g clip-path="url(#cpBore)"><ellipse cx="988" cy="539.5" rx="81.5" ry="118.7" transform="rotate(-14 988 539.5)" fill="#fff" stroke="#000" stroke-width="0.9"/></g>
<ellipse cx="880.5" cy="572.4" rx="81.5" ry="118.7" transform="rotate(-14 880.5 572.4)" fill="none" stroke="#000" stroke-width="0.9"/>
<clipPath id="cpH1"><ellipse cx="835" cy="690.8" rx="12.6" ry="17.6" transform="rotate(-12 835 690.8)"/></clipPath>
<ellipse cx="835" cy="690.8" rx="12.6" ry="17.6" transform="rotate(-12 835 690.8)" fill="#4c4c4c"/>
<g clip-path="url(#cpH1)"><path d="M841.4 677.5 L847.4 698.8 L852 698 L852 670 Z" fill="#666"/><path d="M825 695 Q832 710 845 706 L845 712 L820 712Z" fill="#555"/></g>
<path d="M841.4 677.5 L847.4 698.8" stroke="#000" stroke-width="0.9"/>
<ellipse cx="835" cy="690.8" rx="12.6" ry="17.6" transform="rotate(-12 835 690.8)" fill="none" stroke="#000" stroke-width="1"/>
<clipPath id="cpH2"><ellipse cx="1100.5" cy="759.7" rx="12.3" ry="17.6" transform="rotate(-6 1100.5 759.7)"/></clipPath>
<ellipse cx="1100.5" cy="759.7" rx="12.3" ry="17.6" transform="rotate(-6 1100.5 759.7)" fill="#4e4e4e"/>
<g clip-path="url(#cpH2)"><path d="M1105.5 746 L1110.5 768 L1120 768 L1120 740 Z" fill="#fff"/></g>
<path d="M1105.5 746 L1110.5 768" stroke="#000" stroke-width="0.9"/>
<ellipse cx="1100.5" cy="759.7" rx="12.3" ry="17.6" transform="rotate(-6 1100.5 759.7)" fill="none" stroke="#000" stroke-width="1"/>
<path d="M967.5 831.7 C964.9 832.7 957.1 835.3 951.7 837.5 C946.3 839.7 939.2 841.8 935.0 845.0 C930.8 848.2 928.6 853.1 926.7 856.7 C924.8 860.3 924.2 854.5 923.7 866.7 C923.2 878.9 922.7 917.1 923.7 930.0 C924.8 942.9 927.3 941.4 930.0 944.0 C932.7 946.6 935.5 946.0 940.0 945.8 C944.5 945.5 951.7 943.8 956.7 942.5 C961.7 941.2 967.8 939.0 970.0 938.3 L970 938 L958 925 L958.0 925.0 C955.0 925.3 943.4 927.2 940.0 926.7 C936.6 926.2 937.9 932.3 937.5 921.7 C937.1 911.1 937.1 873.7 937.5 863.3 C937.9 852.9 937.1 860.5 940.0 859.2 C942.9 858.0 952.0 857.3 955.0 855.8 C958.0 854.3 956.2 854.0 958.3 850.0 C960.4 846.0 966.0 834.8 967.5 831.7 Z" fill="#464646" stroke="#000" stroke-width="0.9"/>
<path d="M938 862 L956 856 L956 923 L938 922 Z" fill="#6b6b6b" stroke="#000" stroke-width="0.8"/>
<path d="M938 874 L956 882 M938 878 L956 886 M938 885 L956 893" stroke="#000" stroke-width="0.6"/><path d="M938 879 L956 887 L956 893 L938 885Z" fill="#7a7a7a"/>
<path d="M731.3 818.6 L778.8 790.5 L771.0 811.6 L776.2 825.6 L722.5 838.8 Z" fill="#3f3f3f" stroke="#000" stroke-width="0.9"/>
<path d="M698.8 814.2 L709.4 794.0 L731.3 818.6 L722.5 838.8 Z" fill="#5d5d5d" stroke="#000" stroke-width="0.9"/>
<path d="M709.4 793.0 L756.9 765.8 L778.8 790.5 L731.3 818.6 Z" fill="#686868" stroke="#000" stroke-width="0.9"/>
<path d="M814.0 911.0 L859.8 885.5 L854.5 903.0 L866.0 915.4 L806.0 930.3 Z" fill="#3f3f3f" stroke="#000" stroke-width="0.9"/>
<path d="M783.2 905.7 L793.8 886.3 L814.0 911.0 L806.0 930.3 Z" fill="#5d5d5d" stroke="#000" stroke-width="0.9"/>
<path d="M793.8 885.5 L837.8 860.0 L859.8 885.5 L814.0 911.0 Z" fill="#686868" stroke="#000" stroke-width="0.9"/>
<path d="M1007 263 Q1006 259.5 1011 258.5 L1104 239 Q1112 237.5 1125 240.5 L1232 267.5 Q1239 270 1238 275 Q1236 279 1230 281 L1162 295.5 Q1150 297.5 1135 296.5 L1011 267.5 Q1007 266 1007 263 Z" fill="#6a6a6a" stroke="#000" stroke-width="0.9"/>
<path d="M1026 263 Q1024 261.5 1028 260 L1108 244.5 L1212 270.5 Q1218 272.5 1214 274.5 L1155 288.8 Q1145 291.5 1135 291 Z" fill="#565656" stroke="#000" stroke-width="0.9"/>
<path d="M1060 271 L1060 250 Q1060 241 1070 238 L1092 233.5 Q1102 232 1107 239 L1111 272 Z" fill="#5a5a5a" stroke="#000" stroke-width="0.8"/>
<path d="M1060 252.3 L1106.8 242" stroke="#000" stroke-width="0.8"/>
<path d="M1099 243.2 L1108 244.5 L1153.6 288.8 L1140 290 L1127.6 282.3 Z" fill="#6c6c6c" stroke="#000" stroke-width="0.8"/>
<path d="M1083 278.4 L1110.7 271.9 L1116 277.5 L1099 281.5 Z" fill="#5e5e5e" stroke="#000" stroke-width="0.7"/>
</svg>
<svg style="left:370px;top:900px" width="80" height="100" viewBox="370 900 80 100"><path d="M385 926 L423 914" stroke="#7cc47a" stroke-width="3"/><path d="M415 909 L426 913 L416 920Z" fill="#7cc47a"/><rect x="411" y="912" width="4" height="4" fill="#3a9a3a"/><path d="M385 928 L420 937" stroke="#6a8ae0" stroke-width="3"/><circle cx="414" cy="935" r="3" fill="#5a9af0"/><path d="M412 931 L424 937 L412 939Z" fill="#8ab0f0"/><path d="M384.5 930 V970" stroke="#e88a8a" stroke-width="3"/><path d="M380 965 H389 L384.5 980Z" fill="#e87a7a"/><circle cx="384.5" cy="926" r="6" fill="#f6f08a" stroke="#d8d070" stroke-width="0.8"/><text x="424" y="918" font-family="Liberation Serif" font-size="11" fill="#7aa87a">Y</text><text x="424" y="941" font-family="Liberation Serif" font-size="11" fill="#6a7aa8">Z</text><text x="380" y="991" font-family="Liberation Serif" font-size="11" fill="#d88a8a">X</text></svg>
</body></html>
